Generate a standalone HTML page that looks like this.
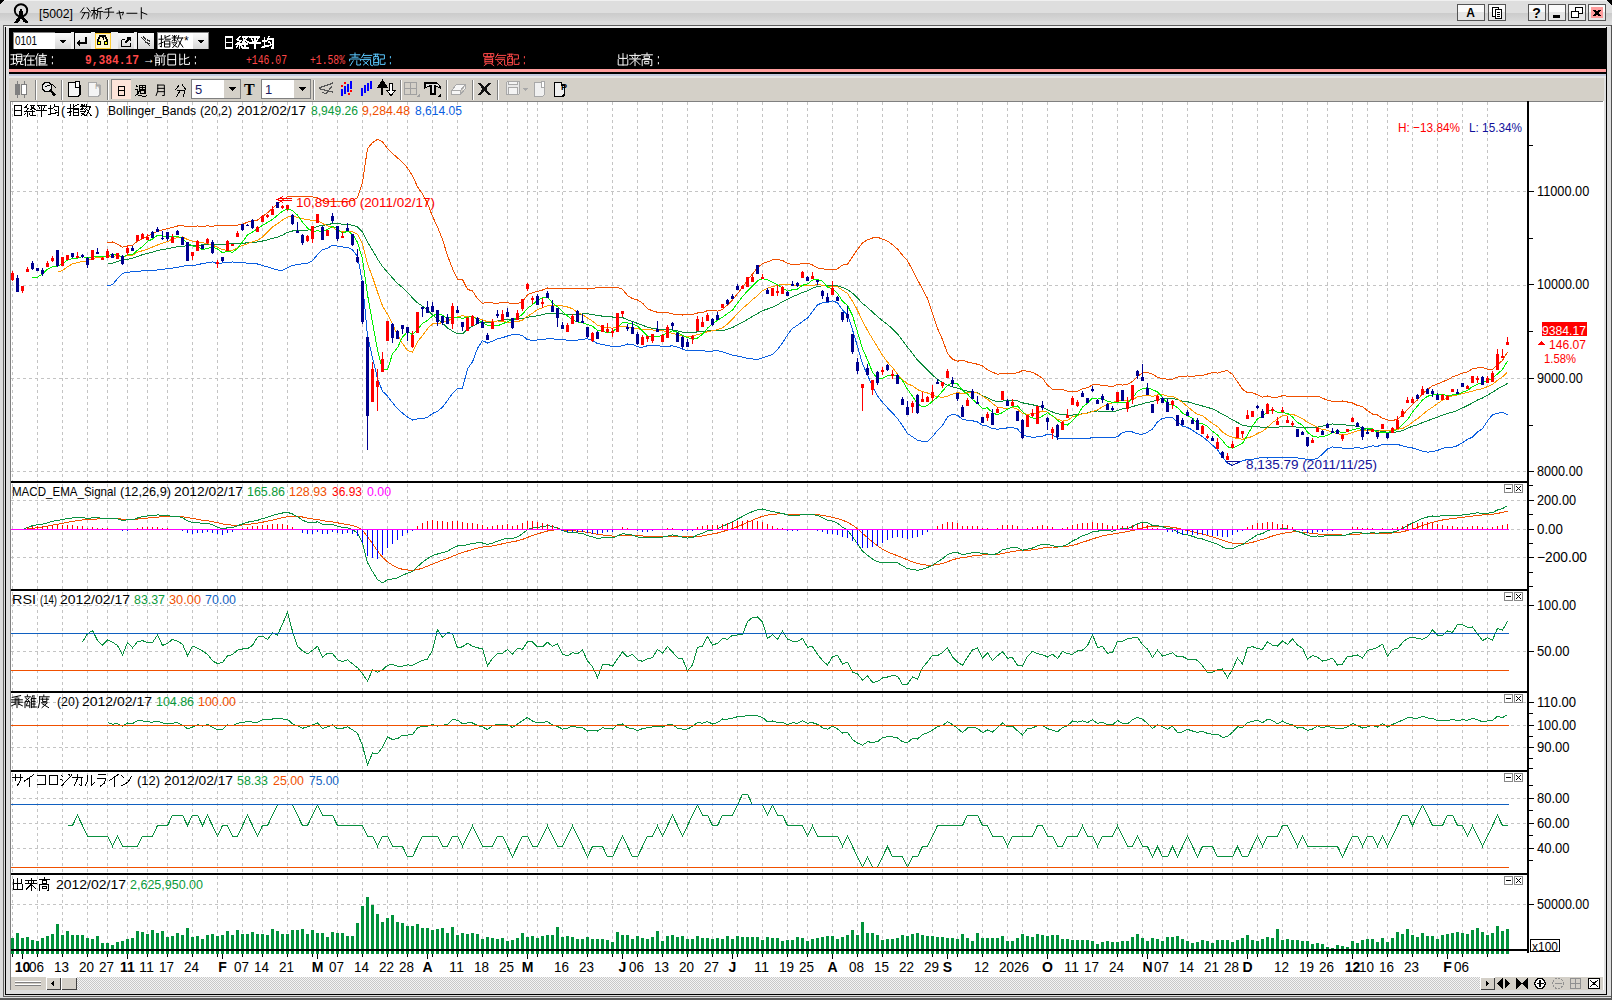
<!DOCTYPE html><html><head><meta charset="utf-8"><style>html,body{margin:0;padding:0;overflow:hidden}body{width:1612px;height:1000px;background:#dcdcdc}svg{display:block;font-family:"Liberation Sans",sans-serif}</style></head><body><svg width="1612" height="1000" viewBox="0 0 1612 1000" shape-rendering="crispEdges"><defs><linearGradient id="tb" x1="0" y1="0" x2="0" y2="1"><stop offset="0" stop-color="#cbcbcb"/><stop offset="1" stop-color="#d8d8d8"/></linearGradient><linearGradient id="btn" x1="0" y1="0" x2="0" y2="1"><stop offset="0" stop-color="#fbfbfb"/><stop offset="1" stop-color="#d6d6d6"/></linearGradient><pattern id="hatch" width="2" height="2" patternUnits="userSpaceOnUse"><rect width="2" height="2" fill="#f4f4f4"/><rect width="1" height="1" fill="#c8c8c8"/><rect x="1" y="1" width="1" height="1" fill="#c8c8c8"/></pattern></defs>
<rect x="0" y="0" width="1612" height="1000" fill="#dcdcdc" />
<rect x="0" y="0" width="1612" height="25" fill="#dedede" />
<rect x="0" y="0" width="1612" height="1" fill="#f0f0f0" />
<rect x="0" y="13" width="1612" height="8" fill="url(#tb)" />
<rect x="0" y="21" width="1612" height="4" fill="#dcdcdc" />
<path d="M0 0H4L0 4Z" fill="#000"/><path d="M1612 0H1606L1612 6Z" fill="#000"/>
<rect x="3" y="25" width="1609" height="1" fill="#606060" />
<rect x="3" y="25" width="1" height="972" fill="#606060" />
<rect x="3" y="996" width="1609" height="1" fill="#606060" />
<rect x="4" y="26" width="1606" height="1" fill="#f4f4f4" />
<rect x="5" y="27" width="1" height="968" fill="#000" />
<rect x="5" y="994" width="1602" height="1" fill="#000" />
<rect x="1606" y="27" width="1" height="968" fill="#000" />
<rect x="6" y="26" width="1600" height="2" fill="#f2f2f2" />
<rect x="1611" y="25" width="1" height="975" fill="#505050" />
<rect x="0" y="998" width="1612" height="1" fill="#585858" />
<rect x="0" y="999" width="1612" height="1" fill="#585858" />
<rect x="6" y="28" width="1600" height="966" fill="#dedede" />
<rect x="9" y="28" width="1597" height="46" fill="#000" />
<rect x="9" y="69" width="1597" height="3" fill="#ff9e9e" />
<rect x="9" y="74" width="1597" height="2" fill="#c3c9de" />
<rect x="9" y="76" width="1597" height="2" fill="#e6e6e6" />
<rect x="9" y="78" width="1595" height="23" fill="#d4d0c8" />
<rect x="10" y="101" width="1594" height="889" fill="#fff" />
<rect x="10" y="101" width="1593" height="1" fill="#808080" />
<rect x="10" y="101" width="1" height="889" fill="#808080" />
<rect x="11" y="977" width="1592" height="13" fill="#d4d0c8" />
<rect x="77" y="977" width="1403" height="13" fill="url(#hatch)" />
<circle cx="21" cy="10.4" r="6.2" fill="none" stroke="#000" stroke-width="1.9" shape-rendering="geometricPrecision"/>
<circle cx="21" cy="9.8" r="1.3" fill="#000"/><path d="M19.6 10.5h2.8l0.8 5.5l4.3 5.2l0.3 1.5l-4 -0.3l-2.8-4.6l-2.6 4.8l-4.3 0.4l0.6-1.5l4.2-4.9z" fill="#000"/>
<text x="39" y="17.5" font-size="13.5" fill="#000" textLength="34" lengthAdjust="spacingAndGlyphs" >[5002]</text>
<path transform="translate(80.00,7.20) scale(1.100)" d="M3.5 0.5L0.5 4.5 M6.5 0.5L9.5 4.5 M2 5H8V8L7 10.5 M4.5 5L1.5 10.5" fill="none" stroke="#000" stroke-width="0.909" stroke-linecap="square"/><path transform="translate(91.60,7.20) scale(1.100)" d="M0 3H4.5 M2.3 0.5V10.5 M2 4L0 8 M2.5 4L4.5 7 M9 0.5L5.5 1.5V6L4.5 10 M5.5 4H10 M7.8 4V10.5" fill="none" stroke="#000" stroke-width="0.909" stroke-linecap="square"/><path transform="translate(103.20,7.20) scale(1.100)" d="M7.5 0.5L2 2 M0.5 4.5H9.5 M5 2V8L3 10.5" fill="none" stroke="#000" stroke-width="0.909" stroke-linecap="square"/><path transform="translate(114.80,7.20) scale(1.100)" d="M2 5.5L8 4.5L7 7 M4 3.5L5.5 10.5" fill="none" stroke="#000" stroke-width="0.909" stroke-linecap="square"/><path transform="translate(126.40,7.20) scale(1.100)" d="M0.5 5.5H9.5" fill="none" stroke="#000" stroke-width="0.909" stroke-linecap="square"/><path transform="translate(138.00,7.20) scale(1.100)" d="M3 0.5V10.5 M3 4.5L8 6.5" fill="none" stroke="#000" stroke-width="0.909" stroke-linecap="square"/>
<rect x="1457.5" y="4.5" width="27" height="16" fill="#fafafa" stroke="#555" stroke-width="1"/><rect x="1458" y="12" width="26" height="8" fill="#e6e6e6"/>
<rect x="1488.5" y="4.5" width="17" height="16" fill="#fafafa" stroke="#555" stroke-width="1"/><rect x="1489" y="12" width="16" height="8" fill="#e6e6e6"/>
<rect x="1528.5" y="4.5" width="17" height="16" fill="#fafafa" stroke="#555" stroke-width="1"/><rect x="1529" y="12" width="16" height="8" fill="#e6e6e6"/>
<rect x="1548.5" y="4.5" width="17" height="16" fill="#fafafa" stroke="#555" stroke-width="1"/><rect x="1549" y="12" width="16" height="8" fill="#e6e6e6"/>
<rect x="1568.5" y="4.5" width="17" height="16" fill="#fafafa" stroke="#555" stroke-width="1"/><rect x="1569" y="12" width="16" height="8" fill="#e6e6e6"/>
<rect x="1588.5" y="4.5" width="17" height="16" fill="#fafafa" stroke="#555" stroke-width="1"/><rect x="1589" y="12" width="16" height="8" fill="#e6e6e6"/>
<text x="1470.5" y="17" font-size="12" font-weight="bold" text-anchor="middle" fill="#000">A</text>
<rect x="1492.5" y="7.5" width="6" height="9" fill="#fff" stroke="#000"/><rect x="1495.5" y="9.5" width="6" height="9" fill="#fff" stroke="#000"/><path d="M1497 12h3M1497 14h3M1497 16h3" stroke="#000"/>
<text x="1536.5" y="18" font-size="14" font-weight="bold" text-anchor="middle" fill="#000">?</text>
<rect x="1553" y="15" width="7" height="3" fill="#000" />
<rect x="1575.5" y="7.5" width="7" height="6" fill="#fff" stroke="#000" stroke-width="1.5"/><rect x="1571.5" y="11.5" width="7" height="6" fill="#fff" stroke="#000" stroke-width="1.5"/>
<rect x="1591" y="7" width="12" height="11" fill="#ff9c9c" />
<path d="M1593.5 10L1600.5 16M1600.5 10L1593.5 16" stroke="#000" stroke-width="2"/>
<rect x="13" y="32" width="42" height="17" fill="#808080" />
<rect x="14" y="33" width="41" height="16" fill="#fff" />
<text x="15" y="44.5" font-size="13" fill="#000" textLength="22" lengthAdjust="spacingAndGlyphs" >0101</text>
<rect x="55" y="33" width="16" height="16" fill="url(#btn)" />
<path d="M59 40h7l-3.5 3.5z" fill="#000"/>
<rect x="71" y="32" width="3" height="17" fill="#f0f0f0" />
<rect x="75" y="33" width="16" height="16" fill="url(#btn)" />
<rect x="91" y="32" width="4" height="17" fill="#f0f0f0" />
<rect x="95" y="33" width="16" height="16" fill="#fff7d0" />
<rect x="95.5" y="33.5" width="15" height="15" fill="none" stroke="#ffcc33"/>
<rect x="111" y="32" width="7" height="17" fill="#f0f0f0" />
<rect x="118" y="33" width="16" height="16" fill="url(#btn)" />
<rect x="134" y="32" width="3" height="17" fill="#f0f0f0" />
<rect x="138" y="33" width="16" height="16" fill="url(#btn)" />
<path d="M86 37v6h-8M80.5 40.5L77.5 43L80.5 45.5" fill="none" stroke="#000" stroke-width="1.5"/>
<path d="M98 45v-5l2-4h3l0.5 4M107 45v-5l-2-4h-3" fill="none" stroke="#000" stroke-width="1.6"/><rect x="97" y="41" width="4" height="4" fill="#000"/><rect x="104" y="41" width="4" height="4" fill="#000"/><rect x="98" y="42" width="2" height="2" fill="#ff0"/><rect x="105" y="42" width="2" height="2" fill="#ff0"/>
<path d="M121.5 39.5v7h9v-4M121.5 39.5h3" fill="none" stroke="#000" stroke-width="1.5"/><path d="M125 43l5-5M127 38h3.5v3" fill="none" stroke="#000" stroke-width="1.5"/>
<path d="M141 37l9 9M143 36l3 4M145 42l5 2M147 40l3 1" fill="none" stroke="#333" stroke-width="1.3"/>
<rect x="157" y="32" width="52" height="17" fill="#808080" />
<rect x="158" y="33" width="35" height="16" fill="#fff" />
<rect x="193" y="33" width="15" height="16" fill="url(#btn)" />
<path d="M197 40h7l-3.5 3.5z" fill="#000"/>
<path transform="translate(159.00,35.00) scale(1.200)" d="M0 3.5H3.5 M2 0.5V10L1 9.5 M0 7.5L3.5 6 M5 0.5V3.5H9.5 M9 0.5L5.5 2 M5 5H9V10H5Z M5 7.5H9" fill="none" stroke="#000" stroke-width="0.833" stroke-linecap="square"/><path transform="translate(171.50,35.00) scale(1.200)" d="M1 0.5L2 2 M4 0.5L3 2 M0.5 2.5H4.5 M2.5 0.5V5 M0.5 5L2.5 3.5L4.5 5.5 M0.5 6.5H4.5L1 10.5 M1.5 8L4.5 10 M6 0.5L5 4 M5.5 2.5H9.5 M9 2.5L5.5 10 M6 5L9.5 10" fill="none" stroke="#000" stroke-width="0.833" stroke-linecap="square"/>
<text x="184" y="45" font-size="12" fill="#000" >*</text>
<path transform="translate(223.00,36.00) scale(1.200)" d="M2 1H8V10H2Z M2 5.5H8" fill="none" stroke="#fff" stroke-width="1.333" stroke-linecap="square"/><path transform="translate(235.90,36.00) scale(1.200)" d="M3 0.5L1 3L4 4L1 6.5H5 M3 6.5V10.5 M1 8.5L0.5 9.5 M4.5 8L5 9 M5.5 1H9.5L6 5 M6.5 2.5L10 5 M6 6.5H9.5 M7.7 5.5V10 M5.5 10H10" fill="none" stroke="#fff" stroke-width="1.333" stroke-linecap="square"/><path transform="translate(248.80,36.00) scale(1.200)" d="M1 1H9 M2.5 2.5L3.5 4.5 M7.5 2.5L6.5 4.5 M0.5 6H9.5 M5 1V10.5" fill="none" stroke="#fff" stroke-width="1.333" stroke-linecap="square"/><path transform="translate(261.70,36.00) scale(1.200)" d="M0.5 4H4 M2.2 1.5V9 M0.5 9.5L4.5 8 M6 0.5L5 3.5 M5.5 2.5H9.5V10H8.5 M6 5L7.5 6 M5 8.5L8.5 7" fill="none" stroke="#fff" stroke-width="1.333" stroke-linecap="square"/>
<path transform="translate(11.00,53.00) scale(1.200)" d="M0 1.5H4 M0 5H4 M2 1.5V9 M0 9.5L4 8.5 M5 1H9V7H5Z M5 3H9 M5 5H9 M6 7L4.5 10 M8 7V9.5H10" fill="none" stroke="#fff" stroke-width="0.833" stroke-linecap="square"/><path transform="translate(23.00,53.00) scale(1.200)" d="M0.5 2.5H9.5 M4.5 0.5L1 6 M2 5V10.5 M4 6H9 M6.5 4V9.5 M3.5 10H9.5" fill="none" stroke="#fff" stroke-width="0.833" stroke-linecap="square"/><path transform="translate(35.00,53.00) scale(1.200)" d="M2.5 0.5L0.5 5 M1.5 3.5V10.5 M3.5 2H9.5 M6.5 0.5V3 M4.5 3.5H8.5V9H4.5Z M4.5 5.3H8.5 M4.5 7.2H8.5 M3.5 10H10 M3.5 3.5V10" fill="none" stroke="#fff" stroke-width="0.833" stroke-linecap="square"/><path transform="translate(47.00,53.00) scale(1.200)" d="M4.5 3V4 M4.5 8V9" fill="none" stroke="#fff" stroke-width="0.833" stroke-linecap="square"/>
<text x="85" y="63.5" font-size="12.5" fill="#ff4848" textLength="54" lengthAdjust="spacingAndGlyphs" font-family="Liberation Mono" font-weight="bold">9,384.17</text>
<text x="143" y="63" font-size="12" fill="#fff" >&#8594;</text>
<path transform="translate(154.00,53.00) scale(1.200)" d="M2 0.5L3 2 M8 0.5L7 2 M0.5 2.5H9.5 M1.5 4H4.5V10H4 M1.5 4V10.5 M1.5 6H4.5 M1.5 8H4.5 M6.5 4V8 M8.5 3.5V10L7.5 10" fill="none" stroke="#fff" stroke-width="0.833" stroke-linecap="square"/><path transform="translate(166.00,53.00) scale(1.200)" d="M2 1H8V10H2Z M2 5.5H8" fill="none" stroke="#fff" stroke-width="0.833" stroke-linecap="square"/><path transform="translate(178.00,53.00) scale(1.200)" d="M1.5 1V10L4 9 M1.5 5H4 M5.5 1V9.5H9.5V8 M5.5 5L9 3.5" fill="none" stroke="#fff" stroke-width="0.833" stroke-linecap="square"/><path transform="translate(190.00,53.00) scale(1.200)" d="M4.5 3V4 M4.5 8V9" fill="none" stroke="#fff" stroke-width="0.833" stroke-linecap="square"/>
<text x="246" y="63.5" font-size="12.5" fill="#ff4848" textLength="41" lengthAdjust="spacingAndGlyphs" font-family="Liberation Mono">+146.07</text>
<text x="310" y="63.5" font-size="12.5" fill="#ff4848" textLength="35" lengthAdjust="spacingAndGlyphs" font-family="Liberation Mono">+1.58%</text>
<path transform="translate(349.00,53.00) scale(1.200)" d="M5 0V3 M1 1.5H9 M2.5 3.5H7.5 M0.5 6.5V5H9.5V6.5 M3.5 6.5L1 10.5 M6.5 6.5V10H9.5V9" fill="none" stroke="#5ac8ff" stroke-width="0.833" stroke-linecap="square"/><path transform="translate(361.00,53.00) scale(1.200)" d="M2.5 0.5L0.5 4 M2 2H9 M2.5 4H8 M0.5 5.5H8V10L9.5 10.5 M2 6.5L6 10 M6 6.5L2 10" fill="none" stroke="#5ac8ff" stroke-width="0.833" stroke-linecap="square"/><path transform="translate(373.00,53.00) scale(1.200)" d="M0.5 1H5 M1 3H4.5V10H1Z M2 1V3 M3.5 1V3 M1 6L2 4.5 M3.5 4.5L4.5 6 M1 8H4.5 M6 1.5H9.5V5H6V9.5H10V8" fill="none" stroke="#5ac8ff" stroke-width="0.833" stroke-linecap="square"/><path transform="translate(385.00,53.00) scale(1.200)" d="M4.5 3V4 M4.5 8V9" fill="none" stroke="#5ac8ff" stroke-width="0.833" stroke-linecap="square"/>
<path transform="translate(483.00,53.00) scale(1.200)" d="M1 0.5H9V3H1Z M3.5 0.5V3 M6.5 0.5V3 M2 4H8V8.5H2Z M2 5.5H8 M2 7H8 M3 9L1 10.5 M7 9L9 10.5" fill="none" stroke="#ff4848" stroke-width="0.833" stroke-linecap="square"/><path transform="translate(495.00,53.00) scale(1.200)" d="M2.5 0.5L0.5 4 M2 2H9 M2.5 4H8 M0.5 5.5H8V10L9.5 10.5 M2 6.5L6 10 M6 6.5L2 10" fill="none" stroke="#ff4848" stroke-width="0.833" stroke-linecap="square"/><path transform="translate(507.00,53.00) scale(1.200)" d="M0.5 1H5 M1 3H4.5V10H1Z M2 1V3 M3.5 1V3 M1 6L2 4.5 M3.5 4.5L4.5 6 M1 8H4.5 M6 1.5H9.5V5H6V9.5H10V8" fill="none" stroke="#ff4848" stroke-width="0.833" stroke-linecap="square"/><path transform="translate(519.00,53.00) scale(1.200)" d="M4.5 3V4 M4.5 8V9" fill="none" stroke="#ff4848" stroke-width="0.833" stroke-linecap="square"/>
<path transform="translate(617.00,53.00) scale(1.200)" d="M5 0.5V10 M1.5 1.5V4.5H8.5V1.5 M1 5.5V10H9V5.5" fill="none" stroke="#fff" stroke-width="0.833" stroke-linecap="square"/><path transform="translate(629.00,53.00) scale(1.200)" d="M0.5 2H9.5 M2.5 3L3.5 4.5 M7.5 3L6.5 4.5 M0.5 5H9.5 M5 0.5V10.5 M4.5 6L1 9.5 M5.5 6L9 9.5" fill="none" stroke="#fff" stroke-width="0.833" stroke-linecap="square"/><path transform="translate(641.00,53.00) scale(1.200)" d="M5 0V1 M0.5 1.5H9.5 M3 2.5H7V4.5H3Z M1 10.5V5.5H9V10.5H8 M3.5 7H6.5V9H3.5Z" fill="none" stroke="#fff" stroke-width="0.833" stroke-linecap="square"/><path transform="translate(653.00,53.00) scale(1.200)" d="M4.5 3V4 M4.5 8V9" fill="none" stroke="#fff" stroke-width="0.833" stroke-linecap="square"/>
<rect x="35" y="80" width="1" height="20" fill="#808080" />
<rect x="36" y="80" width="1" height="20" fill="#ffffff" />
<rect x="61" y="80" width="1" height="20" fill="#808080" />
<rect x="62" y="80" width="1" height="20" fill="#ffffff" />
<rect x="107" y="80" width="1" height="20" fill="#808080" />
<rect x="108" y="80" width="1" height="20" fill="#ffffff" />
<rect x="313" y="80" width="1" height="20" fill="#808080" />
<rect x="314" y="80" width="1" height="20" fill="#ffffff" />
<rect x="400" y="80" width="1" height="20" fill="#808080" />
<rect x="401" y="80" width="1" height="20" fill="#ffffff" />
<rect x="446" y="80" width="1" height="20" fill="#808080" />
<rect x="447" y="80" width="1" height="20" fill="#ffffff" />
<rect x="472" y="80" width="1" height="20" fill="#808080" />
<rect x="473" y="80" width="1" height="20" fill="#ffffff" />
<rect x="497" y="80" width="1" height="20" fill="#808080" />
<rect x="498" y="80" width="1" height="20" fill="#ffffff" />
<rect x="15" y="84" width="5" height="11" fill="#808080" />
<rect x="17" y="81" width="1" height="17" fill="#808080" />
<rect x="21.5" y="84.5" width="5" height="10" fill="#fff" stroke="#808080"/>
<rect x="24" y="81" width="1" height="4" fill="#808080" />
<rect x="24" y="95" width="1" height="3" fill="#808080" />
<circle cx="47" cy="87" r="4.8" fill="#e8e8e8" stroke="#000" stroke-width="1.5"/><path d="M50.5 90.5L55 95.5" stroke="#000" stroke-width="2.5"/><path d="M45 87L52 84L56 88" fill="none" stroke="#000" stroke-width="1"/>
<path d="M68.5 82.5h8v3h3.5v9l-2 2h-9.5z" fill="#f4f4f4" stroke="#000" stroke-width="1.4"/><rect x="75.5" y="81.5" width="4" height="6" fill="#fff" stroke="#000"/>
<path d="M88.5 82.5h8v3h3.5v9l-2 2h-9.5z" fill="#f4f4f4" stroke="#a8a8a8" stroke-width="1.4"/><text x="95" y="89" font-size="8" fill="#a8a8a8">R</text>
<rect x="111" y="79" width="20" height="20" fill="#fde3d9" />
<rect x="111" y="79" width="20" height="1" fill="#808080" />
<rect x="111" y="79" width="1" height="20" fill="#808080" />
<path transform="translate(116.00,85.00) scale(1.000)" d="M2 1H8V10H2Z M2 5.5H8" fill="none" stroke="#000" stroke-width="1.000" stroke-linecap="square"/>
<path transform="translate(135.00,84.50) scale(1.150)" d="M1 1L2 2 M0.5 4H2V8L0.5 9.5 M2 9Q4 10.5 10 10 M3.5 1H9.5V8H8.5 M3.5 1V6L3 8 M5 3H8 M6.5 2V4.5 M5 4.5H8 M5 5.5H8V7.5H5Z" fill="none" stroke="#000" stroke-width="0.870" stroke-linecap="square"/>
<path transform="translate(155.00,84.50) scale(1.100)" d="M2.5 0.5H8.5V10L7 10 M2.5 0.5V6L1 10 M2.5 3.5H8.5 M2.5 6.5H8.5" fill="none" stroke="#000" stroke-width="0.909" stroke-linecap="square"/>
<path transform="translate(175.00,84.50) scale(1.150)" d="M3.5 0.5L0.5 4.5 M6.5 0.5L9.5 4.5 M2 5H8V8L7 10.5 M4.5 5L1.5 10.5" fill="none" stroke="#000" stroke-width="0.870" stroke-linecap="square"/>
<rect x="191.5" y="79.5" width="49" height="19" fill="#fff" stroke="#808080"/>
<rect x="224" y="80" width="16" height="18" fill="#d4d0c8" />
<path d="M229 87h7l-3.5 4z" fill="#000"/>
<text x="195" y="94" font-size="13" fill="#1a1a60" >5</text>
<text x="244" y="95" font-size="16" font-weight="bold" font-family="Liberation Serif" fill="#000">T</text>
<rect x="261.5" y="79.5" width="49" height="19" fill="#fff" stroke="#808080"/>
<rect x="294" y="80" width="16" height="18" fill="#d4d0c8" />
<path d="M299 87h7l-3.5 4z" fill="#000"/>
<text x="265" y="94" font-size="13" fill="#1a1a60" >1</text>
<path d="M319 88l14-5M320 89l13 3M322 92l4 2l6-8" fill="none" stroke="#555" stroke-width="1.3"/>
<rect x="341" y="89" width="2" height="7" fill="#0000ff" />
<rect x="344" y="86" width="2" height="8" fill="#0000ff" />
<rect x="347" y="84" width="2" height="8" fill="#0000ff" />
<rect x="350" y="81" width="2" height="8" fill="#0000ff" />
<rect x="341" y="85" width="2" height="2" fill="#ff0000" />
<rect x="344" y="82" width="2" height="2" fill="#ff0000" />
<rect x="348" y="93" width="2" height="2" fill="#ff0000" />
<rect x="350" y="90" width="2" height="2" fill="#ff0000" />
<rect x="361" y="88" width="2" height="8" fill="#0000ff" />
<rect x="364" y="85" width="2" height="8" fill="#0000ff" />
<rect x="367" y="83" width="2" height="8" fill="#0000ff" />
<rect x="370" y="81" width="2" height="8" fill="#0000ff" />
<path d="M382 95V84M379 86.5L382.5 81L386 86.5z" stroke="#000" stroke-width="2" fill="#000"/>
<path d="M389.5 83.5h3v7h2.5L391 96L387 90.5h2.5z" fill="#fff" stroke="#000"/>
<path d="M404.5 82.5h12v12h-12zM410.5 82.5v12M404.5 88.5h12" fill="none" stroke="#a0a0a0"/><path d="M416 97h4v-4z" fill="#a0a0a0"/>
<path d="M425 83h12l3 3v2l-4-2h-1v8h-4v-8h-2l-4 2z" fill="#e0e0e0" stroke="#000" stroke-width="1.2"/><path d="M437 97h4v-4z" fill="#000"/>
<path d="M451.5 90.5l5-6h9l-5 6zM451.5 90.5v4h9v-4M460.5 94.5l5-6v-4" fill="#f6f6f6" stroke="#a8a8a8"/>
<path d="M479 83L490 95M490 83L479 95" stroke="#111" stroke-width="2.4"/>
<rect x="506.5" y="81.5" width="13" height="13" rx="1.5" fill="#e8e8e8" stroke="#a8a8a8"/><rect x="508.5" y="81.5" width="9" height="3" fill="#f4f4f4" stroke="#a8a8a8"/><rect x="508.5" y="87.5" width="9" height="7" fill="#f4f4f4" stroke="#a8a8a8"/><path d="M522 88h6l-3 3z" fill="#a8a8a8"/>
<path d="M534.5 82.5h7v3h3v9l-2 2h-8z" fill="#f0f0f0" stroke="#a8a8a8" stroke-width="1.3"/><rect x="541.5" y="81.5" width="3" height="6" fill="#fff" stroke="#a8a8a8"/>
<path d="M554.5 82.5h7v3h3v9l-2 2h-8z" fill="#f0f0f0" stroke="#000" stroke-width="1.5"/><text x="561" y="90" font-size="9" font-weight="bold" fill="#000">P</text>
<path d="M12.5 102V481 M37.5 102V481 M62.5 102V481 M87.5 102V481 M107.5 102V481 M127.5 102V481 M147.5 102V481 M167.5 102V481 M192.5 102V481 M217.5 102V481 M242.5 102V481 M262.5 102V481 M287.5 102V481 M312.5 102V481 M337.5 102V481 M362.5 102V481 M387.5 102V481 M407.5 102V481 M432.5 102V481 M457.5 102V481 M482.5 102V481 M507.5 102V481 M527.5 102V481 M537.5 102V481 M562.5 102V481 M587.5 102V481 M612.5 102V481 M637.5 102V481 M662.5 102V481 M687.5 102V481 M712.5 102V481 M737.5 102V481 M762.5 102V481 M787.5 102V481 M807.5 102V481 M832.5 102V481 M857.5 102V481 M882.5 102V481 M907.5 102V481 M932.5 102V481 M957.5 102V481 M982.5 102V481 M1007.5 102V481 M1022.5 102V481 M1047.5 102V481 M1072.5 102V481 M1092.5 102V481 M1117.5 102V481 M1142.5 102V481 M1162.5 102V481 M1187.5 102V481 M1212.5 102V481 M1232.5 102V481 M1257.5 102V481 M1282.5 102V481 M1307.5 102V481 M1327.5 102V481 M1352.5 102V481 M1367.5 102V481 M1387.5 102V481 M1412.5 102V481 M1437.5 102V481 M1462.5 102V481 M1487.5 102V481 M12.5 484V589 M37.5 484V589 M62.5 484V589 M87.5 484V589 M107.5 484V589 M127.5 484V589 M147.5 484V589 M167.5 484V589 M192.5 484V589 M217.5 484V589 M242.5 484V589 M262.5 484V589 M287.5 484V589 M312.5 484V589 M337.5 484V589 M362.5 484V589 M387.5 484V589 M407.5 484V589 M432.5 484V589 M457.5 484V589 M482.5 484V589 M507.5 484V589 M527.5 484V589 M537.5 484V589 M562.5 484V589 M587.5 484V589 M612.5 484V589 M637.5 484V589 M662.5 484V589 M687.5 484V589 M712.5 484V589 M737.5 484V589 M762.5 484V589 M787.5 484V589 M807.5 484V589 M832.5 484V589 M857.5 484V589 M882.5 484V589 M907.5 484V589 M932.5 484V589 M957.5 484V589 M982.5 484V589 M1007.5 484V589 M1022.5 484V589 M1047.5 484V589 M1072.5 484V589 M1092.5 484V589 M1117.5 484V589 M1142.5 484V589 M1162.5 484V589 M1187.5 484V589 M1212.5 484V589 M1232.5 484V589 M1257.5 484V589 M1282.5 484V589 M1307.5 484V589 M1327.5 484V589 M1352.5 484V589 M1367.5 484V589 M1387.5 484V589 M1412.5 484V589 M1437.5 484V589 M1462.5 484V589 M1487.5 484V589 M12.5 592V691 M37.5 592V691 M62.5 592V691 M87.5 592V691 M107.5 592V691 M127.5 592V691 M147.5 592V691 M167.5 592V691 M192.5 592V691 M217.5 592V691 M242.5 592V691 M262.5 592V691 M287.5 592V691 M312.5 592V691 M337.5 592V691 M362.5 592V691 M387.5 592V691 M407.5 592V691 M432.5 592V691 M457.5 592V691 M482.5 592V691 M507.5 592V691 M527.5 592V691 M537.5 592V691 M562.5 592V691 M587.5 592V691 M612.5 592V691 M637.5 592V691 M662.5 592V691 M687.5 592V691 M712.5 592V691 M737.5 592V691 M762.5 592V691 M787.5 592V691 M807.5 592V691 M832.5 592V691 M857.5 592V691 M882.5 592V691 M907.5 592V691 M932.5 592V691 M957.5 592V691 M982.5 592V691 M1007.5 592V691 M1022.5 592V691 M1047.5 592V691 M1072.5 592V691 M1092.5 592V691 M1117.5 592V691 M1142.5 592V691 M1162.5 592V691 M1187.5 592V691 M1212.5 592V691 M1232.5 592V691 M1257.5 592V691 M1282.5 592V691 M1307.5 592V691 M1327.5 592V691 M1352.5 592V691 M1367.5 592V691 M1387.5 592V691 M1412.5 592V691 M1437.5 592V691 M1462.5 592V691 M1487.5 592V691 M12.5 694V770 M37.5 694V770 M62.5 694V770 M87.5 694V770 M107.5 694V770 M127.5 694V770 M147.5 694V770 M167.5 694V770 M192.5 694V770 M217.5 694V770 M242.5 694V770 M262.5 694V770 M287.5 694V770 M312.5 694V770 M337.5 694V770 M362.5 694V770 M387.5 694V770 M407.5 694V770 M432.5 694V770 M457.5 694V770 M482.5 694V770 M507.5 694V770 M527.5 694V770 M537.5 694V770 M562.5 694V770 M587.5 694V770 M612.5 694V770 M637.5 694V770 M662.5 694V770 M687.5 694V770 M712.5 694V770 M737.5 694V770 M762.5 694V770 M787.5 694V770 M807.5 694V770 M832.5 694V770 M857.5 694V770 M882.5 694V770 M907.5 694V770 M932.5 694V770 M957.5 694V770 M982.5 694V770 M1007.5 694V770 M1022.5 694V770 M1047.5 694V770 M1072.5 694V770 M1092.5 694V770 M1117.5 694V770 M1142.5 694V770 M1162.5 694V770 M1187.5 694V770 M1212.5 694V770 M1232.5 694V770 M1257.5 694V770 M1282.5 694V770 M1307.5 694V770 M1327.5 694V770 M1352.5 694V770 M1367.5 694V770 M1387.5 694V770 M1412.5 694V770 M1437.5 694V770 M1462.5 694V770 M1487.5 694V770 M12.5 773V873 M37.5 773V873 M62.5 773V873 M87.5 773V873 M107.5 773V873 M127.5 773V873 M147.5 773V873 M167.5 773V873 M192.5 773V873 M217.5 773V873 M242.5 773V873 M262.5 773V873 M287.5 773V873 M312.5 773V873 M337.5 773V873 M362.5 773V873 M387.5 773V873 M407.5 773V873 M432.5 773V873 M457.5 773V873 M482.5 773V873 M507.5 773V873 M527.5 773V873 M537.5 773V873 M562.5 773V873 M587.5 773V873 M612.5 773V873 M637.5 773V873 M662.5 773V873 M687.5 773V873 M712.5 773V873 M737.5 773V873 M762.5 773V873 M787.5 773V873 M807.5 773V873 M832.5 773V873 M857.5 773V873 M882.5 773V873 M907.5 773V873 M932.5 773V873 M957.5 773V873 M982.5 773V873 M1007.5 773V873 M1022.5 773V873 M1047.5 773V873 M1072.5 773V873 M1092.5 773V873 M1117.5 773V873 M1142.5 773V873 M1162.5 773V873 M1187.5 773V873 M1212.5 773V873 M1232.5 773V873 M1257.5 773V873 M1282.5 773V873 M1307.5 773V873 M1327.5 773V873 M1352.5 773V873 M1367.5 773V873 M1387.5 773V873 M1412.5 773V873 M1437.5 773V873 M1462.5 773V873 M1487.5 773V873 M12.5 876V949 M37.5 876V949 M62.5 876V949 M87.5 876V949 M107.5 876V949 M127.5 876V949 M147.5 876V949 M167.5 876V949 M192.5 876V949 M217.5 876V949 M242.5 876V949 M262.5 876V949 M287.5 876V949 M312.5 876V949 M337.5 876V949 M362.5 876V949 M387.5 876V949 M407.5 876V949 M432.5 876V949 M457.5 876V949 M482.5 876V949 M507.5 876V949 M527.5 876V949 M537.5 876V949 M562.5 876V949 M587.5 876V949 M612.5 876V949 M637.5 876V949 M662.5 876V949 M687.5 876V949 M712.5 876V949 M737.5 876V949 M762.5 876V949 M787.5 876V949 M807.5 876V949 M832.5 876V949 M857.5 876V949 M882.5 876V949 M907.5 876V949 M932.5 876V949 M957.5 876V949 M982.5 876V949 M1007.5 876V949 M1022.5 876V949 M1047.5 876V949 M1072.5 876V949 M1092.5 876V949 M1117.5 876V949 M1142.5 876V949 M1162.5 876V949 M1187.5 876V949 M1212.5 876V949 M1232.5 876V949 M1257.5 876V949 M1282.5 876V949 M1307.5 876V949 M1327.5 876V949 M1352.5 876V949 M1367.5 876V949 M1387.5 876V949 M1412.5 876V949 M1437.5 876V949 M1462.5 876V949 M1487.5 876V949" stroke="#c4c4c4" stroke-dasharray="3 3" fill="none"/>
<path d="M11 191.5H1526 M11 285.5H1526 M11 378.5H1526 M11 471.5H1526 M11 500.5H1526 M11 529.5H1526 M11 557.5H1526 M11 605.5H1526 M11 651.5H1526 M11 702.5H1526 M11 725.5H1526 M11 747.5H1526 M11 798.5H1526 M11 823.5H1526 M11 848.5H1526 M11 904.5H1526" stroke="#c4c4c4" stroke-dasharray="3 3" fill="none"/>
<rect x="11" y="481" width="1518" height="2" fill="#000" />
<rect x="11" y="589" width="1518" height="2" fill="#000" />
<rect x="11" y="691" width="1518" height="2" fill="#000" />
<rect x="11" y="770" width="1518" height="2" fill="#000" />
<rect x="11" y="873" width="1518" height="2" fill="#000" />
<rect x="1527" y="101" width="2" height="852" fill="#000" />
<rect x="1529" y="191" width="5" height="1" fill="#000" />
<text x="1537" y="196" font-size="14" fill="#000" textLength="52.3" lengthAdjust="spacingAndGlyphs" >11000.00</text>
<rect x="1529" y="284" width="5" height="1" fill="#000" />
<text x="1537" y="289" font-size="14" fill="#000" textLength="52.3" lengthAdjust="spacingAndGlyphs" >10000.00</text>
<rect x="1529" y="378" width="5" height="1" fill="#000" />
<text x="1537" y="383" font-size="14" fill="#000" textLength="45.699999999999996" lengthAdjust="spacingAndGlyphs" >9000.00</text>
<rect x="1529" y="471" width="5" height="1" fill="#000" />
<text x="1537" y="476" font-size="14" fill="#000" textLength="45.699999999999996" lengthAdjust="spacingAndGlyphs" >8000.00</text>
<rect x="1529" y="145" width="4" height="1" fill="#000" />
<rect x="1529" y="238" width="4" height="1" fill="#000" />
<rect x="1529" y="331" width="4" height="1" fill="#000" />
<rect x="1529" y="425" width="4" height="1" fill="#000" />
<rect x="1529" y="500" width="5" height="1" fill="#000" />
<text x="1537" y="505" font-size="14" fill="#000" textLength="39.099999999999994" lengthAdjust="spacingAndGlyphs" >200.00</text>
<rect x="1529" y="529" width="5" height="1" fill="#000" />
<text x="1537" y="534" font-size="14" fill="#000" textLength="25.9" lengthAdjust="spacingAndGlyphs" >0.00</text>
<rect x="1529" y="557" width="5" height="1" fill="#000" />
<text x="1537" y="562" font-size="14" fill="#000" textLength="50" lengthAdjust="spacingAndGlyphs" >&#8722;200.00</text>
<rect x="1529" y="485" width="4" height="1" fill="#000" />
<rect x="1529" y="514" width="4" height="1" fill="#000" />
<rect x="1529" y="543" width="4" height="1" fill="#000" />
<rect x="1529" y="572" width="4" height="1" fill="#000" />
<rect x="1529" y="586" width="4" height="1" fill="#000" />
<rect x="1529" y="605" width="5" height="1" fill="#000" />
<text x="1537" y="610" font-size="14" fill="#000" textLength="39.099999999999994" lengthAdjust="spacingAndGlyphs" >100.00</text>
<rect x="1529" y="651" width="5" height="1" fill="#000" />
<text x="1537" y="656" font-size="14" fill="#000" textLength="32.5" lengthAdjust="spacingAndGlyphs" >50.00</text>
<rect x="1529" y="702" width="5" height="1" fill="#000" />
<text x="1537" y="707" font-size="14" fill="#000" textLength="39.099999999999994" lengthAdjust="spacingAndGlyphs" >110.00</text>
<rect x="1529" y="725" width="5" height="1" fill="#000" />
<text x="1537" y="730" font-size="14" fill="#000" textLength="39.099999999999994" lengthAdjust="spacingAndGlyphs" >100.00</text>
<rect x="1529" y="747" width="5" height="1" fill="#000" />
<text x="1537" y="752" font-size="14" fill="#000" textLength="32.5" lengthAdjust="spacingAndGlyphs" >90.00</text>
<rect x="1529" y="713" width="4" height="1" fill="#000" />
<rect x="1529" y="736" width="4" height="1" fill="#000" />
<rect x="1529" y="758" width="4" height="1" fill="#000" />
<rect x="1529" y="768" width="4" height="1" fill="#000" />
<rect x="1529" y="798" width="5" height="1" fill="#000" />
<text x="1537" y="803" font-size="14" fill="#000" textLength="32.5" lengthAdjust="spacingAndGlyphs" >80.00</text>
<rect x="1529" y="823" width="5" height="1" fill="#000" />
<text x="1537" y="828" font-size="14" fill="#000" textLength="32.5" lengthAdjust="spacingAndGlyphs" >60.00</text>
<rect x="1529" y="848" width="5" height="1" fill="#000" />
<text x="1537" y="853" font-size="14" fill="#000" textLength="32.5" lengthAdjust="spacingAndGlyphs" >40.00</text>
<rect x="1529" y="785" width="4" height="1" fill="#000" />
<rect x="1529" y="810" width="4" height="1" fill="#000" />
<rect x="1529" y="835" width="4" height="1" fill="#000" />
<rect x="1529" y="860" width="4" height="1" fill="#000" />
<rect x="1529" y="904" width="5" height="1" fill="#000" />
<text x="1537" y="909" font-size="14" fill="#000" textLength="52.3" lengthAdjust="spacingAndGlyphs" >50000.00</text>
<rect x="1530.5" y="939.5" width="29" height="12" fill="#fff" stroke="#000"/>
<text x="1532" y="950.5" font-size="13" fill="#000" textLength="26" lengthAdjust="spacingAndGlyphs" >x100</text>
<rect x="1504.5" y="484.5" width="8" height="8" fill="#fff" stroke="#888"/><rect x="1506" y="488" width="5" height="1" fill="#000"/><rect x="1514.5" y="484.5" width="8" height="8" fill="#fff" stroke="#888"/><path d="M1516 486L1521 491M1521 486L1516 491" stroke="#000"/>
<rect x="1504.5" y="592.5" width="8" height="8" fill="#fff" stroke="#888"/><rect x="1506" y="596" width="5" height="1" fill="#000"/><rect x="1514.5" y="592.5" width="8" height="8" fill="#fff" stroke="#888"/><path d="M1516 594L1521 599M1521 594L1516 599" stroke="#000"/>
<rect x="1504.5" y="694.5" width="8" height="8" fill="#fff" stroke="#888"/><rect x="1506" y="698" width="5" height="1" fill="#000"/><rect x="1514.5" y="694.5" width="8" height="8" fill="#fff" stroke="#888"/><path d="M1516 696L1521 701M1521 696L1516 701" stroke="#000"/>
<rect x="1504.5" y="773.5" width="8" height="8" fill="#fff" stroke="#888"/><rect x="1506" y="777" width="5" height="1" fill="#000"/><rect x="1514.5" y="773.5" width="8" height="8" fill="#fff" stroke="#888"/><path d="M1516 775L1521 780M1521 775L1516 780" stroke="#000"/>
<rect x="1504.5" y="876.5" width="8" height="8" fill="#fff" stroke="#888"/><rect x="1506" y="880" width="5" height="1" fill="#000"/><rect x="1514.5" y="876.5" width="8" height="8" fill="#fff" stroke="#888"/><path d="M1516 878L1521 883M1521 878L1516 883" stroke="#000"/>
<rect x="12" y="954" width="1" height="3" fill="#000" />
<rect x="37" y="954" width="1" height="3" fill="#000" />
<text x="29" y="972" font-size="14" fill="#000" textLength="15" lengthAdjust="spacingAndGlyphs" >06</text>
<rect x="62" y="954" width="1" height="3" fill="#000" />
<text x="54" y="972" font-size="14" fill="#000" textLength="15" lengthAdjust="spacingAndGlyphs" >13</text>
<rect x="87" y="954" width="1" height="3" fill="#000" />
<text x="79" y="972" font-size="14" fill="#000" textLength="15" lengthAdjust="spacingAndGlyphs" >20</text>
<rect x="107" y="954" width="1" height="3" fill="#000" />
<text x="99" y="972" font-size="14" fill="#000" textLength="15" lengthAdjust="spacingAndGlyphs" >27</text>
<rect x="127" y="954" width="1" height="3" fill="#000" />
<rect x="147" y="954" width="1" height="3" fill="#000" />
<text x="139" y="972" font-size="14" fill="#000" textLength="15" lengthAdjust="spacingAndGlyphs" >11</text>
<rect x="167" y="954" width="1" height="3" fill="#000" />
<text x="159" y="972" font-size="14" fill="#000" textLength="15" lengthAdjust="spacingAndGlyphs" >17</text>
<rect x="192" y="954" width="1" height="3" fill="#000" />
<text x="184" y="972" font-size="14" fill="#000" textLength="15" lengthAdjust="spacingAndGlyphs" >24</text>
<rect x="217" y="954" width="1" height="3" fill="#000" />
<rect x="242" y="954" width="1" height="3" fill="#000" />
<text x="234" y="972" font-size="14" fill="#000" textLength="15" lengthAdjust="spacingAndGlyphs" >07</text>
<rect x="262" y="954" width="1" height="3" fill="#000" />
<text x="254" y="972" font-size="14" fill="#000" textLength="15" lengthAdjust="spacingAndGlyphs" >14</text>
<rect x="287" y="954" width="1" height="3" fill="#000" />
<text x="279" y="972" font-size="14" fill="#000" textLength="15" lengthAdjust="spacingAndGlyphs" >21</text>
<rect x="312" y="954" width="1" height="3" fill="#000" />
<rect x="337" y="954" width="1" height="3" fill="#000" />
<text x="329" y="972" font-size="14" fill="#000" textLength="15" lengthAdjust="spacingAndGlyphs" >07</text>
<rect x="362" y="954" width="1" height="3" fill="#000" />
<text x="354" y="972" font-size="14" fill="#000" textLength="15" lengthAdjust="spacingAndGlyphs" >14</text>
<rect x="387" y="954" width="1" height="3" fill="#000" />
<text x="379" y="972" font-size="14" fill="#000" textLength="15" lengthAdjust="spacingAndGlyphs" >22</text>
<rect x="407" y="954" width="1" height="3" fill="#000" />
<text x="399" y="972" font-size="14" fill="#000" textLength="15" lengthAdjust="spacingAndGlyphs" >28</text>
<rect x="432" y="954" width="1" height="3" fill="#000" />
<rect x="457" y="954" width="1" height="3" fill="#000" />
<text x="449" y="972" font-size="14" fill="#000" textLength="15" lengthAdjust="spacingAndGlyphs" >11</text>
<rect x="482" y="954" width="1" height="3" fill="#000" />
<text x="474" y="972" font-size="14" fill="#000" textLength="15" lengthAdjust="spacingAndGlyphs" >18</text>
<rect x="507" y="954" width="1" height="3" fill="#000" />
<text x="499" y="972" font-size="14" fill="#000" textLength="15" lengthAdjust="spacingAndGlyphs" >25</text>
<rect x="537" y="954" width="1" height="3" fill="#000" />
<rect x="562" y="954" width="1" height="3" fill="#000" />
<text x="554" y="972" font-size="14" fill="#000" textLength="15" lengthAdjust="spacingAndGlyphs" >16</text>
<rect x="587" y="954" width="1" height="3" fill="#000" />
<text x="579" y="972" font-size="14" fill="#000" textLength="15" lengthAdjust="spacingAndGlyphs" >23</text>
<rect x="612" y="954" width="1" height="3" fill="#000" />
<rect x="637" y="954" width="1" height="3" fill="#000" />
<text x="629" y="972" font-size="14" fill="#000" textLength="15" lengthAdjust="spacingAndGlyphs" >06</text>
<rect x="662" y="954" width="1" height="3" fill="#000" />
<text x="654" y="972" font-size="14" fill="#000" textLength="15" lengthAdjust="spacingAndGlyphs" >13</text>
<rect x="687" y="954" width="1" height="3" fill="#000" />
<text x="679" y="972" font-size="14" fill="#000" textLength="15" lengthAdjust="spacingAndGlyphs" >20</text>
<rect x="712" y="954" width="1" height="3" fill="#000" />
<text x="704" y="972" font-size="14" fill="#000" textLength="15" lengthAdjust="spacingAndGlyphs" >27</text>
<rect x="737" y="954" width="1" height="3" fill="#000" />
<rect x="762" y="954" width="1" height="3" fill="#000" />
<text x="754" y="972" font-size="14" fill="#000" textLength="15" lengthAdjust="spacingAndGlyphs" >11</text>
<rect x="787" y="954" width="1" height="3" fill="#000" />
<text x="779" y="972" font-size="14" fill="#000" textLength="15" lengthAdjust="spacingAndGlyphs" >19</text>
<rect x="807" y="954" width="1" height="3" fill="#000" />
<text x="799" y="972" font-size="14" fill="#000" textLength="15" lengthAdjust="spacingAndGlyphs" >25</text>
<rect x="857" y="954" width="1" height="3" fill="#000" />
<text x="849" y="972" font-size="14" fill="#000" textLength="15" lengthAdjust="spacingAndGlyphs" >08</text>
<rect x="882" y="954" width="1" height="3" fill="#000" />
<text x="874" y="972" font-size="14" fill="#000" textLength="15" lengthAdjust="spacingAndGlyphs" >15</text>
<rect x="907" y="954" width="1" height="3" fill="#000" />
<text x="899" y="972" font-size="14" fill="#000" textLength="15" lengthAdjust="spacingAndGlyphs" >22</text>
<rect x="932" y="954" width="1" height="3" fill="#000" />
<text x="924" y="972" font-size="14" fill="#000" textLength="15" lengthAdjust="spacingAndGlyphs" >29</text>
<rect x="957" y="954" width="1" height="3" fill="#000" />
<rect x="982" y="954" width="1" height="3" fill="#000" />
<text x="974" y="972" font-size="14" fill="#000" textLength="15" lengthAdjust="spacingAndGlyphs" >12</text>
<rect x="1007" y="954" width="1" height="3" fill="#000" />
<text x="999" y="972" font-size="14" fill="#000" textLength="15" lengthAdjust="spacingAndGlyphs" >20</text>
<rect x="1022" y="954" width="1" height="3" fill="#000" />
<text x="1014" y="972" font-size="14" fill="#000" textLength="15" lengthAdjust="spacingAndGlyphs" >26</text>
<rect x="1072" y="954" width="1" height="3" fill="#000" />
<text x="1064" y="972" font-size="14" fill="#000" textLength="15" lengthAdjust="spacingAndGlyphs" >11</text>
<rect x="1092" y="954" width="1" height="3" fill="#000" />
<text x="1084" y="972" font-size="14" fill="#000" textLength="15" lengthAdjust="spacingAndGlyphs" >17</text>
<rect x="1117" y="954" width="1" height="3" fill="#000" />
<text x="1109" y="972" font-size="14" fill="#000" textLength="15" lengthAdjust="spacingAndGlyphs" >24</text>
<rect x="1142" y="954" width="1" height="3" fill="#000" />
<rect x="1162" y="954" width="1" height="3" fill="#000" />
<text x="1154" y="972" font-size="14" fill="#000" textLength="15" lengthAdjust="spacingAndGlyphs" >07</text>
<rect x="1187" y="954" width="1" height="3" fill="#000" />
<text x="1179" y="972" font-size="14" fill="#000" textLength="15" lengthAdjust="spacingAndGlyphs" >14</text>
<rect x="1212" y="954" width="1" height="3" fill="#000" />
<text x="1204" y="972" font-size="14" fill="#000" textLength="15" lengthAdjust="spacingAndGlyphs" >21</text>
<rect x="1232" y="954" width="1" height="3" fill="#000" />
<text x="1224" y="972" font-size="14" fill="#000" textLength="15" lengthAdjust="spacingAndGlyphs" >28</text>
<rect x="1257" y="954" width="1" height="3" fill="#000" />
<rect x="1282" y="954" width="1" height="3" fill="#000" />
<text x="1274" y="972" font-size="14" fill="#000" textLength="15" lengthAdjust="spacingAndGlyphs" >12</text>
<rect x="1307" y="954" width="1" height="3" fill="#000" />
<text x="1299" y="972" font-size="14" fill="#000" textLength="15" lengthAdjust="spacingAndGlyphs" >19</text>
<rect x="1327" y="954" width="1" height="3" fill="#000" />
<text x="1319" y="972" font-size="14" fill="#000" textLength="15" lengthAdjust="spacingAndGlyphs" >26</text>
<rect x="1367" y="954" width="1" height="3" fill="#000" />
<text x="1359" y="972" font-size="14" fill="#000" textLength="15" lengthAdjust="spacingAndGlyphs" >10</text>
<rect x="1387" y="954" width="1" height="3" fill="#000" />
<text x="1379" y="972" font-size="14" fill="#000" textLength="15" lengthAdjust="spacingAndGlyphs" >16</text>
<rect x="1412" y="954" width="1" height="3" fill="#000" />
<text x="1404" y="972" font-size="14" fill="#000" textLength="15" lengthAdjust="spacingAndGlyphs" >23</text>
<rect x="1437" y="954" width="1" height="3" fill="#000" />
<rect x="1462" y="954" width="1" height="3" fill="#000" />
<text x="1454" y="972" font-size="14" fill="#000" textLength="15" lengthAdjust="spacingAndGlyphs" >06</text>
<rect x="1487" y="954" width="1" height="3" fill="#000" />
<rect x="22" y="954" width="1" height="5" fill="#000" />
<text x="22.5" y="972" font-size="14" font-weight="bold" text-anchor="middle" fill="#000">10</text>
<rect x="127" y="954" width="1" height="5" fill="#000" />
<text x="127.5" y="972" font-size="14" font-weight="bold" text-anchor="middle" fill="#000">11</text>
<rect x="222" y="954" width="1" height="5" fill="#000" />
<text x="222.5" y="972" font-size="14" font-weight="bold" text-anchor="middle" fill="#000">F</text>
<rect x="317" y="954" width="1" height="5" fill="#000" />
<text x="317.5" y="972" font-size="14" font-weight="bold" text-anchor="middle" fill="#000">M</text>
<rect x="427" y="954" width="1" height="5" fill="#000" />
<text x="427.5" y="972" font-size="14" font-weight="bold" text-anchor="middle" fill="#000">A</text>
<rect x="527" y="954" width="1" height="5" fill="#000" />
<text x="527.5" y="972" font-size="14" font-weight="bold" text-anchor="middle" fill="#000">M</text>
<rect x="622" y="954" width="1" height="5" fill="#000" />
<text x="622.5" y="972" font-size="14" font-weight="bold" text-anchor="middle" fill="#000">J</text>
<rect x="732" y="954" width="1" height="5" fill="#000" />
<text x="732.5" y="972" font-size="14" font-weight="bold" text-anchor="middle" fill="#000">J</text>
<rect x="832" y="954" width="1" height="5" fill="#000" />
<text x="832.5" y="972" font-size="14" font-weight="bold" text-anchor="middle" fill="#000">A</text>
<rect x="947" y="954" width="1" height="5" fill="#000" />
<text x="947.5" y="972" font-size="14" font-weight="bold" text-anchor="middle" fill="#000">S</text>
<rect x="1047" y="954" width="1" height="5" fill="#000" />
<text x="1047.5" y="972" font-size="14" font-weight="bold" text-anchor="middle" fill="#000">O</text>
<rect x="1147" y="954" width="1" height="5" fill="#000" />
<text x="1147.5" y="972" font-size="14" font-weight="bold" text-anchor="middle" fill="#000">N</text>
<rect x="1247" y="954" width="1" height="5" fill="#000" />
<text x="1247.5" y="972" font-size="14" font-weight="bold" text-anchor="middle" fill="#000">D</text>
<rect x="1352" y="954" width="1" height="5" fill="#000" />
<text x="1352.5" y="972" font-size="14" font-weight="bold" text-anchor="middle" fill="#000">12</text>
<rect x="1447" y="954" width="1" height="5" fill="#000" />
<text x="1447.5" y="972" font-size="14" font-weight="bold" text-anchor="middle" fill="#000">F</text>
<polyline fill="none" stroke="#f05000" stroke-width="1" points="107.5,242.5 112.5,242.0 117.5,244.1 122.5,247.2 127.5,245.9 132.5,245.2 137.5,241.3 142.5,238.6 147.5,236.2 152.5,234.0 157.5,231.2 162.5,229.9 167.5,228.7 172.5,227.5 177.5,226.0 182.5,225.9 187.5,226.4 192.5,226.3 197.5,226.0 202.5,226.3 207.5,225.9 212.5,226.2 217.5,225.3 222.5,225.7 227.5,225.4 232.5,225.4 237.5,225.1 242.5,224.2 247.5,222.2 252.5,220.8 257.5,220.1 262.5,216.4 267.5,212.8 272.5,208.4 277.5,204.1 282.5,199.9 287.5,196.9 292.5,196.5 297.5,196.4 302.5,196.6 307.5,196.6 312.5,196.9 317.5,198.0 322.5,200.8 327.5,201.2 332.5,201.8 337.5,201.5 342.5,201.3 347.5,201.4 352.5,200.6 357.5,197.7 362.5,182.1 367.5,148.5 372.5,142.7 377.5,139.2 382.5,141.8 387.5,148.7 392.5,153.4 397.5,157.9 402.5,162.2 407.5,167.9 412.5,175.8 417.5,186.8 422.5,193.9 427.5,203.5 432.5,216.3 437.5,226.9 442.5,239.4 447.5,255.6 452.5,268.6 457.5,279.1 462.5,279.5 467.5,289.3 472.5,291.0 477.5,298.7 482.5,303.2 487.5,302.6 492.5,303.0 497.5,303.2 502.5,302.7 507.5,302.8 512.5,303.6 517.5,303.7 522.5,301.6 527.5,294.7 532.5,292.7 537.5,291.4 542.5,290.0 547.5,288.0 552.5,288.4 557.5,288.6 562.5,288.5 567.5,288.4 572.5,288.4 577.5,288.4 582.5,288.6 587.5,289.0 592.5,288.4 597.5,287.5 602.5,287.7 607.5,287.8 612.5,287.6 617.5,287.6 622.5,289.2 627.5,295.5 632.5,298.6 637.5,300.0 642.5,303.1 647.5,308.6 652.5,310.9 657.5,312.3 662.5,312.4 667.5,312.6 672.5,314.0 677.5,314.7 682.5,315.0 687.5,314.5 692.5,314.6 697.5,313.0 702.5,312.6 707.5,310.6 712.5,310.1 717.5,311.2 722.5,309.3 727.5,305.0 732.5,299.9 737.5,293.6 742.5,287.5 747.5,280.2 752.5,274.0 757.5,267.8 762.5,263.5 767.5,261.9 772.5,259.8 777.5,259.6 782.5,260.5 787.5,263.4 792.5,264.8 797.5,264.6 802.5,263.4 807.5,263.2 812.5,265.0 817.5,267.9 822.5,268.9 827.5,269.2 832.5,269.7 837.5,268.9 842.5,265.1 847.5,264.1 852.5,256.7 857.5,249.5 862.5,243.0 867.5,239.8 872.5,238.0 877.5,237.2 882.5,239.2 887.5,241.1 892.5,244.8 897.5,249.0 902.5,255.2 907.5,260.7 912.5,270.1 917.5,279.8 922.5,289.0 927.5,298.5 932.5,313.8 937.5,328.3 942.5,339.5 947.5,353.6 952.5,359.2 957.5,361.2 962.5,360.2 967.5,362.0 972.5,363.2 977.5,364.2 982.5,366.0 987.5,369.7 992.5,372.1 997.5,374.3 1002.5,373.3 1007.5,373.4 1012.5,373.4 1017.5,372.9 1022.5,370.6 1027.5,371.2 1032.5,372.4 1037.5,375.0 1042.5,378.2 1047.5,385.2 1052.5,389.2 1057.5,389.6 1062.5,389.6 1067.5,391.2 1072.5,391.2 1077.5,391.1 1082.5,388.7 1087.5,387.7 1092.5,384.8 1097.5,384.3 1102.5,385.6 1107.5,385.9 1112.5,386.6 1117.5,384.2 1122.5,385.1 1127.5,384.5 1132.5,381.3 1137.5,376.4 1142.5,373.1 1147.5,372.6 1152.5,374.1 1157.5,377.2 1162.5,378.7 1167.5,379.1 1172.5,379.2 1177.5,377.1 1182.5,376.1 1187.5,376.0 1192.5,376.5 1197.5,375.5 1202.5,375.4 1207.5,374.0 1212.5,372.6 1217.5,373.1 1222.5,371.4 1227.5,370.7 1232.5,374.6 1237.5,381.9 1242.5,389.2 1247.5,392.8 1252.5,392.7 1257.5,394.9 1262.5,397.2 1267.5,396.0 1272.5,397.6 1277.5,397.3 1282.5,395.7 1287.5,396.2 1292.5,396.2 1297.5,396.3 1302.5,396.5 1307.5,396.2 1312.5,396.2 1317.5,396.2 1322.5,398.1 1327.5,400.3 1332.5,401.2 1337.5,401.1 1342.5,401.0 1347.5,402.0 1352.5,403.0 1357.5,405.5 1362.5,406.5 1367.5,410.7 1372.5,414.0 1377.5,415.0 1382.5,418.3 1387.5,419.9 1392.5,420.7 1397.5,419.0 1402.5,415.2 1407.5,409.5 1412.5,404.5 1417.5,399.9 1422.5,393.8 1427.5,389.5 1432.5,385.9 1437.5,383.9 1442.5,381.8 1447.5,379.9 1452.5,376.9 1457.5,375.1 1462.5,373.2 1467.5,371.8 1472.5,368.7 1477.5,368.0 1482.5,367.4 1487.5,369.2 1492.5,369.8 1497.5,364.7 1502.5,360.4 1507.5,352.1"/>
<polyline fill="none" stroke="#0a5ee0" stroke-width="1" points="107.5,285.7 112.5,284.6 117.5,278.7 122.5,273.3 127.5,272.5 132.5,271.4 137.5,271.8 142.5,270.6 147.5,270.4 152.5,270.5 157.5,269.9 162.5,269.3 167.5,268.8 172.5,268.1 177.5,267.4 182.5,266.3 187.5,265.4 192.5,265.7 197.5,264.8 202.5,263.5 207.5,262.7 212.5,261.9 217.5,263.7 222.5,263.0 227.5,262.6 232.5,262.0 237.5,262.1 242.5,262.5 247.5,263.3 252.5,263.7 257.5,264.0 262.5,265.5 267.5,266.8 272.5,268.4 277.5,270.0 282.5,270.4 287.5,267.9 292.5,265.4 297.5,264.6 302.5,263.8 307.5,263.5 312.5,260.6 317.5,254.7 322.5,249.8 327.5,248.3 332.5,245.3 337.5,246.1 342.5,247.0 347.5,247.4 352.5,249.9 357.5,256.2 362.5,282.3 367.5,335.9 372.5,357.7 377.5,378.6 382.5,391.3 387.5,396.0 392.5,402.7 397.5,408.8 402.5,413.1 407.5,417.0 412.5,420.0 417.5,418.8 422.5,418.6 427.5,417.2 432.5,413.5 437.5,411.2 442.5,407.3 447.5,400.4 452.5,393.6 457.5,388.2 462.5,388.3 467.5,368.8 472.5,361.8 477.5,348.3 482.5,340.6 487.5,343.0 492.5,341.1 497.5,338.6 502.5,337.7 507.5,336.0 512.5,334.4 517.5,334.4 522.5,335.6 527.5,339.7 532.5,340.4 537.5,340.0 542.5,339.4 547.5,338.8 552.5,338.9 557.5,339.2 562.5,339.5 567.5,340.3 572.5,340.3 577.5,340.1 582.5,339.4 587.5,338.7 592.5,340.4 597.5,343.6 602.5,344.5 607.5,345.7 612.5,346.3 617.5,346.3 622.5,345.9 627.5,344.0 632.5,344.4 637.5,346.9 642.5,347.3 647.5,345.7 652.5,345.7 657.5,345.7 662.5,346.3 667.5,346.3 672.5,345.8 677.5,347.1 682.5,349.2 687.5,350.7 692.5,350.9 697.5,350.6 702.5,350.7 707.5,351.3 712.5,351.1 717.5,350.6 722.5,351.8 727.5,353.6 732.5,355.2 737.5,356.1 742.5,357.1 747.5,358.5 752.5,359.0 757.5,359.4 762.5,357.9 767.5,356.1 772.5,354.5 777.5,349.7 782.5,342.9 787.5,334.9 792.5,328.4 797.5,325.2 802.5,321.4 807.5,318.1 812.5,311.5 817.5,304.8 822.5,302.9 827.5,302.4 832.5,300.9 837.5,302.8 842.5,309.9 847.5,314.9 852.5,329.7 857.5,346.6 862.5,363.8 867.5,375.1 872.5,386.1 877.5,396.0 882.5,402.3 887.5,407.8 892.5,413.0 897.5,418.6 902.5,425.6 907.5,433.5 912.5,436.8 917.5,440.2 922.5,441.4 927.5,441.5 932.5,436.6 937.5,430.4 942.5,425.5 947.5,416.8 952.5,414.4 957.5,415.2 962.5,419.4 967.5,420.2 972.5,420.8 977.5,421.9 982.5,425.3 987.5,426.1 992.5,428.7 997.5,429.1 1002.5,428.8 1007.5,427.8 1012.5,427.7 1017.5,429.0 1022.5,435.1 1027.5,436.3 1032.5,437.2 1037.5,436.9 1042.5,436.2 1047.5,434.2 1052.5,434.8 1057.5,438.2 1062.5,438.8 1067.5,438.7 1072.5,438.7 1077.5,438.7 1082.5,438.5 1087.5,438.3 1092.5,437.8 1097.5,437.7 1102.5,437.2 1107.5,437.3 1112.5,437.3 1117.5,436.9 1122.5,432.3 1127.5,431.6 1132.5,432.0 1137.5,433.8 1142.5,434.4 1147.5,432.2 1152.5,429.0 1157.5,421.9 1162.5,418.4 1167.5,417.6 1172.5,417.8 1177.5,422.2 1182.5,426.0 1187.5,427.4 1192.5,430.2 1197.5,433.8 1202.5,436.6 1207.5,440.7 1212.5,445.2 1217.5,449.7 1222.5,457.1 1227.5,463.2 1232.5,465.2 1237.5,463.1 1242.5,460.9 1247.5,459.4 1252.5,459.4 1257.5,458.3 1262.5,457.5 1267.5,458.0 1272.5,457.2 1277.5,457.1 1282.5,457.3 1287.5,457.3 1292.5,457.3 1297.5,457.9 1302.5,458.5 1307.5,459.7 1312.5,459.7 1317.5,458.3 1322.5,454.1 1327.5,449.0 1332.5,446.9 1337.5,447.6 1342.5,448.1 1347.5,448.5 1352.5,448.2 1357.5,447.6 1362.5,448.5 1367.5,447.2 1372.5,445.9 1377.5,446.4 1382.5,444.5 1387.5,444.6 1392.5,444.3 1397.5,444.4 1402.5,445.9 1407.5,447.1 1412.5,448.0 1417.5,449.6 1422.5,451.2 1427.5,452.1 1432.5,451.8 1437.5,450.4 1442.5,448.5 1447.5,447.1 1452.5,447.2 1457.5,445.7 1462.5,442.6 1467.5,439.3 1472.5,437.1 1477.5,432.0 1482.5,428.6 1487.5,420.9 1492.5,414.8 1497.5,413.3 1502.5,412.1 1507.5,414.6"/>
<polyline fill="none" stroke="#0a8a3a" stroke-width="1" points="107.5,264.1 112.5,263.3 117.5,261.4 122.5,260.3 127.5,259.2 132.5,258.3 137.5,256.6 142.5,254.6 147.5,253.3 152.5,252.3 157.5,250.6 162.5,249.6 167.5,248.7 172.5,247.8 177.5,246.7 182.5,246.1 187.5,245.9 192.5,246.0 197.5,245.4 202.5,244.9 207.5,244.3 212.5,244.1 217.5,244.5 222.5,244.4 227.5,244.0 232.5,243.7 237.5,243.6 242.5,243.3 247.5,242.8 252.5,242.3 257.5,242.0 262.5,241.0 267.5,239.8 272.5,238.4 277.5,237.1 282.5,235.1 287.5,232.4 292.5,231.0 297.5,230.5 302.5,230.2 307.5,230.1 312.5,228.8 317.5,226.4 322.5,225.3 327.5,224.8 332.5,223.5 337.5,223.8 342.5,224.1 347.5,224.4 352.5,225.2 357.5,226.9 362.5,232.2 367.5,242.2 372.5,250.2 377.5,258.9 382.5,266.5 387.5,272.3 392.5,278.0 397.5,283.4 402.5,287.6 407.5,292.4 412.5,297.9 417.5,302.8 422.5,306.2 427.5,310.3 432.5,314.9 437.5,319.1 442.5,323.3 447.5,328.0 452.5,331.1 457.5,333.6 462.5,333.9 467.5,329.0 472.5,326.4 477.5,323.5 482.5,321.9 487.5,322.8 492.5,322.0 497.5,320.9 502.5,320.2 507.5,319.4 512.5,319.0 517.5,319.1 522.5,318.6 527.5,317.2 532.5,316.5 537.5,315.7 542.5,314.7 547.5,313.4 552.5,313.7 557.5,313.9 562.5,314.0 567.5,314.4 572.5,314.4 577.5,314.2 582.5,314.0 587.5,313.9 592.5,314.4 597.5,315.6 602.5,316.1 607.5,316.8 612.5,317.0 617.5,317.0 622.5,317.6 627.5,319.7 632.5,321.5 637.5,323.4 642.5,325.2 647.5,327.2 652.5,328.3 657.5,329.0 662.5,329.4 667.5,329.5 672.5,329.9 677.5,330.9 682.5,332.1 687.5,332.6 692.5,332.8 697.5,331.8 702.5,331.6 707.5,330.9 712.5,330.6 717.5,330.9 722.5,330.6 727.5,329.3 732.5,327.5 737.5,324.9 742.5,322.3 747.5,319.4 752.5,316.5 757.5,313.6 762.5,310.7 767.5,309.0 772.5,307.1 777.5,304.7 782.5,301.7 787.5,299.1 792.5,296.6 797.5,294.9 802.5,292.4 807.5,290.7 812.5,288.3 817.5,286.3 822.5,285.9 827.5,285.8 832.5,285.3 837.5,285.9 842.5,287.5 847.5,289.5 852.5,293.2 857.5,298.0 862.5,303.4 867.5,307.4 872.5,312.1 877.5,316.6 882.5,320.8 887.5,324.5 892.5,328.9 897.5,333.8 902.5,340.4 907.5,347.1 912.5,353.5 917.5,360.0 922.5,365.2 927.5,370.0 932.5,375.2 937.5,379.3 942.5,382.5 947.5,385.2 952.5,386.8 957.5,388.2 962.5,389.8 967.5,391.1 972.5,392.0 977.5,393.0 982.5,395.6 987.5,397.9 992.5,400.4 997.5,401.7 1002.5,401.1 1007.5,400.6 1012.5,400.5 1017.5,400.9 1022.5,402.8 1027.5,403.8 1032.5,404.8 1037.5,405.9 1042.5,407.2 1047.5,409.7 1052.5,412.0 1057.5,413.9 1062.5,414.2 1067.5,415.0 1072.5,415.0 1077.5,414.9 1082.5,413.6 1087.5,413.0 1092.5,411.3 1097.5,411.0 1102.5,411.4 1107.5,411.6 1112.5,411.9 1117.5,410.6 1122.5,408.7 1127.5,408.0 1132.5,406.6 1137.5,405.1 1142.5,403.8 1147.5,402.4 1152.5,401.5 1157.5,399.6 1162.5,398.6 1167.5,398.3 1172.5,398.5 1177.5,399.6 1182.5,401.1 1187.5,401.7 1192.5,403.3 1197.5,404.6 1202.5,406.0 1207.5,407.4 1212.5,408.9 1217.5,411.4 1222.5,414.2 1227.5,416.9 1232.5,419.9 1237.5,422.5 1242.5,425.1 1247.5,426.1 1252.5,426.1 1257.5,426.6 1262.5,427.4 1267.5,427.0 1272.5,427.4 1277.5,427.2 1282.5,426.5 1287.5,426.7 1292.5,426.7 1297.5,427.1 1302.5,427.5 1307.5,427.9 1312.5,427.9 1317.5,427.2 1322.5,426.1 1327.5,424.6 1332.5,424.0 1337.5,424.4 1342.5,424.6 1347.5,425.2 1352.5,425.6 1357.5,426.5 1362.5,427.5 1367.5,428.9 1372.5,430.0 1377.5,430.7 1382.5,431.4 1387.5,432.2 1392.5,432.5 1397.5,431.7 1402.5,430.6 1407.5,428.3 1412.5,426.2 1417.5,424.8 1422.5,422.5 1427.5,420.8 1432.5,418.9 1437.5,417.1 1442.5,415.2 1447.5,413.5 1452.5,412.1 1457.5,410.4 1462.5,407.9 1467.5,405.6 1472.5,402.9 1477.5,400.0 1482.5,398.0 1487.5,395.1 1492.5,392.3 1497.5,389.0 1502.5,386.3 1507.5,383.4"/>
<polyline fill="none" stroke="#ff9a00" stroke-width="1" points="57.5,272.1 62.5,270.5 67.5,266.9 72.5,263.9 77.5,262.6 82.5,261.4 87.5,260.8 92.5,258.5 97.5,257.5 102.5,257.5 107.5,256.1 112.5,256.1 117.5,255.9 122.5,256.6 127.5,255.8 132.5,255.2 137.5,252.3 142.5,250.7 147.5,249.1 152.5,247.0 157.5,245.0 162.5,243.1 167.5,241.6 172.5,239.0 177.5,237.6 182.5,237.0 187.5,239.5 192.5,241.3 197.5,241.7 202.5,242.8 207.5,243.6 212.5,245.0 217.5,247.4 222.5,249.7 227.5,250.4 232.5,250.4 237.5,247.7 242.5,245.4 247.5,243.8 252.5,241.7 257.5,240.5 262.5,236.9 267.5,232.2 272.5,227.1 277.5,223.7 282.5,219.9 287.5,217.1 292.5,216.5 297.5,217.2 302.5,218.7 307.5,219.6 312.5,220.6 317.5,220.5 322.5,223.5 327.5,225.8 332.5,227.2 337.5,230.5 342.5,231.8 347.5,231.6 352.5,231.8 357.5,234.3 362.5,243.8 367.5,263.9 372.5,276.9 377.5,292.0 382.5,305.9 387.5,314.2 392.5,324.3 397.5,335.1 402.5,343.5 407.5,350.6 412.5,352.0 417.5,341.7 422.5,335.6 427.5,328.7 432.5,323.9 437.5,323.9 442.5,322.4 447.5,320.9 452.5,318.7 457.5,316.7 462.5,315.8 467.5,316.4 472.5,317.2 477.5,318.3 482.5,319.9 487.5,321.7 492.5,321.7 497.5,320.9 502.5,321.7 507.5,322.1 512.5,322.2 517.5,321.7 522.5,320.0 527.5,316.1 532.5,313.2 537.5,309.7 542.5,307.7 547.5,305.9 552.5,305.6 557.5,305.7 562.5,305.8 567.5,307.0 572.5,308.7 577.5,312.4 582.5,314.8 587.5,318.0 592.5,321.1 597.5,325.2 602.5,326.6 607.5,327.8 612.5,328.1 617.5,326.9 622.5,326.4 627.5,327.1 632.5,328.2 637.5,328.9 642.5,329.3 647.5,329.1 652.5,330.0 657.5,330.2 662.5,330.6 667.5,332.0 672.5,333.4 677.5,334.7 682.5,336.0 687.5,336.3 692.5,336.2 697.5,334.5 702.5,333.3 707.5,331.7 712.5,330.6 717.5,329.8 722.5,327.7 727.5,323.9 732.5,319.1 737.5,313.4 742.5,308.4 747.5,304.2 752.5,299.7 757.5,295.5 762.5,290.8 767.5,288.2 772.5,286.6 777.5,285.4 782.5,284.3 787.5,284.9 792.5,284.8 797.5,285.6 802.5,285.1 807.5,285.8 812.5,285.7 817.5,284.5 822.5,285.2 827.5,286.2 832.5,286.3 837.5,286.8 842.5,290.2 847.5,293.4 852.5,301.3 857.5,310.3 862.5,321.1 867.5,330.4 872.5,338.9 877.5,347.0 882.5,355.2 887.5,362.1 892.5,367.6 897.5,374.2 902.5,379.5 907.5,383.9 912.5,385.8 917.5,389.6 922.5,391.5 927.5,393.0 932.5,395.2 937.5,396.6 942.5,397.4 947.5,396.2 952.5,394.1 957.5,392.5 962.5,393.8 967.5,392.6 972.5,392.5 977.5,393.1 982.5,396.1 987.5,399.2 992.5,403.4 997.5,407.2 1002.5,408.0 1007.5,408.7 1012.5,407.3 1017.5,409.3 1022.5,413.2 1027.5,414.4 1032.5,413.5 1037.5,412.7 1042.5,411.0 1047.5,412.2 1052.5,416.0 1057.5,419.1 1062.5,421.1 1067.5,420.6 1072.5,416.7 1077.5,415.4 1082.5,413.7 1087.5,413.3 1092.5,411.6 1097.5,409.8 1102.5,406.8 1107.5,404.1 1112.5,402.8 1117.5,400.5 1122.5,400.7 1127.5,400.7 1132.5,399.6 1137.5,396.9 1142.5,395.9 1147.5,395.0 1152.5,396.3 1157.5,395.0 1162.5,394.3 1167.5,396.2 1172.5,396.3 1177.5,398.6 1182.5,402.5 1187.5,406.5 1192.5,410.8 1197.5,414.3 1202.5,415.7 1207.5,419.7 1212.5,423.5 1217.5,426.6 1222.5,432.2 1227.5,435.3 1232.5,437.3 1237.5,438.5 1242.5,439.3 1247.5,437.9 1252.5,436.4 1257.5,433.5 1262.5,431.2 1267.5,427.4 1272.5,422.6 1277.5,419.1 1282.5,415.7 1287.5,415.0 1292.5,414.2 1297.5,416.3 1302.5,418.6 1307.5,422.4 1312.5,424.7 1317.5,427.1 1322.5,429.6 1327.5,430.2 1332.5,432.4 1337.5,433.7 1342.5,434.9 1347.5,434.2 1352.5,432.6 1357.5,430.7 1362.5,430.3 1367.5,430.8 1372.5,430.3 1377.5,431.2 1382.5,430.4 1387.5,430.8 1392.5,430.1 1397.5,429.2 1402.5,428.5 1407.5,425.9 1412.5,422.2 1417.5,418.7 1422.5,414.7 1427.5,410.4 1432.5,407.3 1437.5,403.5 1442.5,400.2 1447.5,397.8 1452.5,395.6 1457.5,394.9 1462.5,393.6 1467.5,392.4 1472.5,391.1 1477.5,389.6 1482.5,388.7 1487.5,386.6 1492.5,384.4 1497.5,380.2 1502.5,376.9 1507.5,371.8"/>
<polyline fill="none" stroke="#00f000" stroke-width="1" points="32.5,277.9 37.5,277.3 42.5,273.7 47.5,269.1 52.5,266.9 57.5,266.3 62.5,263.7 67.5,260.1 72.5,258.7 77.5,258.3 82.5,256.5 87.5,257.9 92.5,256.9 97.5,256.3 102.5,256.7 107.5,255.7 112.5,254.3 117.5,254.9 122.5,256.9 127.5,254.9 132.5,254.7 137.5,250.3 142.5,246.5 147.5,241.3 152.5,239.1 157.5,235.3 162.5,235.9 167.5,236.7 172.5,236.7 177.5,236.1 182.5,238.7 187.5,243.1 192.5,245.9 197.5,246.7 202.5,249.5 207.5,248.5 212.5,246.9 217.5,248.9 222.5,252.7 227.5,251.3 232.5,252.3 237.5,248.5 242.5,241.9 247.5,234.9 252.5,232.1 257.5,228.7 262.5,225.3 267.5,222.5 272.5,219.3 277.5,215.3 282.5,211.1 287.5,208.9 292.5,210.5 297.5,215.1 302.5,222.1 307.5,228.1 312.5,232.3 317.5,230.5 322.5,231.9 327.5,229.5 332.5,226.3 337.5,228.7 342.5,233.1 347.5,231.3 352.5,234.1 357.5,242.3 362.5,258.9 367.5,294.7 372.5,322.5 377.5,349.9 382.5,369.5 387.5,369.5 392.5,353.9 397.5,347.7 402.5,337.1 407.5,331.7 412.5,334.5 417.5,329.5 422.5,323.5 427.5,320.3 432.5,316.1 437.5,313.3 442.5,315.3 447.5,318.3 452.5,317.1 457.5,317.3 462.5,318.3 467.5,317.5 472.5,316.1 477.5,319.5 482.5,322.5 487.5,325.1 492.5,325.9 497.5,325.7 502.5,323.9 507.5,321.7 512.5,319.3 517.5,317.5 522.5,314.3 527.5,308.3 532.5,304.7 537.5,300.1 542.5,297.9 547.5,297.5 552.5,302.9 557.5,306.7 562.5,311.5 567.5,316.1 572.5,319.9 577.5,321.9 582.5,322.9 587.5,324.5 592.5,326.1 597.5,330.5 602.5,331.3 607.5,332.7 612.5,331.7 617.5,327.7 622.5,322.3 627.5,322.9 632.5,323.7 637.5,326.1 642.5,330.9 647.5,335.9 652.5,337.1 657.5,336.7 662.5,335.1 667.5,333.1 672.5,330.9 677.5,332.3 682.5,335.3 687.5,337.5 692.5,339.3 697.5,338.1 702.5,334.3 707.5,328.1 712.5,323.7 717.5,320.3 722.5,317.3 727.5,313.5 732.5,310.1 737.5,303.1 742.5,296.5 747.5,291.1 752.5,285.9 757.5,280.9 762.5,278.5 767.5,279.9 772.5,282.1 777.5,284.9 782.5,287.7 787.5,291.3 792.5,289.7 797.5,289.1 802.5,285.3 807.5,283.9 812.5,280.1 817.5,279.3 822.5,281.3 827.5,287.1 832.5,288.7 837.5,293.5 842.5,301.1 847.5,305.5 852.5,315.5 857.5,331.9 862.5,348.7 867.5,359.7 872.5,372.3 877.5,378.5 882.5,378.5 887.5,375.5 892.5,375.5 897.5,376.1 902.5,380.5 907.5,389.3 912.5,396.1 917.5,403.7 922.5,406.9 927.5,405.5 932.5,401.1 937.5,397.1 942.5,391.1 947.5,385.5 952.5,382.7 957.5,383.9 962.5,390.5 967.5,394.1 972.5,399.5 977.5,403.5 982.5,408.3 987.5,407.9 992.5,412.7 997.5,414.9 1002.5,412.5 1007.5,409.1 1012.5,406.7 1017.5,405.9 1022.5,411.5 1027.5,416.3 1032.5,417.9 1037.5,418.7 1042.5,416.1 1047.5,412.9 1052.5,415.7 1057.5,420.3 1062.5,423.5 1067.5,425.1 1072.5,420.5 1077.5,415.1 1082.5,407.1 1087.5,403.1 1092.5,398.1 1097.5,399.1 1102.5,398.5 1107.5,401.1 1112.5,402.5 1117.5,402.9 1122.5,402.3 1127.5,402.9 1132.5,398.1 1137.5,391.3 1142.5,388.9 1147.5,387.7 1152.5,389.7 1157.5,391.9 1162.5,397.3 1167.5,403.5 1172.5,404.9 1177.5,407.5 1182.5,413.1 1187.5,415.7 1192.5,418.1 1197.5,423.7 1202.5,423.9 1207.5,426.3 1212.5,431.3 1217.5,435.1 1222.5,440.7 1227.5,446.7 1232.5,448.3 1237.5,445.7 1242.5,443.5 1247.5,435.1 1252.5,426.1 1257.5,418.7 1262.5,416.7 1267.5,411.3 1272.5,410.1 1277.5,412.1 1282.5,412.7 1287.5,413.3 1292.5,417.1 1297.5,422.5 1302.5,425.1 1307.5,432.1 1312.5,436.1 1317.5,437.1 1322.5,436.7 1327.5,435.3 1332.5,432.7 1337.5,431.3 1342.5,432.7 1347.5,431.7 1352.5,429.9 1357.5,428.7 1362.5,429.3 1367.5,428.9 1372.5,428.9 1377.5,432.5 1382.5,432.1 1387.5,432.3 1392.5,431.3 1397.5,429.5 1402.5,424.5 1407.5,419.7 1412.5,412.1 1417.5,406.1 1422.5,399.9 1427.5,396.3 1432.5,394.9 1437.5,394.9 1442.5,394.3 1447.5,395.7 1452.5,394.9 1457.5,394.9 1462.5,392.3 1467.5,390.5 1472.5,386.5 1477.5,384.3 1482.5,382.5 1487.5,380.9 1492.5,378.3 1497.5,373.9 1502.5,369.5 1507.5,361.1"/>
<rect x="12" y="271" width="1" height="10" fill="#ff0000"/><rect x="11" y="273" width="3" height="7" fill="#ff0000"/>
<rect x="17" y="275" width="1" height="17" fill="#000090"/><rect x="16" y="278" width="3" height="14" fill="#000090"/>
<rect x="22" y="286" width="1" height="7" fill="#ff0000"/><rect x="21" y="286" width="3" height="5" fill="#ff0000"/>
<rect x="27" y="267" width="1" height="5" fill="#ff0000"/><rect x="26" y="269" width="3" height="3" fill="#ff0000"/>
<rect x="32" y="261" width="1" height="9" fill="#000090"/><rect x="31" y="263" width="3" height="6" fill="#000090"/>
<rect x="37" y="268" width="1" height="3" fill="#000090"/><rect x="36" y="268" width="3" height="3" fill="#000090"/>
<rect x="42" y="268" width="1" height="8" fill="#000090"/><rect x="41" y="270" width="3" height="4" fill="#000090"/>
<rect x="47" y="261" width="1" height="6" fill="#ff0000"/><rect x="46" y="263" width="3" height="4" fill="#ff0000"/>
<rect x="52" y="256" width="1" height="6" fill="#ff0000"/><rect x="51" y="258" width="3" height="3" fill="#ff0000"/>
<rect x="57" y="250" width="1" height="17" fill="#000090"/><rect x="56" y="250" width="3" height="16" fill="#000090"/>
<rect x="62" y="257" width="1" height="9" fill="#ff0000"/><rect x="61" y="257" width="3" height="9" fill="#ff0000"/>
<rect x="67" y="255" width="1" height="5" fill="#ff0000"/><rect x="66" y="255" width="3" height="5" fill="#ff0000"/>
<rect x="72" y="253" width="1" height="5" fill="#000090"/><rect x="71" y="253" width="3" height="4" fill="#000090"/>
<rect x="77" y="252" width="1" height="6" fill="#ff0000"/><rect x="76" y="256" width="3" height="2" fill="#ff0000"/>
<rect x="82" y="254" width="1" height="4" fill="#000090"/><rect x="81" y="255" width="3" height="2" fill="#000090"/>
<rect x="87" y="257" width="1" height="11" fill="#000090"/><rect x="86" y="258" width="3" height="7" fill="#000090"/>
<rect x="92" y="250" width="1" height="10" fill="#ff0000"/><rect x="91" y="250" width="3" height="10" fill="#ff0000"/>
<rect x="97" y="248" width="1" height="6" fill="#000090"/><rect x="96" y="252" width="3" height="2" fill="#000090"/>
<rect x="102" y="257" width="1" height="3" fill="#ff0000"/><rect x="101" y="258" width="3" height="2" fill="#ff0000"/>
<rect x="107" y="249" width="1" height="9" fill="#ff0000"/><rect x="106" y="251" width="3" height="7" fill="#ff0000"/>
<rect x="112" y="253" width="1" height="5" fill="#000090"/><rect x="111" y="254" width="3" height="4" fill="#000090"/>
<rect x="117" y="253" width="1" height="6" fill="#ff0000"/><rect x="116" y="253" width="3" height="6" fill="#ff0000"/>
<rect x="122" y="255" width="1" height="10" fill="#000090"/><rect x="121" y="256" width="3" height="8" fill="#000090"/>
<rect x="127" y="246" width="1" height="9" fill="#ff0000"/><rect x="126" y="248" width="3" height="5" fill="#ff0000"/>
<rect x="132" y="246" width="1" height="5" fill="#000090"/><rect x="131" y="248" width="3" height="3" fill="#000090"/>
<rect x="137" y="235" width="1" height="6" fill="#ff0000"/><rect x="136" y="235" width="3" height="6" fill="#ff0000"/>
<rect x="142" y="233" width="1" height="6" fill="#ff0000"/><rect x="141" y="234" width="3" height="5" fill="#ff0000"/>
<rect x="147" y="234" width="1" height="6" fill="#ff0000"/><rect x="146" y="237" width="3" height="3" fill="#ff0000"/>
<rect x="152" y="231" width="1" height="7" fill="#000090"/><rect x="151" y="232" width="3" height="6" fill="#000090"/>
<rect x="157" y="227" width="1" height="5" fill="#000090"/><rect x="156" y="229" width="3" height="3" fill="#000090"/>
<rect x="162" y="231" width="1" height="9" fill="#000090"/><rect x="161" y="238" width="3" height="1" fill="#000090"/>
<rect x="167" y="232" width="1" height="9" fill="#000090"/><rect x="166" y="232" width="3" height="7" fill="#000090"/>
<rect x="172" y="234" width="1" height="9" fill="#ff0000"/><rect x="171" y="237" width="3" height="6" fill="#ff0000"/>
<rect x="177" y="230" width="1" height="5" fill="#000090"/><rect x="176" y="231" width="3" height="4" fill="#000090"/>
<rect x="182" y="237" width="1" height="8" fill="#000090"/><rect x="181" y="237" width="3" height="8" fill="#000090"/>
<rect x="187" y="242" width="1" height="19" fill="#000090"/><rect x="186" y="242" width="3" height="19" fill="#000090"/>
<rect x="192" y="252" width="1" height="8" fill="#ff0000"/><rect x="191" y="252" width="3" height="4" fill="#ff0000"/>
<rect x="197" y="240" width="1" height="11" fill="#ff0000"/><rect x="196" y="241" width="3" height="10" fill="#ff0000"/>
<rect x="202" y="245" width="1" height="4" fill="#000090"/><rect x="201" y="245" width="3" height="4" fill="#000090"/>
<rect x="207" y="238" width="1" height="6" fill="#ff0000"/><rect x="206" y="239" width="3" height="4" fill="#ff0000"/>
<rect x="212" y="240" width="1" height="14" fill="#000090"/><rect x="211" y="242" width="3" height="11" fill="#000090"/>
<rect x="217" y="260" width="1" height="8" fill="#ff0000"/><rect x="216" y="262" width="3" height="2" fill="#ff0000"/>
<rect x="222" y="257" width="1" height="5" fill="#000090"/><rect x="221" y="257" width="3" height="4" fill="#000090"/>
<rect x="227" y="240" width="1" height="11" fill="#ff0000"/><rect x="226" y="241" width="3" height="10" fill="#ff0000"/>
<rect x="232" y="244" width="1" height="2" fill="#ff0000"/><rect x="231" y="244" width="3" height="2" fill="#ff0000"/>
<rect x="237" y="231" width="1" height="6" fill="#ff0000"/><rect x="236" y="233" width="3" height="4" fill="#ff0000"/>
<rect x="242" y="224" width="1" height="7" fill="#000090"/><rect x="241" y="224" width="3" height="6" fill="#000090"/>
<rect x="247" y="224" width="1" height="2" fill="#000090"/><rect x="246" y="225" width="3" height="1" fill="#000090"/>
<rect x="252" y="219" width="1" height="10" fill="#000090"/><rect x="251" y="220" width="3" height="8" fill="#000090"/>
<rect x="257" y="226" width="1" height="6" fill="#ff0000"/><rect x="256" y="227" width="3" height="5" fill="#ff0000"/>
<rect x="262" y="215" width="1" height="7" fill="#ff0000"/><rect x="261" y="216" width="3" height="6" fill="#ff0000"/>
<rect x="267" y="214" width="1" height="4" fill="#ff0000"/><rect x="266" y="215" width="3" height="2" fill="#ff0000"/>
<rect x="272" y="206" width="1" height="9" fill="#ff0000"/><rect x="271" y="209" width="3" height="6" fill="#ff0000"/>
<rect x="277" y="202" width="1" height="6" fill="#000090"/><rect x="276" y="202" width="3" height="6" fill="#000090"/>
<rect x="282" y="205" width="1" height="4" fill="#ff0000"/><rect x="281" y="206" width="3" height="2" fill="#ff0000"/>
<rect x="287" y="205" width="1" height="6" fill="#ff0000"/><rect x="286" y="205" width="3" height="4" fill="#ff0000"/>
<rect x="292" y="214" width="1" height="11" fill="#000090"/><rect x="291" y="215" width="3" height="9" fill="#000090"/>
<rect x="297" y="222" width="1" height="11" fill="#000090"/><rect x="296" y="231" width="3" height="2" fill="#000090"/>
<rect x="302" y="234" width="1" height="11" fill="#000090"/><rect x="301" y="235" width="3" height="8" fill="#000090"/>
<rect x="307" y="235" width="1" height="7" fill="#ff0000"/><rect x="306" y="236" width="3" height="5" fill="#ff0000"/>
<rect x="312" y="226" width="1" height="17" fill="#ff0000"/><rect x="311" y="226" width="3" height="13" fill="#ff0000"/>
<rect x="317" y="214" width="1" height="9" fill="#ff0000"/><rect x="316" y="214" width="3" height="9" fill="#ff0000"/>
<rect x="322" y="226" width="1" height="14" fill="#000090"/><rect x="321" y="227" width="3" height="13" fill="#000090"/>
<rect x="327" y="230" width="1" height="6" fill="#ff0000"/><rect x="326" y="230" width="3" height="6" fill="#ff0000"/>
<rect x="332" y="213" width="1" height="10" fill="#000090"/><rect x="331" y="216" width="3" height="5" fill="#000090"/>
<rect x="337" y="226" width="1" height="15" fill="#000090"/><rect x="336" y="226" width="3" height="13" fill="#000090"/>
<rect x="342" y="232" width="1" height="6" fill="#ff0000"/><rect x="341" y="236" width="3" height="2" fill="#ff0000"/>
<rect x="347" y="223" width="1" height="8" fill="#000090"/><rect x="346" y="228" width="3" height="3" fill="#000090"/>
<rect x="352" y="234" width="1" height="12" fill="#000090"/><rect x="351" y="234" width="3" height="11" fill="#000090"/>
<rect x="357" y="249" width="1" height="14" fill="#000090"/><rect x="356" y="257" width="3" height="5" fill="#000090"/>
<rect x="362" y="281" width="1" height="43" fill="#000090"/><rect x="361" y="281" width="3" height="41" fill="#000090"/>
<rect x="367" y="337" width="1" height="113" fill="#000090"/><rect x="366" y="337" width="3" height="79" fill="#000090"/>
<rect x="372" y="362" width="1" height="40" fill="#ff0000"/><rect x="371" y="369" width="3" height="33" fill="#ff0000"/>
<rect x="377" y="369" width="1" height="42" fill="#ff0000"/><rect x="376" y="381" width="3" height="6" fill="#ff0000"/>
<rect x="382" y="352" width="1" height="20" fill="#ff0000"/><rect x="381" y="359" width="3" height="13" fill="#ff0000"/>
<rect x="387" y="321" width="1" height="20" fill="#ff0000"/><rect x="386" y="321" width="3" height="20" fill="#ff0000"/>
<rect x="392" y="323" width="1" height="20" fill="#000090"/><rect x="391" y="324" width="3" height="14" fill="#000090"/>
<rect x="397" y="330" width="1" height="9" fill="#000090"/><rect x="396" y="331" width="3" height="8" fill="#000090"/>
<rect x="402" y="325" width="1" height="9" fill="#000090"/><rect x="401" y="325" width="3" height="4" fill="#000090"/>
<rect x="407" y="327" width="1" height="14" fill="#000090"/><rect x="406" y="327" width="3" height="6" fill="#000090"/>
<rect x="412" y="331" width="1" height="17" fill="#ff0000"/><rect x="411" y="335" width="3" height="12" fill="#ff0000"/>
<rect x="417" y="312" width="1" height="21" fill="#ff0000"/><rect x="416" y="312" width="3" height="21" fill="#ff0000"/>
<rect x="422" y="307" width="1" height="10" fill="#000090"/><rect x="421" y="307" width="3" height="2" fill="#000090"/>
<rect x="427" y="301" width="1" height="12" fill="#000090"/><rect x="426" y="307" width="3" height="6" fill="#000090"/>
<rect x="432" y="302" width="1" height="10" fill="#000090"/><rect x="431" y="306" width="3" height="6" fill="#000090"/>
<rect x="437" y="310" width="1" height="16" fill="#000090"/><rect x="436" y="310" width="3" height="12" fill="#000090"/>
<rect x="442" y="316" width="1" height="9" fill="#000090"/><rect x="441" y="316" width="3" height="7" fill="#000090"/>
<rect x="447" y="314" width="1" height="10" fill="#000090"/><rect x="446" y="317" width="3" height="7" fill="#000090"/>
<rect x="452" y="303" width="1" height="26" fill="#ff0000"/><rect x="451" y="306" width="3" height="18" fill="#ff0000"/>
<rect x="457" y="306" width="1" height="7" fill="#000090"/><rect x="456" y="310" width="3" height="3" fill="#000090"/>
<rect x="462" y="322" width="1" height="9" fill="#000090"/><rect x="461" y="322" width="3" height="5" fill="#000090"/>
<rect x="467" y="317" width="1" height="14" fill="#ff0000"/><rect x="466" y="318" width="3" height="13" fill="#ff0000"/>
<rect x="472" y="315" width="1" height="11" fill="#ff0000"/><rect x="471" y="316" width="3" height="10" fill="#ff0000"/>
<rect x="477" y="317" width="1" height="7" fill="#000090"/><rect x="476" y="318" width="3" height="6" fill="#000090"/>
<rect x="482" y="320" width="1" height="8" fill="#000090"/><rect x="481" y="322" width="3" height="6" fill="#000090"/>
<rect x="487" y="333" width="1" height="7" fill="#000090"/><rect x="486" y="335" width="3" height="5" fill="#000090"/>
<rect x="492" y="319" width="1" height="10" fill="#ff0000"/><rect x="491" y="322" width="3" height="7" fill="#ff0000"/>
<rect x="497" y="310" width="1" height="8" fill="#000090"/><rect x="496" y="314" width="3" height="2" fill="#000090"/>
<rect x="502" y="310" width="1" height="11" fill="#ff0000"/><rect x="501" y="314" width="3" height="7" fill="#ff0000"/>
<rect x="507" y="308" width="1" height="9" fill="#000090"/><rect x="506" y="312" width="3" height="5" fill="#000090"/>
<rect x="512" y="318" width="1" height="11" fill="#000090"/><rect x="511" y="318" width="3" height="10" fill="#000090"/>
<rect x="517" y="310" width="1" height="10" fill="#ff0000"/><rect x="516" y="313" width="3" height="7" fill="#ff0000"/>
<rect x="522" y="299" width="1" height="12" fill="#ff0000"/><rect x="521" y="299" width="3" height="10" fill="#ff0000"/>
<rect x="527" y="283" width="1" height="8" fill="#ff0000"/><rect x="526" y="284" width="3" height="5" fill="#ff0000"/>
<rect x="532" y="296" width="1" height="8" fill="#ff0000"/><rect x="531" y="298" width="3" height="2" fill="#ff0000"/>
<rect x="537" y="294" width="1" height="11" fill="#000090"/><rect x="536" y="296" width="3" height="9" fill="#000090"/>
<rect x="542" y="298" width="1" height="10" fill="#ff0000"/><rect x="541" y="302" width="3" height="2" fill="#ff0000"/>
<rect x="547" y="291" width="1" height="7" fill="#000090"/><rect x="546" y="293" width="3" height="5" fill="#000090"/>
<rect x="552" y="300" width="1" height="12" fill="#000090"/><rect x="551" y="306" width="3" height="6" fill="#000090"/>
<rect x="557" y="308" width="1" height="19" fill="#000090"/><rect x="556" y="308" width="3" height="10" fill="#000090"/>
<rect x="562" y="322" width="1" height="7" fill="#000090"/><rect x="561" y="325" width="3" height="4" fill="#000090"/>
<rect x="567" y="323" width="1" height="9" fill="#ff0000"/><rect x="566" y="325" width="3" height="7" fill="#ff0000"/>
<rect x="572" y="314" width="1" height="10" fill="#ff0000"/><rect x="571" y="316" width="3" height="8" fill="#ff0000"/>
<rect x="577" y="310" width="1" height="12" fill="#000090"/><rect x="576" y="311" width="3" height="11" fill="#000090"/>
<rect x="582" y="314" width="1" height="9" fill="#000090"/><rect x="581" y="321" width="3" height="2" fill="#000090"/>
<rect x="587" y="327" width="1" height="11" fill="#000090"/><rect x="586" y="327" width="3" height="10" fill="#000090"/>
<rect x="592" y="332" width="1" height="10" fill="#ff0000"/><rect x="591" y="333" width="3" height="8" fill="#ff0000"/>
<rect x="597" y="331" width="1" height="8" fill="#000090"/><rect x="596" y="332" width="3" height="7" fill="#000090"/>
<rect x="602" y="325" width="1" height="7" fill="#ff0000"/><rect x="601" y="325" width="3" height="7" fill="#ff0000"/>
<rect x="607" y="323" width="1" height="10" fill="#ff0000"/><rect x="606" y="329" width="3" height="3" fill="#ff0000"/>
<rect x="612" y="328" width="1" height="9" fill="#ff0000"/><rect x="611" y="331" width="3" height="2" fill="#ff0000"/>
<rect x="617" y="313" width="1" height="19" fill="#ff0000"/><rect x="616" y="313" width="3" height="19" fill="#ff0000"/>
<rect x="622" y="311" width="1" height="6" fill="#ff0000"/><rect x="621" y="311" width="3" height="3" fill="#ff0000"/>
<rect x="627" y="324" width="1" height="7" fill="#000090"/><rect x="626" y="327" width="3" height="2" fill="#000090"/>
<rect x="632" y="322" width="1" height="12" fill="#000090"/><rect x="631" y="327" width="3" height="7" fill="#000090"/>
<rect x="637" y="332" width="1" height="13" fill="#000090"/><rect x="636" y="334" width="3" height="10" fill="#000090"/>
<rect x="642" y="335" width="1" height="10" fill="#ff0000"/><rect x="641" y="337" width="3" height="8" fill="#ff0000"/>
<rect x="647" y="336" width="1" height="6" fill="#ff0000"/><rect x="646" y="336" width="3" height="3" fill="#ff0000"/>
<rect x="652" y="334" width="1" height="9" fill="#ff0000"/><rect x="651" y="334" width="3" height="7" fill="#ff0000"/>
<rect x="657" y="321" width="1" height="11" fill="#000090"/><rect x="656" y="329" width="3" height="3" fill="#000090"/>
<rect x="662" y="334" width="1" height="8" fill="#ff0000"/><rect x="661" y="335" width="3" height="7" fill="#ff0000"/>
<rect x="667" y="325" width="1" height="13" fill="#ff0000"/><rect x="666" y="327" width="3" height="11" fill="#ff0000"/>
<rect x="672" y="322" width="1" height="8" fill="#000090"/><rect x="671" y="323" width="3" height="3" fill="#000090"/>
<rect x="677" y="332" width="1" height="10" fill="#000090"/><rect x="676" y="333" width="3" height="9" fill="#000090"/>
<rect x="682" y="336" width="1" height="13" fill="#000090"/><rect x="681" y="337" width="3" height="10" fill="#000090"/>
<rect x="687" y="339" width="1" height="8" fill="#000090"/><rect x="686" y="342" width="3" height="5" fill="#000090"/>
<rect x="692" y="335" width="1" height="9" fill="#ff0000"/><rect x="691" y="336" width="3" height="3" fill="#ff0000"/>
<rect x="697" y="316" width="1" height="15" fill="#ff0000"/><rect x="696" y="319" width="3" height="12" fill="#ff0000"/>
<rect x="702" y="317" width="1" height="10" fill="#ff0000"/><rect x="701" y="322" width="3" height="5" fill="#ff0000"/>
<rect x="707" y="313" width="1" height="8" fill="#ff0000"/><rect x="706" y="315" width="3" height="6" fill="#ff0000"/>
<rect x="712" y="318" width="1" height="8" fill="#000090"/><rect x="711" y="319" width="3" height="6" fill="#000090"/>
<rect x="717" y="312" width="1" height="8" fill="#000090"/><rect x="716" y="315" width="3" height="5" fill="#000090"/>
<rect x="722" y="304" width="1" height="4" fill="#ff0000"/><rect x="721" y="304" width="3" height="4" fill="#ff0000"/>
<rect x="727" y="299" width="1" height="6" fill="#000090"/><rect x="726" y="300" width="3" height="4" fill="#000090"/>
<rect x="732" y="294" width="1" height="5" fill="#000090"/><rect x="731" y="296" width="3" height="3" fill="#000090"/>
<rect x="737" y="284" width="1" height="6" fill="#000090"/><rect x="736" y="286" width="3" height="4" fill="#000090"/>
<rect x="742" y="285" width="1" height="4" fill="#ff0000"/><rect x="741" y="286" width="3" height="3" fill="#ff0000"/>
<rect x="747" y="277" width="1" height="10" fill="#ff0000"/><rect x="746" y="277" width="3" height="10" fill="#ff0000"/>
<rect x="752" y="275" width="1" height="7" fill="#ff0000"/><rect x="751" y="277" width="3" height="5" fill="#ff0000"/>
<rect x="757" y="265" width="1" height="9" fill="#000090"/><rect x="756" y="265" width="3" height="9" fill="#000090"/>
<rect x="762" y="274" width="1" height="5" fill="#ff0000"/><rect x="761" y="277" width="3" height="2" fill="#ff0000"/>
<rect x="767" y="288" width="1" height="6" fill="#000090"/><rect x="766" y="290" width="3" height="4" fill="#000090"/>
<rect x="772" y="288" width="1" height="8" fill="#ff0000"/><rect x="771" y="288" width="3" height="8" fill="#ff0000"/>
<rect x="777" y="285" width="1" height="11" fill="#ff0000"/><rect x="776" y="291" width="3" height="2" fill="#ff0000"/>
<rect x="782" y="286" width="1" height="8" fill="#ff0000"/><rect x="781" y="287" width="3" height="7" fill="#ff0000"/>
<rect x="787" y="291" width="1" height="5" fill="#000090"/><rect x="786" y="292" width="3" height="4" fill="#000090"/>
<rect x="792" y="281" width="1" height="5" fill="#000090"/><rect x="791" y="284" width="3" height="2" fill="#000090"/>
<rect x="797" y="282" width="1" height="5" fill="#000090"/><rect x="796" y="283" width="3" height="3" fill="#000090"/>
<rect x="802" y="271" width="1" height="7" fill="#ff0000"/><rect x="801" y="272" width="3" height="6" fill="#ff0000"/>
<rect x="807" y="276" width="1" height="5" fill="#000090"/><rect x="806" y="277" width="3" height="4" fill="#000090"/>
<rect x="812" y="272" width="1" height="7" fill="#ff0000"/><rect x="811" y="276" width="3" height="3" fill="#ff0000"/>
<rect x="817" y="280" width="1" height="5" fill="#000090"/><rect x="816" y="280" width="3" height="2" fill="#000090"/>
<rect x="822" y="290" width="1" height="9" fill="#000090"/><rect x="821" y="291" width="3" height="5" fill="#000090"/>
<rect x="827" y="293" width="1" height="9" fill="#000090"/><rect x="826" y="297" width="3" height="5" fill="#000090"/>
<rect x="832" y="281" width="1" height="14" fill="#ff0000"/><rect x="831" y="288" width="3" height="7" fill="#ff0000"/>
<rect x="837" y="296" width="1" height="5" fill="#000090"/><rect x="836" y="297" width="3" height="4" fill="#000090"/>
<rect x="842" y="312" width="1" height="10" fill="#000090"/><rect x="841" y="312" width="3" height="8" fill="#000090"/>
<rect x="847" y="306" width="1" height="16" fill="#000090"/><rect x="846" y="314" width="3" height="4" fill="#000090"/>
<rect x="852" y="334" width="1" height="20" fill="#000090"/><rect x="851" y="334" width="3" height="18" fill="#000090"/>
<rect x="857" y="358" width="1" height="16" fill="#000090"/><rect x="856" y="362" width="3" height="9" fill="#000090"/>
<rect x="862" y="384" width="1" height="27" fill="#ff0000"/><rect x="861" y="384" width="3" height="4" fill="#ff0000"/>
<rect x="867" y="364" width="1" height="11" fill="#000090"/><rect x="866" y="368" width="3" height="7" fill="#000090"/>
<rect x="872" y="380" width="1" height="15" fill="#ff0000"/><rect x="871" y="380" width="3" height="10" fill="#ff0000"/>
<rect x="877" y="371" width="1" height="14" fill="#000090"/><rect x="876" y="372" width="3" height="11" fill="#000090"/>
<rect x="882" y="367" width="1" height="8" fill="#ff0000"/><rect x="881" y="370" width="3" height="2" fill="#ff0000"/>
<rect x="887" y="364" width="1" height="7" fill="#000090"/><rect x="886" y="365" width="3" height="5" fill="#000090"/>
<rect x="892" y="370" width="1" height="9" fill="#ff0000"/><rect x="891" y="374" width="3" height="2" fill="#ff0000"/>
<rect x="897" y="374" width="1" height="10" fill="#000090"/><rect x="896" y="375" width="3" height="9" fill="#000090"/>
<rect x="902" y="397" width="1" height="8" fill="#000090"/><rect x="901" y="399" width="3" height="6" fill="#000090"/>
<rect x="907" y="401" width="1" height="14" fill="#000090"/><rect x="906" y="407" width="3" height="8" fill="#000090"/>
<rect x="912" y="401" width="1" height="12" fill="#ff0000"/><rect x="911" y="403" width="3" height="4" fill="#ff0000"/>
<rect x="917" y="394" width="1" height="20" fill="#000090"/><rect x="916" y="395" width="3" height="18" fill="#000090"/>
<rect x="922" y="392" width="1" height="10" fill="#ff0000"/><rect x="921" y="399" width="3" height="3" fill="#ff0000"/>
<rect x="927" y="396" width="1" height="6" fill="#ff0000"/><rect x="926" y="397" width="3" height="5" fill="#ff0000"/>
<rect x="932" y="385" width="1" height="16" fill="#ff0000"/><rect x="931" y="392" width="3" height="6" fill="#ff0000"/>
<rect x="937" y="379" width="1" height="5" fill="#000090"/><rect x="936" y="382" width="3" height="2" fill="#000090"/>
<rect x="942" y="382" width="1" height="6" fill="#ff0000"/><rect x="941" y="382" width="3" height="4" fill="#ff0000"/>
<rect x="947" y="369" width="1" height="9" fill="#ff0000"/><rect x="946" y="371" width="3" height="7" fill="#ff0000"/>
<rect x="952" y="377" width="1" height="10" fill="#000090"/><rect x="951" y="380" width="3" height="4" fill="#000090"/>
<rect x="957" y="393" width="1" height="8" fill="#000090"/><rect x="956" y="393" width="3" height="6" fill="#000090"/>
<rect x="962" y="405" width="1" height="12" fill="#000090"/><rect x="961" y="407" width="3" height="10" fill="#000090"/>
<rect x="967" y="398" width="1" height="8" fill="#ff0000"/><rect x="966" y="400" width="3" height="6" fill="#ff0000"/>
<rect x="972" y="389" width="1" height="10" fill="#000090"/><rect x="971" y="391" width="3" height="8" fill="#000090"/>
<rect x="977" y="396" width="1" height="8" fill="#000090"/><rect x="976" y="402" width="3" height="2" fill="#000090"/>
<rect x="982" y="417" width="1" height="6" fill="#000090"/><rect x="981" y="417" width="3" height="6" fill="#000090"/>
<rect x="987" y="412" width="1" height="9" fill="#ff0000"/><rect x="986" y="414" width="3" height="4" fill="#ff0000"/>
<rect x="992" y="409" width="1" height="16" fill="#000090"/><rect x="991" y="413" width="3" height="12" fill="#000090"/>
<rect x="997" y="407" width="1" height="6" fill="#ff0000"/><rect x="996" y="409" width="3" height="4" fill="#ff0000"/>
<rect x="1002" y="391" width="1" height="9" fill="#ff0000"/><rect x="1001" y="391" width="3" height="9" fill="#ff0000"/>
<rect x="1007" y="399" width="1" height="7" fill="#000090"/><rect x="1006" y="401" width="3" height="5" fill="#000090"/>
<rect x="1012" y="399" width="1" height="7" fill="#ff0000"/><rect x="1011" y="402" width="3" height="4" fill="#ff0000"/>
<rect x="1017" y="411" width="1" height="10" fill="#000090"/><rect x="1016" y="411" width="3" height="10" fill="#000090"/>
<rect x="1022" y="419" width="1" height="20" fill="#000090"/><rect x="1021" y="420" width="3" height="18" fill="#000090"/>
<rect x="1027" y="415" width="1" height="12" fill="#ff0000"/><rect x="1026" y="415" width="3" height="12" fill="#ff0000"/>
<rect x="1032" y="409" width="1" height="8" fill="#ff0000"/><rect x="1031" y="413" width="3" height="3" fill="#ff0000"/>
<rect x="1037" y="406" width="1" height="18" fill="#ff0000"/><rect x="1036" y="406" width="3" height="18" fill="#ff0000"/>
<rect x="1042" y="401" width="1" height="9" fill="#000090"/><rect x="1041" y="405" width="3" height="3" fill="#000090"/>
<rect x="1047" y="417" width="1" height="13" fill="#000090"/><rect x="1046" y="418" width="3" height="4" fill="#000090"/>
<rect x="1052" y="427" width="1" height="12" fill="#ff0000"/><rect x="1051" y="429" width="3" height="4" fill="#ff0000"/>
<rect x="1057" y="424" width="1" height="16" fill="#000090"/><rect x="1056" y="425" width="3" height="12" fill="#000090"/>
<rect x="1062" y="421" width="1" height="9" fill="#ff0000"/><rect x="1061" y="422" width="3" height="8" fill="#ff0000"/>
<rect x="1067" y="409" width="1" height="9" fill="#ff0000"/><rect x="1066" y="415" width="3" height="3" fill="#ff0000"/>
<rect x="1072" y="396" width="1" height="9" fill="#ff0000"/><rect x="1071" y="398" width="3" height="7" fill="#ff0000"/>
<rect x="1077" y="400" width="1" height="7" fill="#ff0000"/><rect x="1076" y="402" width="3" height="4" fill="#ff0000"/>
<rect x="1082" y="391" width="1" height="6" fill="#000090"/><rect x="1081" y="393" width="3" height="4" fill="#000090"/>
<rect x="1087" y="398" width="1" height="5" fill="#000090"/><rect x="1086" y="398" width="3" height="5" fill="#000090"/>
<rect x="1092" y="386" width="1" height="6" fill="#000090"/><rect x="1091" y="389" width="3" height="2" fill="#000090"/>
<rect x="1097" y="399" width="1" height="5" fill="#000090"/><rect x="1096" y="400" width="3" height="4" fill="#000090"/>
<rect x="1102" y="394" width="1" height="9" fill="#000090"/><rect x="1101" y="396" width="3" height="4" fill="#000090"/>
<rect x="1107" y="403" width="1" height="7" fill="#000090"/><rect x="1106" y="404" width="3" height="6" fill="#000090"/>
<rect x="1112" y="406" width="1" height="5" fill="#000090"/><rect x="1111" y="408" width="3" height="2" fill="#000090"/>
<rect x="1117" y="392" width="1" height="10" fill="#ff0000"/><rect x="1116" y="392" width="3" height="10" fill="#ff0000"/>
<rect x="1122" y="390" width="1" height="11" fill="#000090"/><rect x="1121" y="390" width="3" height="11" fill="#000090"/>
<rect x="1127" y="397" width="1" height="15" fill="#ff0000"/><rect x="1126" y="402" width="3" height="7" fill="#ff0000"/>
<rect x="1132" y="385" width="1" height="19" fill="#ff0000"/><rect x="1131" y="385" width="3" height="15" fill="#ff0000"/>
<rect x="1137" y="370" width="1" height="9" fill="#000090"/><rect x="1136" y="371" width="3" height="5" fill="#000090"/>
<rect x="1142" y="364" width="1" height="17" fill="#000090"/><rect x="1141" y="377" width="3" height="4" fill="#000090"/>
<rect x="1147" y="383" width="1" height="12" fill="#000090"/><rect x="1146" y="388" width="3" height="7" fill="#000090"/>
<rect x="1152" y="404" width="1" height="9" fill="#000090"/><rect x="1151" y="404" width="3" height="9" fill="#000090"/>
<rect x="1157" y="395" width="1" height="9" fill="#ff0000"/><rect x="1156" y="396" width="3" height="5" fill="#ff0000"/>
<rect x="1162" y="397" width="1" height="6" fill="#000090"/><rect x="1161" y="398" width="3" height="5" fill="#000090"/>
<rect x="1167" y="399" width="1" height="13" fill="#000090"/><rect x="1166" y="402" width="3" height="10" fill="#000090"/>
<rect x="1172" y="400" width="1" height="9" fill="#ff0000"/><rect x="1171" y="401" width="3" height="4" fill="#ff0000"/>
<rect x="1177" y="415" width="1" height="11" fill="#000090"/><rect x="1176" y="415" width="3" height="11" fill="#000090"/>
<rect x="1182" y="418" width="1" height="7" fill="#000090"/><rect x="1181" y="420" width="3" height="5" fill="#000090"/>
<rect x="1187" y="410" width="1" height="6" fill="#000090"/><rect x="1186" y="412" width="3" height="4" fill="#000090"/>
<rect x="1192" y="418" width="1" height="6" fill="#000090"/><rect x="1191" y="420" width="3" height="4" fill="#000090"/>
<rect x="1197" y="418" width="1" height="12" fill="#000090"/><rect x="1196" y="420" width="3" height="10" fill="#000090"/>
<rect x="1202" y="425" width="1" height="9" fill="#ff0000"/><rect x="1201" y="426" width="3" height="8" fill="#ff0000"/>
<rect x="1207" y="434" width="1" height="5" fill="#ff0000"/><rect x="1206" y="436" width="3" height="2" fill="#ff0000"/>
<rect x="1212" y="436" width="1" height="5" fill="#000090"/><rect x="1211" y="438" width="3" height="3" fill="#000090"/>
<rect x="1217" y="438" width="1" height="11" fill="#ff0000"/><rect x="1216" y="442" width="3" height="7" fill="#ff0000"/>
<rect x="1222" y="451" width="1" height="7" fill="#000090"/><rect x="1221" y="452" width="3" height="6" fill="#000090"/>
<rect x="1227" y="453" width="1" height="7" fill="#ff0000"/><rect x="1226" y="456" width="3" height="4" fill="#ff0000"/>
<rect x="1232" y="441" width="1" height="7" fill="#ff0000"/><rect x="1231" y="444" width="3" height="4" fill="#ff0000"/>
<rect x="1237" y="427" width="1" height="11" fill="#ff0000"/><rect x="1236" y="427" width="3" height="11" fill="#ff0000"/>
<rect x="1242" y="431" width="1" height="7" fill="#ff0000"/><rect x="1241" y="431" width="3" height="3" fill="#ff0000"/>
<rect x="1247" y="410" width="1" height="9" fill="#ff0000"/><rect x="1246" y="415" width="3" height="4" fill="#ff0000"/>
<rect x="1252" y="411" width="1" height="6" fill="#ff0000"/><rect x="1251" y="411" width="3" height="6" fill="#ff0000"/>
<rect x="1257" y="405" width="1" height="4" fill="#000090"/><rect x="1256" y="406" width="3" height="2" fill="#000090"/>
<rect x="1262" y="409" width="1" height="9" fill="#000090"/><rect x="1261" y="411" width="3" height="7" fill="#000090"/>
<rect x="1267" y="403" width="1" height="11" fill="#ff0000"/><rect x="1266" y="404" width="3" height="10" fill="#ff0000"/>
<rect x="1272" y="407" width="1" height="7" fill="#ff0000"/><rect x="1271" y="409" width="3" height="2" fill="#ff0000"/>
<rect x="1277" y="417" width="1" height="8" fill="#ff0000"/><rect x="1276" y="421" width="3" height="4" fill="#ff0000"/>
<rect x="1282" y="407" width="1" height="6" fill="#ff0000"/><rect x="1281" y="410" width="3" height="2" fill="#ff0000"/>
<rect x="1287" y="416" width="1" height="7" fill="#ff0000"/><rect x="1286" y="420" width="3" height="3" fill="#ff0000"/>
<rect x="1292" y="421" width="1" height="6" fill="#ff0000"/><rect x="1291" y="423" width="3" height="2" fill="#ff0000"/>
<rect x="1297" y="429" width="1" height="8" fill="#000090"/><rect x="1296" y="429" width="3" height="8" fill="#000090"/>
<rect x="1302" y="431" width="1" height="4" fill="#000090"/><rect x="1301" y="432" width="3" height="3" fill="#000090"/>
<rect x="1307" y="437" width="1" height="10" fill="#000090"/><rect x="1306" y="437" width="3" height="9" fill="#000090"/>
<rect x="1312" y="438" width="1" height="5" fill="#ff0000"/><rect x="1311" y="440" width="3" height="3" fill="#ff0000"/>
<rect x="1317" y="427" width="1" height="5" fill="#ff0000"/><rect x="1316" y="428" width="3" height="4" fill="#ff0000"/>
<rect x="1322" y="430" width="1" height="5" fill="#000090"/><rect x="1321" y="431" width="3" height="4" fill="#000090"/>
<rect x="1327" y="423" width="1" height="5" fill="#000090"/><rect x="1326" y="424" width="3" height="4" fill="#000090"/>
<rect x="1332" y="428" width="1" height="5" fill="#000090"/><rect x="1331" y="431" width="3" height="2" fill="#000090"/>
<rect x="1337" y="429" width="1" height="5" fill="#000090"/><rect x="1336" y="430" width="3" height="4" fill="#000090"/>
<rect x="1342" y="434" width="1" height="7" fill="#ff0000"/><rect x="1341" y="435" width="3" height="4" fill="#ff0000"/>
<rect x="1347" y="429" width="1" height="3" fill="#ff0000"/><rect x="1346" y="429" width="3" height="3" fill="#ff0000"/>
<rect x="1352" y="417" width="1" height="5" fill="#ff0000"/><rect x="1351" y="418" width="3" height="4" fill="#ff0000"/>
<rect x="1357" y="422" width="1" height="5" fill="#000090"/><rect x="1356" y="423" width="3" height="4" fill="#000090"/>
<rect x="1362" y="426" width="1" height="14" fill="#000090"/><rect x="1361" y="427" width="3" height="10" fill="#000090"/>
<rect x="1367" y="429" width="1" height="5" fill="#000090"/><rect x="1366" y="432" width="3" height="2" fill="#000090"/>
<rect x="1372" y="429" width="1" height="3" fill="#ff0000"/><rect x="1371" y="429" width="3" height="3" fill="#ff0000"/>
<rect x="1377" y="432" width="1" height="7" fill="#000090"/><rect x="1376" y="432" width="3" height="5" fill="#000090"/>
<rect x="1382" y="424" width="1" height="5" fill="#ff0000"/><rect x="1381" y="424" width="3" height="5" fill="#ff0000"/>
<rect x="1387" y="433" width="1" height="6" fill="#000090"/><rect x="1386" y="433" width="3" height="5" fill="#000090"/>
<rect x="1392" y="427" width="1" height="6" fill="#ff0000"/><rect x="1391" y="428" width="3" height="5" fill="#ff0000"/>
<rect x="1397" y="416" width="1" height="13" fill="#ff0000"/><rect x="1396" y="420" width="3" height="9" fill="#ff0000"/>
<rect x="1402" y="409" width="1" height="8" fill="#ff0000"/><rect x="1401" y="411" width="3" height="6" fill="#ff0000"/>
<rect x="1407" y="397" width="1" height="6" fill="#ff0000"/><rect x="1406" y="400" width="3" height="3" fill="#ff0000"/>
<rect x="1412" y="397" width="1" height="6" fill="#ff0000"/><rect x="1411" y="399" width="3" height="4" fill="#ff0000"/>
<rect x="1417" y="394" width="1" height="5" fill="#000090"/><rect x="1416" y="395" width="3" height="4" fill="#000090"/>
<rect x="1422" y="386" width="1" height="9" fill="#ff0000"/><rect x="1421" y="389" width="3" height="6" fill="#ff0000"/>
<rect x="1427" y="388" width="1" height="6" fill="#000090"/><rect x="1426" y="389" width="3" height="5" fill="#000090"/>
<rect x="1432" y="389" width="1" height="8" fill="#000090"/><rect x="1431" y="391" width="3" height="3" fill="#000090"/>
<rect x="1437" y="393" width="1" height="7" fill="#000090"/><rect x="1436" y="395" width="3" height="5" fill="#000090"/>
<rect x="1442" y="394" width="1" height="6" fill="#ff0000"/><rect x="1441" y="395" width="3" height="5" fill="#ff0000"/>
<rect x="1447" y="395" width="1" height="5" fill="#ff0000"/><rect x="1446" y="396" width="3" height="4" fill="#ff0000"/>
<rect x="1452" y="389" width="1" height="3" fill="#ff0000"/><rect x="1451" y="389" width="3" height="3" fill="#ff0000"/>
<rect x="1457" y="389" width="1" height="5" fill="#000090"/><rect x="1456" y="392" width="3" height="2" fill="#000090"/>
<rect x="1462" y="383" width="1" height="4" fill="#000090"/><rect x="1461" y="383" width="3" height="4" fill="#000090"/>
<rect x="1467" y="385" width="1" height="4" fill="#ff0000"/><rect x="1466" y="386" width="3" height="3" fill="#ff0000"/>
<rect x="1472" y="376" width="1" height="7" fill="#ff0000"/><rect x="1471" y="376" width="3" height="7" fill="#ff0000"/>
<rect x="1477" y="376" width="1" height="7" fill="#ff0000"/><rect x="1476" y="378" width="3" height="2" fill="#ff0000"/>
<rect x="1482" y="376" width="1" height="9" fill="#000090"/><rect x="1481" y="377" width="3" height="8" fill="#000090"/>
<rect x="1487" y="376" width="1" height="7" fill="#ff0000"/><rect x="1486" y="378" width="3" height="5" fill="#ff0000"/>
<rect x="1492" y="371" width="1" height="11" fill="#ff0000"/><rect x="1491" y="373" width="3" height="9" fill="#ff0000"/>
<rect x="1497" y="349" width="1" height="21" fill="#ff0000"/><rect x="1496" y="354" width="3" height="16" fill="#ff0000"/>
<rect x="1502" y="349" width="1" height="9" fill="#ff0000"/><rect x="1501" y="356" width="3" height="2" fill="#ff0000"/>
<rect x="1507" y="337" width="1" height="8" fill="#ff0000"/><rect x="1506" y="342" width="3" height="3" fill="#ff0000"/>
<polyline fill="none" stroke="#f05000" stroke-width="1" points="22.5,529.5 27.5,529.1 32.5,528.4 37.5,527.7 42.5,527.0 47.5,526.1 52.5,525.1 57.5,524.2 62.5,523.3 67.5,522.3 72.5,521.4 77.5,520.7 82.5,520.0 87.5,519.7 92.5,519.3 97.5,519.0 102.5,518.8 107.5,518.7 112.5,518.7 117.5,518.7 122.5,519.1 127.5,519.2 132.5,519.3 137.5,519.1 142.5,518.6 147.5,518.1 152.5,517.6 157.5,517.1 162.5,516.7 167.5,516.5 172.5,516.5 177.5,516.4 182.5,516.7 187.5,517.5 192.5,518.5 197.5,519.3 202.5,520.2 207.5,520.8 212.5,521.6 217.5,522.7 222.5,523.9 227.5,524.7 232.5,525.2 237.5,525.3 242.5,525.0 247.5,524.5 252.5,523.8 257.5,523.1 262.5,522.2 267.5,521.2 272.5,520.1 277.5,518.9 282.5,517.7 287.5,516.6 292.5,516.1 297.5,516.2 302.5,517.0 307.5,518.1 312.5,519.0 317.5,519.6 322.5,520.5 327.5,521.4 332.5,522.0 337.5,522.8 342.5,523.8 347.5,524.6 352.5,525.6 357.5,527.1 362.5,530.3 367.5,536.8 372.5,543.7 377.5,550.9 382.5,557.3 387.5,561.8 392.5,565.2 397.5,567.8 402.5,569.3 407.5,570.0 412.5,570.3 417.5,569.6 422.5,568.1 427.5,566.2 432.5,564.1 437.5,562.1 442.5,560.2 447.5,558.4 452.5,556.3 457.5,554.3 462.5,552.6 467.5,551.0 472.5,549.5 477.5,548.2 482.5,547.1 487.5,546.6 492.5,545.9 497.5,544.9 502.5,543.8 507.5,542.7 512.5,541.8 517.5,540.8 522.5,539.4 527.5,537.4 532.5,535.5 537.5,533.9 542.5,532.4 547.5,531.0 552.5,530.1 557.5,529.7 562.5,529.9 567.5,530.3 572.5,530.7 577.5,531.1 582.5,531.6 587.5,532.4 592.5,533.3 597.5,534.3 602.5,535.0 607.5,535.6 612.5,536.1 617.5,536.0 622.5,535.6 627.5,535.3 632.5,535.3 637.5,535.6 642.5,536.0 647.5,536.4 652.5,536.7 657.5,536.8 662.5,536.9 667.5,536.7 672.5,536.4 677.5,536.3 682.5,536.5 687.5,536.8 692.5,536.9 697.5,536.5 702.5,535.9 707.5,534.9 712.5,533.9 717.5,533.0 722.5,531.6 727.5,530.1 732.5,528.5 737.5,526.6 742.5,524.6 747.5,522.4 752.5,520.2 757.5,518.1 762.5,516.3 767.5,515.1 772.5,514.4 777.5,514.0 782.5,513.9 787.5,514.1 792.5,514.3 797.5,514.6 802.5,514.6 807.5,514.6 812.5,514.6 817.5,514.7 822.5,515.3 827.5,516.3 832.5,517.3 837.5,518.5 842.5,520.2 847.5,522.2 852.5,525.1 857.5,528.8 862.5,533.3 867.5,537.7 872.5,542.0 877.5,545.9 882.5,549.2 887.5,551.8 892.5,553.9 897.5,555.7 902.5,557.7 907.5,559.9 912.5,561.8 917.5,563.5 922.5,564.6 927.5,565.2 932.5,565.2 937.5,564.6 942.5,563.4 947.5,561.7 952.5,559.9 957.5,558.4 962.5,557.6 967.5,556.9 972.5,556.0 977.5,555.3 982.5,555.0 987.5,554.7 992.5,554.8 997.5,554.5 1002.5,553.6 1007.5,552.6 1012.5,551.5 1017.5,550.8 1022.5,550.7 1027.5,550.4 1032.5,549.9 1037.5,549.1 1042.5,548.1 1047.5,547.4 1052.5,547.0 1057.5,547.0 1062.5,546.8 1067.5,546.4 1072.5,545.3 1077.5,544.0 1082.5,542.3 1087.5,540.7 1092.5,538.9 1097.5,537.4 1102.5,535.9 1107.5,534.9 1112.5,534.1 1117.5,533.2 1122.5,532.3 1127.5,531.6 1132.5,530.6 1137.5,529.2 1142.5,527.8 1147.5,526.8 1152.5,526.5 1157.5,526.4 1162.5,526.4 1167.5,526.8 1172.5,527.2 1177.5,528.2 1182.5,529.4 1187.5,530.5 1192.5,531.6 1197.5,532.9 1202.5,534.1 1207.5,535.5 1212.5,536.9 1217.5,538.4 1222.5,540.1 1227.5,541.8 1232.5,543.2 1237.5,543.8 1242.5,544.0 1247.5,543.4 1252.5,542.3 1257.5,540.8 1262.5,539.4 1267.5,537.7 1272.5,536.0 1277.5,534.7 1282.5,533.5 1287.5,532.6 1292.5,532.0 1297.5,531.9 1302.5,532.1 1307.5,532.8 1312.5,533.6 1317.5,534.0 1322.5,534.5 1327.5,534.6 1332.5,534.8 1337.5,534.9 1342.5,535.0 1347.5,535.0 1352.5,534.5 1357.5,534.1 1362.5,533.9 1367.5,533.8 1372.5,533.6 1377.5,533.5 1382.5,533.3 1387.5,533.2 1392.5,533.0 1397.5,532.6 1402.5,531.8 1407.5,530.5 1412.5,529.0 1417.5,527.4 1422.5,525.6 1427.5,523.9 1432.5,522.3 1437.5,521.1 1442.5,520.0 1447.5,519.2 1452.5,518.5 1457.5,517.9 1462.5,517.3 1467.5,516.8 1472.5,516.1 1477.5,515.5 1482.5,515.0 1487.5,514.7 1492.5,514.2 1497.5,513.4 1502.5,512.4 1507.5,511.1"/>
<polyline fill="none" stroke="#0a9040" stroke-width="1" points="22.5,529.5 27.5,527.4 32.5,525.7 37.5,524.6 42.5,524.2 47.5,522.8 52.5,521.1 57.5,520.7 62.5,519.5 67.5,518.5 72.5,517.9 77.5,517.6 82.5,517.5 87.5,518.5 92.5,517.7 97.5,517.6 102.5,518.3 107.5,518.1 112.5,518.8 117.5,518.9 122.5,520.4 127.5,519.9 132.5,519.8 137.5,518.0 142.5,516.6 147.5,516.0 152.5,515.7 157.5,514.9 162.5,515.3 167.5,515.8 172.5,516.2 177.5,516.3 182.5,517.7 187.5,520.9 192.5,522.6 197.5,522.6 202.5,523.5 207.5,523.3 212.5,524.7 217.5,527.1 222.5,528.8 227.5,527.8 232.5,527.4 237.5,525.7 242.5,524.0 247.5,522.2 252.5,521.2 257.5,520.4 262.5,518.6 267.5,517.2 272.5,515.5 277.5,514.1 282.5,513.0 287.5,512.3 292.5,514.0 297.5,516.7 302.5,520.2 307.5,522.3 312.5,522.8 317.5,521.8 322.5,524.1 327.5,524.9 332.5,524.4 337.5,526.2 342.5,527.5 347.5,527.7 352.5,529.7 357.5,533.2 362.5,543.3 367.5,562.5 372.5,571.5 377.5,579.6 382.5,582.7 387.5,579.8 392.5,579.0 397.5,577.9 402.5,575.3 407.5,573.2 412.5,571.4 417.5,566.7 422.5,562.2 427.5,558.7 432.5,555.5 437.5,554.0 442.5,552.6 447.5,551.4 452.5,548.1 457.5,546.0 462.5,545.9 467.5,544.7 472.5,543.3 477.5,542.9 482.5,543.0 487.5,544.3 492.5,543.1 497.5,541.2 502.5,539.4 507.5,538.1 512.5,538.4 517.5,536.8 522.5,533.7 527.5,529.5 532.5,527.8 537.5,527.3 542.5,526.7 547.5,525.6 552.5,526.5 557.5,528.0 562.5,530.5 567.5,532.1 572.5,532.2 577.5,532.9 582.5,533.5 587.5,535.6 592.5,536.9 597.5,538.4 602.5,537.9 607.5,537.8 612.5,538.0 617.5,535.8 622.5,533.8 627.5,534.2 632.5,535.1 637.5,537.0 642.5,537.6 647.5,537.9 652.5,537.8 657.5,537.2 662.5,537.2 667.5,536.1 672.5,534.9 677.5,535.9 682.5,537.2 687.5,538.1 692.5,537.6 697.5,534.9 702.5,533.2 707.5,530.9 712.5,530.2 717.5,529.0 722.5,526.3 727.5,524.1 732.5,521.8 737.5,519.0 742.5,516.5 747.5,513.7 752.5,511.6 757.5,509.7 762.5,509.0 767.5,510.5 772.5,511.4 777.5,512.6 782.5,513.3 787.5,515.0 792.5,515.2 797.5,515.6 802.5,514.5 807.5,514.7 812.5,514.6 817.5,515.3 822.5,517.7 827.5,520.4 832.5,521.1 837.5,523.2 842.5,527.2 847.5,530.2 852.5,536.6 857.5,543.9 862.5,551.1 867.5,555.3 872.5,559.0 877.5,561.9 882.5,562.3 887.5,562.1 892.5,562.2 897.5,562.9 902.5,565.7 907.5,568.7 912.5,569.3 917.5,570.4 922.5,569.2 927.5,567.5 932.5,565.2 937.5,561.9 942.5,558.8 947.5,554.7 952.5,552.7 957.5,552.6 962.5,554.5 967.5,553.8 972.5,552.7 977.5,552.2 982.5,553.8 987.5,553.9 992.5,554.8 997.5,553.5 1002.5,549.9 1007.5,548.7 1012.5,547.1 1017.5,547.8 1022.5,550.2 1027.5,549.2 1032.5,548.0 1037.5,545.9 1042.5,544.3 1047.5,544.5 1052.5,545.5 1057.5,546.9 1062.5,546.2 1067.5,544.5 1072.5,541.0 1077.5,538.6 1082.5,535.8 1087.5,534.4 1092.5,531.7 1097.5,531.2 1102.5,530.2 1107.5,530.7 1112.5,531.1 1117.5,529.3 1122.5,528.8 1127.5,528.8 1132.5,526.6 1137.5,523.8 1142.5,522.2 1147.5,522.8 1152.5,525.5 1157.5,525.7 1162.5,526.6 1167.5,528.5 1172.5,528.8 1177.5,531.9 1182.5,534.2 1187.5,534.9 1192.5,536.3 1197.5,538.1 1202.5,539.0 1207.5,540.8 1212.5,542.6 1217.5,544.1 1222.5,547.0 1227.5,548.9 1232.5,548.7 1237.5,546.2 1242.5,544.6 1247.5,541.2 1252.5,538.0 1257.5,534.8 1262.5,533.5 1267.5,530.8 1272.5,529.4 1277.5,529.7 1282.5,528.5 1287.5,528.9 1292.5,529.6 1297.5,531.7 1302.5,533.0 1307.5,535.4 1312.5,536.6 1317.5,536.0 1322.5,536.2 1327.5,535.4 1332.5,535.3 1337.5,535.3 1342.5,535.5 1347.5,534.8 1352.5,532.9 1357.5,532.3 1362.5,533.1 1367.5,533.2 1372.5,532.8 1377.5,533.3 1382.5,532.2 1387.5,532.9 1392.5,532.3 1397.5,530.8 1402.5,528.6 1407.5,525.5 1412.5,523.0 1417.5,520.9 1422.5,518.4 1427.5,517.0 1432.5,516.0 1437.5,516.1 1442.5,515.9 1447.5,516.0 1452.5,515.4 1457.5,515.5 1462.5,515.0 1467.5,514.7 1472.5,513.4 1477.5,512.9 1482.5,513.3 1487.5,513.2 1492.5,512.6 1497.5,510.0 1502.5,508.5 1507.5,505.8"/>
<rect x="27" y="527" width="1" height="2" fill="#ff0000"/>
<rect x="32" y="526" width="1" height="3" fill="#ff0000"/>
<rect x="37" y="526" width="1" height="3" fill="#ff0000"/>
<rect x="42" y="526" width="1" height="3" fill="#ff0000"/>
<rect x="47" y="526" width="1" height="3" fill="#ff0000"/>
<rect x="52" y="525" width="1" height="4" fill="#ff0000"/>
<rect x="57" y="525" width="1" height="4" fill="#ff0000"/>
<rect x="62" y="525" width="1" height="4" fill="#ff0000"/>
<rect x="67" y="525" width="1" height="4" fill="#ff0000"/>
<rect x="72" y="525" width="1" height="4" fill="#ff0000"/>
<rect x="77" y="526" width="1" height="3" fill="#ff0000"/>
<rect x="82" y="526" width="1" height="3" fill="#ff0000"/>
<rect x="87" y="528" width="1" height="1" fill="#ff0000"/>
<rect x="92" y="527" width="1" height="2" fill="#ff0000"/>
<rect x="97" y="528" width="1" height="1" fill="#ff0000"/>
<rect x="102" y="528" width="1" height="1" fill="#ff0000"/>
<rect x="107" y="528" width="1" height="1" fill="#ff0000"/>
<rect x="122" y="530" width="1" height="1" fill="#0000ff"/>
<rect x="127" y="530" width="1" height="1" fill="#0000ff"/>
<rect x="137" y="528" width="1" height="1" fill="#ff0000"/>
<rect x="142" y="527" width="1" height="2" fill="#ff0000"/>
<rect x="147" y="527" width="1" height="2" fill="#ff0000"/>
<rect x="152" y="527" width="1" height="2" fill="#ff0000"/>
<rect x="157" y="527" width="1" height="2" fill="#ff0000"/>
<rect x="162" y="528" width="1" height="1" fill="#ff0000"/>
<rect x="167" y="528" width="1" height="1" fill="#ff0000"/>
<rect x="182" y="530" width="1" height="1" fill="#0000ff"/>
<rect x="187" y="530" width="1" height="3" fill="#0000ff"/>
<rect x="192" y="530" width="1" height="4" fill="#0000ff"/>
<rect x="197" y="530" width="1" height="3" fill="#0000ff"/>
<rect x="202" y="530" width="1" height="3" fill="#0000ff"/>
<rect x="207" y="530" width="1" height="2" fill="#0000ff"/>
<rect x="212" y="530" width="1" height="3" fill="#0000ff"/>
<rect x="217" y="530" width="1" height="4" fill="#0000ff"/>
<rect x="222" y="530" width="1" height="5" fill="#0000ff"/>
<rect x="227" y="530" width="1" height="3" fill="#0000ff"/>
<rect x="232" y="530" width="1" height="2" fill="#0000ff"/>
<rect x="242" y="528" width="1" height="1" fill="#ff0000"/>
<rect x="247" y="527" width="1" height="2" fill="#ff0000"/>
<rect x="252" y="526" width="1" height="3" fill="#ff0000"/>
<rect x="257" y="526" width="1" height="3" fill="#ff0000"/>
<rect x="262" y="525" width="1" height="4" fill="#ff0000"/>
<rect x="267" y="525" width="1" height="4" fill="#ff0000"/>
<rect x="272" y="524" width="1" height="5" fill="#ff0000"/>
<rect x="277" y="524" width="1" height="5" fill="#ff0000"/>
<rect x="282" y="524" width="1" height="5" fill="#ff0000"/>
<rect x="287" y="525" width="1" height="4" fill="#ff0000"/>
<rect x="292" y="527" width="1" height="2" fill="#ff0000"/>
<rect x="302" y="530" width="1" height="3" fill="#0000ff"/>
<rect x="307" y="530" width="1" height="4" fill="#0000ff"/>
<rect x="312" y="530" width="1" height="4" fill="#0000ff"/>
<rect x="317" y="530" width="1" height="2" fill="#0000ff"/>
<rect x="322" y="530" width="1" height="4" fill="#0000ff"/>
<rect x="327" y="530" width="1" height="4" fill="#0000ff"/>
<rect x="332" y="530" width="1" height="2" fill="#0000ff"/>
<rect x="337" y="530" width="1" height="3" fill="#0000ff"/>
<rect x="342" y="530" width="1" height="4" fill="#0000ff"/>
<rect x="347" y="530" width="1" height="3" fill="#0000ff"/>
<rect x="352" y="530" width="1" height="4" fill="#0000ff"/>
<rect x="357" y="530" width="1" height="6" fill="#0000ff"/>
<rect x="362" y="530" width="1" height="13" fill="#0000ff"/>
<rect x="367" y="530" width="1" height="26" fill="#0000ff"/>
<rect x="372" y="530" width="1" height="28" fill="#0000ff"/>
<rect x="377" y="530" width="1" height="29" fill="#0000ff"/>
<rect x="382" y="530" width="1" height="25" fill="#0000ff"/>
<rect x="387" y="530" width="1" height="18" fill="#0000ff"/>
<rect x="392" y="530" width="1" height="14" fill="#0000ff"/>
<rect x="397" y="530" width="1" height="10" fill="#0000ff"/>
<rect x="402" y="530" width="1" height="6" fill="#0000ff"/>
<rect x="407" y="530" width="1" height="3" fill="#0000ff"/>
<rect x="412" y="530" width="1" height="1" fill="#0000ff"/>
<rect x="417" y="526" width="1" height="3" fill="#ff0000"/>
<rect x="422" y="523" width="1" height="6" fill="#ff0000"/>
<rect x="427" y="521" width="1" height="8" fill="#ff0000"/>
<rect x="432" y="520" width="1" height="9" fill="#ff0000"/>
<rect x="437" y="521" width="1" height="8" fill="#ff0000"/>
<rect x="442" y="521" width="1" height="8" fill="#ff0000"/>
<rect x="447" y="522" width="1" height="7" fill="#ff0000"/>
<rect x="452" y="521" width="1" height="8" fill="#ff0000"/>
<rect x="457" y="521" width="1" height="8" fill="#ff0000"/>
<rect x="462" y="522" width="1" height="7" fill="#ff0000"/>
<rect x="467" y="523" width="1" height="6" fill="#ff0000"/>
<rect x="472" y="523" width="1" height="6" fill="#ff0000"/>
<rect x="477" y="524" width="1" height="5" fill="#ff0000"/>
<rect x="482" y="525" width="1" height="4" fill="#ff0000"/>
<rect x="487" y="527" width="1" height="2" fill="#ff0000"/>
<rect x="492" y="526" width="1" height="3" fill="#ff0000"/>
<rect x="497" y="525" width="1" height="4" fill="#ff0000"/>
<rect x="502" y="525" width="1" height="4" fill="#ff0000"/>
<rect x="507" y="524" width="1" height="5" fill="#ff0000"/>
<rect x="512" y="526" width="1" height="3" fill="#ff0000"/>
<rect x="517" y="525" width="1" height="4" fill="#ff0000"/>
<rect x="522" y="523" width="1" height="6" fill="#ff0000"/>
<rect x="527" y="521" width="1" height="8" fill="#ff0000"/>
<rect x="532" y="521" width="1" height="8" fill="#ff0000"/>
<rect x="537" y="522" width="1" height="7" fill="#ff0000"/>
<rect x="542" y="523" width="1" height="6" fill="#ff0000"/>
<rect x="547" y="524" width="1" height="5" fill="#ff0000"/>
<rect x="552" y="525" width="1" height="4" fill="#ff0000"/>
<rect x="557" y="527" width="1" height="2" fill="#ff0000"/>
<rect x="562" y="530" width="1" height="1" fill="#0000ff"/>
<rect x="567" y="530" width="1" height="2" fill="#0000ff"/>
<rect x="572" y="530" width="1" height="2" fill="#0000ff"/>
<rect x="577" y="530" width="1" height="2" fill="#0000ff"/>
<rect x="582" y="530" width="1" height="2" fill="#0000ff"/>
<rect x="587" y="530" width="1" height="3" fill="#0000ff"/>
<rect x="592" y="530" width="1" height="4" fill="#0000ff"/>
<rect x="597" y="530" width="1" height="4" fill="#0000ff"/>
<rect x="602" y="530" width="1" height="3" fill="#0000ff"/>
<rect x="607" y="530" width="1" height="2" fill="#0000ff"/>
<rect x="612" y="530" width="1" height="2" fill="#0000ff"/>
<rect x="622" y="527" width="1" height="2" fill="#ff0000"/>
<rect x="627" y="528" width="1" height="1" fill="#ff0000"/>
<rect x="637" y="530" width="1" height="1" fill="#0000ff"/>
<rect x="642" y="530" width="1" height="2" fill="#0000ff"/>
<rect x="647" y="530" width="1" height="2" fill="#0000ff"/>
<rect x="652" y="530" width="1" height="1" fill="#0000ff"/>
<rect x="667" y="528" width="1" height="1" fill="#ff0000"/>
<rect x="672" y="528" width="1" height="1" fill="#ff0000"/>
<rect x="682" y="530" width="1" height="1" fill="#0000ff"/>
<rect x="687" y="530" width="1" height="1" fill="#0000ff"/>
<rect x="692" y="530" width="1" height="1" fill="#0000ff"/>
<rect x="697" y="527" width="1" height="2" fill="#ff0000"/>
<rect x="702" y="526" width="1" height="3" fill="#ff0000"/>
<rect x="707" y="525" width="1" height="4" fill="#ff0000"/>
<rect x="712" y="525" width="1" height="4" fill="#ff0000"/>
<rect x="717" y="525" width="1" height="4" fill="#ff0000"/>
<rect x="722" y="524" width="1" height="5" fill="#ff0000"/>
<rect x="727" y="523" width="1" height="6" fill="#ff0000"/>
<rect x="732" y="522" width="1" height="7" fill="#ff0000"/>
<rect x="737" y="521" width="1" height="8" fill="#ff0000"/>
<rect x="742" y="521" width="1" height="8" fill="#ff0000"/>
<rect x="747" y="520" width="1" height="9" fill="#ff0000"/>
<rect x="752" y="520" width="1" height="9" fill="#ff0000"/>
<rect x="757" y="521" width="1" height="8" fill="#ff0000"/>
<rect x="762" y="522" width="1" height="7" fill="#ff0000"/>
<rect x="767" y="524" width="1" height="5" fill="#ff0000"/>
<rect x="772" y="526" width="1" height="3" fill="#ff0000"/>
<rect x="777" y="528" width="1" height="1" fill="#ff0000"/>
<rect x="782" y="528" width="1" height="1" fill="#ff0000"/>
<rect x="787" y="530" width="1" height="1" fill="#0000ff"/>
<rect x="792" y="530" width="1" height="1" fill="#0000ff"/>
<rect x="797" y="530" width="1" height="1" fill="#0000ff"/>
<rect x="817" y="530" width="1" height="1" fill="#0000ff"/>
<rect x="822" y="530" width="1" height="2" fill="#0000ff"/>
<rect x="827" y="530" width="1" height="4" fill="#0000ff"/>
<rect x="832" y="530" width="1" height="4" fill="#0000ff"/>
<rect x="837" y="530" width="1" height="5" fill="#0000ff"/>
<rect x="842" y="530" width="1" height="7" fill="#0000ff"/>
<rect x="847" y="530" width="1" height="8" fill="#0000ff"/>
<rect x="852" y="530" width="1" height="11" fill="#0000ff"/>
<rect x="857" y="530" width="1" height="15" fill="#0000ff"/>
<rect x="862" y="530" width="1" height="18" fill="#0000ff"/>
<rect x="867" y="530" width="1" height="18" fill="#0000ff"/>
<rect x="872" y="530" width="1" height="17" fill="#0000ff"/>
<rect x="877" y="530" width="1" height="16" fill="#0000ff"/>
<rect x="882" y="530" width="1" height="13" fill="#0000ff"/>
<rect x="887" y="530" width="1" height="10" fill="#0000ff"/>
<rect x="892" y="530" width="1" height="8" fill="#0000ff"/>
<rect x="897" y="530" width="1" height="7" fill="#0000ff"/>
<rect x="902" y="530" width="1" height="8" fill="#0000ff"/>
<rect x="907" y="530" width="1" height="9" fill="#0000ff"/>
<rect x="912" y="530" width="1" height="8" fill="#0000ff"/>
<rect x="917" y="530" width="1" height="7" fill="#0000ff"/>
<rect x="922" y="530" width="1" height="5" fill="#0000ff"/>
<rect x="927" y="530" width="1" height="2" fill="#0000ff"/>
<rect x="937" y="526" width="1" height="3" fill="#ff0000"/>
<rect x="942" y="524" width="1" height="5" fill="#ff0000"/>
<rect x="947" y="522" width="1" height="7" fill="#ff0000"/>
<rect x="952" y="522" width="1" height="7" fill="#ff0000"/>
<rect x="957" y="523" width="1" height="6" fill="#ff0000"/>
<rect x="962" y="526" width="1" height="3" fill="#ff0000"/>
<rect x="967" y="526" width="1" height="3" fill="#ff0000"/>
<rect x="972" y="526" width="1" height="3" fill="#ff0000"/>
<rect x="977" y="526" width="1" height="3" fill="#ff0000"/>
<rect x="982" y="528" width="1" height="1" fill="#ff0000"/>
<rect x="987" y="528" width="1" height="1" fill="#ff0000"/>
<rect x="997" y="528" width="1" height="1" fill="#ff0000"/>
<rect x="1002" y="525" width="1" height="4" fill="#ff0000"/>
<rect x="1007" y="525" width="1" height="4" fill="#ff0000"/>
<rect x="1012" y="525" width="1" height="4" fill="#ff0000"/>
<rect x="1017" y="526" width="1" height="3" fill="#ff0000"/>
<rect x="1027" y="528" width="1" height="1" fill="#ff0000"/>
<rect x="1032" y="527" width="1" height="2" fill="#ff0000"/>
<rect x="1037" y="526" width="1" height="3" fill="#ff0000"/>
<rect x="1042" y="525" width="1" height="4" fill="#ff0000"/>
<rect x="1047" y="526" width="1" height="3" fill="#ff0000"/>
<rect x="1052" y="527" width="1" height="2" fill="#ff0000"/>
<rect x="1062" y="528" width="1" height="1" fill="#ff0000"/>
<rect x="1067" y="527" width="1" height="2" fill="#ff0000"/>
<rect x="1072" y="525" width="1" height="4" fill="#ff0000"/>
<rect x="1077" y="524" width="1" height="5" fill="#ff0000"/>
<rect x="1082" y="523" width="1" height="6" fill="#ff0000"/>
<rect x="1087" y="523" width="1" height="6" fill="#ff0000"/>
<rect x="1092" y="522" width="1" height="7" fill="#ff0000"/>
<rect x="1097" y="523" width="1" height="6" fill="#ff0000"/>
<rect x="1102" y="523" width="1" height="6" fill="#ff0000"/>
<rect x="1107" y="525" width="1" height="4" fill="#ff0000"/>
<rect x="1112" y="526" width="1" height="3" fill="#ff0000"/>
<rect x="1117" y="525" width="1" height="4" fill="#ff0000"/>
<rect x="1122" y="526" width="1" height="3" fill="#ff0000"/>
<rect x="1127" y="526" width="1" height="3" fill="#ff0000"/>
<rect x="1132" y="525" width="1" height="4" fill="#ff0000"/>
<rect x="1137" y="524" width="1" height="5" fill="#ff0000"/>
<rect x="1142" y="523" width="1" height="6" fill="#ff0000"/>
<rect x="1147" y="525" width="1" height="4" fill="#ff0000"/>
<rect x="1152" y="528" width="1" height="1" fill="#ff0000"/>
<rect x="1157" y="528" width="1" height="1" fill="#ff0000"/>
<rect x="1167" y="530" width="1" height="2" fill="#0000ff"/>
<rect x="1172" y="530" width="1" height="2" fill="#0000ff"/>
<rect x="1177" y="530" width="1" height="4" fill="#0000ff"/>
<rect x="1182" y="530" width="1" height="5" fill="#0000ff"/>
<rect x="1187" y="530" width="1" height="4" fill="#0000ff"/>
<rect x="1192" y="530" width="1" height="5" fill="#0000ff"/>
<rect x="1197" y="530" width="1" height="5" fill="#0000ff"/>
<rect x="1202" y="530" width="1" height="5" fill="#0000ff"/>
<rect x="1207" y="530" width="1" height="5" fill="#0000ff"/>
<rect x="1212" y="530" width="1" height="6" fill="#0000ff"/>
<rect x="1217" y="530" width="1" height="6" fill="#0000ff"/>
<rect x="1222" y="530" width="1" height="7" fill="#0000ff"/>
<rect x="1227" y="530" width="1" height="7" fill="#0000ff"/>
<rect x="1232" y="530" width="1" height="5" fill="#0000ff"/>
<rect x="1237" y="530" width="1" height="2" fill="#0000ff"/>
<rect x="1242" y="530" width="1" height="1" fill="#0000ff"/>
<rect x="1247" y="527" width="1" height="2" fill="#ff0000"/>
<rect x="1252" y="525" width="1" height="4" fill="#ff0000"/>
<rect x="1257" y="523" width="1" height="6" fill="#ff0000"/>
<rect x="1262" y="523" width="1" height="6" fill="#ff0000"/>
<rect x="1267" y="522" width="1" height="7" fill="#ff0000"/>
<rect x="1272" y="522" width="1" height="7" fill="#ff0000"/>
<rect x="1277" y="524" width="1" height="5" fill="#ff0000"/>
<rect x="1282" y="524" width="1" height="5" fill="#ff0000"/>
<rect x="1287" y="525" width="1" height="4" fill="#ff0000"/>
<rect x="1292" y="527" width="1" height="2" fill="#ff0000"/>
<rect x="1302" y="530" width="1" height="1" fill="#0000ff"/>
<rect x="1307" y="530" width="1" height="3" fill="#0000ff"/>
<rect x="1312" y="530" width="1" height="3" fill="#0000ff"/>
<rect x="1317" y="530" width="1" height="2" fill="#0000ff"/>
<rect x="1322" y="530" width="1" height="2" fill="#0000ff"/>
<rect x="1327" y="530" width="1" height="1" fill="#0000ff"/>
<rect x="1332" y="530" width="1" height="1" fill="#0000ff"/>
<rect x="1352" y="527" width="1" height="2" fill="#ff0000"/>
<rect x="1357" y="527" width="1" height="2" fill="#ff0000"/>
<rect x="1362" y="528" width="1" height="1" fill="#ff0000"/>
<rect x="1367" y="528" width="1" height="1" fill="#ff0000"/>
<rect x="1372" y="528" width="1" height="1" fill="#ff0000"/>
<rect x="1382" y="528" width="1" height="1" fill="#ff0000"/>
<rect x="1392" y="528" width="1" height="1" fill="#ff0000"/>
<rect x="1397" y="527" width="1" height="2" fill="#ff0000"/>
<rect x="1402" y="526" width="1" height="3" fill="#ff0000"/>
<rect x="1407" y="524" width="1" height="5" fill="#ff0000"/>
<rect x="1412" y="523" width="1" height="6" fill="#ff0000"/>
<rect x="1417" y="523" width="1" height="6" fill="#ff0000"/>
<rect x="1422" y="522" width="1" height="7" fill="#ff0000"/>
<rect x="1427" y="522" width="1" height="7" fill="#ff0000"/>
<rect x="1432" y="523" width="1" height="6" fill="#ff0000"/>
<rect x="1437" y="524" width="1" height="5" fill="#ff0000"/>
<rect x="1442" y="525" width="1" height="4" fill="#ff0000"/>
<rect x="1447" y="526" width="1" height="3" fill="#ff0000"/>
<rect x="1452" y="526" width="1" height="3" fill="#ff0000"/>
<rect x="1457" y="527" width="1" height="2" fill="#ff0000"/>
<rect x="1462" y="527" width="1" height="2" fill="#ff0000"/>
<rect x="1467" y="527" width="1" height="2" fill="#ff0000"/>
<rect x="1472" y="526" width="1" height="3" fill="#ff0000"/>
<rect x="1477" y="526" width="1" height="3" fill="#ff0000"/>
<rect x="1482" y="527" width="1" height="2" fill="#ff0000"/>
<rect x="1487" y="528" width="1" height="1" fill="#ff0000"/>
<rect x="1492" y="527" width="1" height="2" fill="#ff0000"/>
<rect x="1497" y="526" width="1" height="3" fill="#ff0000"/>
<rect x="1502" y="525" width="1" height="4" fill="#ff0000"/>
<rect x="1507" y="524" width="1" height="5" fill="#ff0000"/>
<rect x="11" y="529" width="1498" height="1" fill="#ff00ff"/>
<polyline fill="none" stroke="#0a9040" stroke-width="1" points="82.5,642.0 87.5,633.8 92.5,630.5 97.5,640.4 102.5,645.2 107.5,639.9 112.5,642.2 117.5,645.4 122.5,655.1 127.5,642.5 132.5,647.8 137.5,641.7 142.5,640.6 147.5,642.5 152.5,642.5 157.5,635.1 162.5,645.4 167.5,643.4 172.5,639.3 177.5,641.2 182.5,644.1 187.5,655.7 192.5,646.1 197.5,648.1 202.5,650.9 207.5,654.3 212.5,660.9 217.5,663.5 222.5,662.4 227.5,656.0 232.5,654.5 237.5,650.1 242.5,649.0 247.5,648.7 252.5,645.4 257.5,637.1 262.5,636.2 267.5,639.4 272.5,632.9 277.5,635.1 282.5,623.9 287.5,612.4 292.5,631.3 297.5,646.3 302.5,650.8 307.5,653.9 312.5,650.3 317.5,646.3 322.5,657.0 327.5,653.2 332.5,653.5 337.5,659.8 342.5,661.4 347.5,659.8 352.5,663.8 357.5,667.7 362.5,673.9 367.5,681.0 372.5,669.9 377.5,672.1 382.5,669.8 387.5,665.3 392.5,664.5 397.5,666.1 402.5,666.1 407.5,664.8 412.5,665.4 417.5,662.6 422.5,660.5 427.5,659.0 432.5,650.3 437.5,629.5 442.5,637.3 447.5,632.5 452.5,633.5 457.5,647.9 462.5,646.8 467.5,643.2 472.5,646.3 477.5,647.9 482.5,648.4 487.5,665.8 492.5,658.3 497.5,653.3 502.5,653.3 507.5,649.7 512.5,654.1 517.5,648.2 522.5,649.3 527.5,641.8 532.5,641.8 537.5,646.8 542.5,646.8 547.5,642.2 552.5,646.4 557.5,644.0 562.5,654.3 567.5,655.9 572.5,652.7 577.5,653.8 582.5,650.0 587.5,661.0 592.5,666.6 597.5,677.6 602.5,664.9 607.5,664.2 612.5,666.2 617.5,658.9 622.5,652.0 627.5,656.8 632.5,654.3 637.5,659.8 642.5,661.3 647.5,658.9 652.5,657.5 657.5,649.4 662.5,653.0 667.5,646.6 672.5,652.0 677.5,657.8 682.5,659.0 687.5,670.9 692.5,665.1 697.5,647.3 702.5,646.1 707.5,636.5 712.5,645.1 717.5,643.3 722.5,638.6 727.5,639.2 732.5,635.3 737.5,635.0 742.5,634.7 747.5,621.6 752.5,617.5 757.5,617.0 762.5,621.9 767.5,638.6 772.5,634.8 777.5,639.3 782.5,631.3 787.5,639.0 792.5,641.1 797.5,641.5 802.5,638.3 807.5,647.2 812.5,646.7 817.5,654.2 822.5,660.5 827.5,665.0 832.5,656.7 837.5,655.1 842.5,664.1 847.5,662.2 852.5,672.1 857.5,673.9 862.5,680.2 867.5,675.9 872.5,682.3 877.5,681.6 882.5,678.0 887.5,677.0 892.5,675.7 897.5,676.1 902.5,684.5 907.5,684.3 912.5,677.0 917.5,679.1 922.5,667.7 927.5,662.0 932.5,655.2 937.5,655.6 942.5,652.8 947.5,647.7 952.5,657.1 957.5,662.1 962.5,665.4 967.5,657.2 972.5,649.9 977.5,648.0 982.5,658.4 987.5,652.7 992.5,660.7 997.5,655.8 1002.5,651.7 1007.5,658.2 1012.5,657.6 1017.5,665.2 1022.5,666.1 1027.5,656.3 1032.5,651.2 1037.5,653.7 1042.5,654.6 1047.5,657.0 1052.5,654.1 1057.5,658.6 1062.5,651.4 1067.5,653.8 1072.5,654.2 1077.5,651.0 1082.5,650.1 1087.5,645.7 1092.5,634.8 1097.5,647.3 1102.5,646.6 1107.5,653.1 1112.5,652.8 1117.5,641.2 1122.5,641.2 1127.5,638.8 1132.5,638.0 1137.5,637.2 1142.5,644.7 1147.5,649.0 1152.5,657.5 1157.5,650.1 1162.5,656.0 1167.5,654.7 1172.5,652.7 1177.5,656.8 1182.5,656.4 1187.5,659.2 1192.5,659.2 1197.5,660.2 1202.5,665.7 1207.5,672.4 1212.5,672.2 1217.5,669.7 1222.5,669.0 1227.5,677.8 1232.5,669.1 1237.5,658.1 1242.5,664.0 1247.5,647.7 1252.5,646.6 1257.5,648.5 1262.5,649.4 1267.5,641.9 1272.5,645.2 1277.5,646.1 1282.5,640.9 1287.5,644.4 1292.5,639.0 1297.5,645.1 1302.5,648.2 1307.5,659.1 1312.5,655.5 1317.5,657.3 1322.5,661.1 1327.5,659.8 1332.5,658.1 1337.5,665.1 1342.5,664.1 1347.5,656.0 1352.5,656.0 1357.5,655.0 1362.5,658.1 1367.5,650.4 1372.5,649.4 1377.5,647.2 1382.5,644.1 1387.5,656.4 1392.5,649.2 1397.5,648.7 1402.5,642.5 1407.5,638.4 1412.5,637.1 1417.5,638.5 1422.5,639.2 1427.5,636.8 1432.5,630.0 1437.5,635.2 1442.5,635.2 1447.5,630.9 1452.5,632.4 1457.5,624.4 1462.5,624.9 1467.5,627.3 1472.5,627.0 1477.5,633.7 1482.5,640.6 1487.5,637.9 1492.5,640.0 1497.5,628.4 1502.5,630.2 1507.5,621.5"/>
<rect x="11" y="633" width="1498" height="1" fill="#1060c0"/>
<rect x="11" y="670" width="1498" height="1" fill="#f05000"/>
<polyline fill="none" stroke="#0a9040" stroke-width="1" points="107.5,722.6 112.5,724.2 117.5,723.7 122.5,726.3 127.5,723.0 132.5,723.7 137.5,720.6 142.5,720.9 147.5,721.9 152.5,722.1 157.5,721.1 162.5,723.0 167.5,723.2 172.5,723.1 177.5,722.7 182.5,725.1 187.5,728.8 192.5,727.0 197.5,724.6 202.5,726.3 207.5,724.4 212.5,727.4 217.5,729.6 222.5,729.2 227.5,724.9 232.5,725.7 237.5,723.2 242.5,722.3 247.5,721.6 252.5,722.1 257.5,722.2 262.5,719.9 267.5,720.0 272.5,719.0 277.5,718.8 282.5,719.0 287.5,719.4 292.5,723.8 297.5,725.9 302.5,728.3 307.5,726.9 312.5,725.0 317.5,722.8 322.5,728.7 327.5,726.8 332.5,724.8 337.5,728.8 342.5,728.3 347.5,726.9 352.5,729.8 357.5,733.2 362.5,745.6 367.5,764.9 372.5,752.9 377.5,753.9 382.5,747.2 387.5,737.0 392.5,739.5 397.5,738.6 402.5,735.2 407.5,735.1 412.5,734.6 417.5,727.9 422.5,726.0 427.5,726.0 432.5,724.7 437.5,726.1 442.5,725.3 447.5,724.4 452.5,719.3 457.5,720.2 462.5,723.6 467.5,722.9 472.5,723.0 477.5,725.5 482.5,726.9 487.5,729.6 492.5,725.6 497.5,724.2 502.5,724.1 507.5,724.8 512.5,727.6 517.5,724.1 522.5,720.8 527.5,717.4 532.5,721.1 537.5,722.7 542.5,722.5 547.5,721.6 552.5,725.0 557.5,726.4 562.5,729.1 567.5,728.2 572.5,726.0 577.5,727.3 582.5,727.6 587.5,731.1 592.5,730.2 597.5,731.1 602.5,727.8 607.5,728.6 612.5,729.1 617.5,724.7 622.5,724.0 627.5,727.7 632.5,728.5 637.5,730.5 642.5,728.6 647.5,727.8 652.5,727.0 657.5,726.1 662.5,727.0 667.5,725.0 672.5,724.4 677.5,728.2 682.5,729.1 687.5,729.0 692.5,726.4 697.5,722.4 702.5,723.2 707.5,721.6 712.5,724.0 717.5,722.6 722.5,719.0 727.5,719.1 732.5,718.3 737.5,716.7 742.5,716.6 747.5,715.2 752.5,715.9 757.5,715.7 762.5,717.4 767.5,721.7 772.5,721.0 777.5,722.3 782.5,722.1 787.5,724.6 792.5,722.8 797.5,723.2 802.5,720.7 807.5,723.1 812.5,722.7 817.5,724.3 822.5,727.8 827.5,729.2 832.5,726.3 837.5,729.0 842.5,733.1 847.5,732.2 852.5,739.5 857.5,743.0 862.5,745.2 867.5,741.8 872.5,742.3 877.5,741.7 882.5,737.8 887.5,736.7 892.5,736.9 897.5,738.0 902.5,741.7 907.5,742.7 912.5,738.3 917.5,739.1 922.5,734.4 927.5,732.7 932.5,730.1 937.5,726.6 942.5,725.5 947.5,721.8 952.5,724.6 957.5,728.3 962.5,732.7 967.5,728.0 972.5,727.2 977.5,728.3 982.5,732.7 987.5,730.0 992.5,732.0 997.5,727.6 1002.5,722.9 1007.5,726.8 1012.5,726.0 1017.5,730.8 1022.5,734.9 1027.5,728.7 1032.5,727.9 1037.5,725.7 1042.5,725.6 1047.5,728.7 1052.5,730.3 1057.5,731.7 1062.5,727.8 1067.5,725.7 1072.5,721.0 1077.5,722.1 1082.5,720.8 1087.5,722.6 1092.5,719.8 1097.5,723.4 1102.5,722.2 1107.5,724.9 1112.5,724.8 1117.5,720.5 1122.5,723.3 1127.5,724.0 1132.5,719.7 1137.5,717.4 1142.5,719.2 1147.5,723.4 1152.5,728.5 1157.5,724.7 1162.5,726.6 1167.5,729.1 1172.5,726.3 1177.5,732.5 1182.5,731.9 1187.5,729.3 1192.5,731.0 1197.5,732.3 1202.5,731.1 1207.5,733.5 1212.5,734.2 1217.5,734.1 1222.5,737.4 1227.5,736.5 1232.5,732.3 1237.5,726.9 1242.5,727.3 1247.5,722.5 1252.5,721.4 1257.5,720.1 1262.5,722.7 1267.5,719.2 1272.5,720.5 1277.5,723.9 1282.5,721.0 1287.5,723.7 1292.5,724.6 1297.5,728.1 1302.5,727.5 1307.5,730.4 1312.5,729.0 1317.5,725.9 1322.5,727.9 1327.5,726.3 1332.5,727.9 1337.5,728.1 1342.5,728.6 1347.5,726.7 1352.5,723.5 1357.5,725.5 1362.5,728.0 1367.5,726.8 1372.5,725.4 1377.5,727.1 1382.5,723.6 1387.5,727.0 1392.5,724.4 1397.5,722.3 1402.5,720.1 1407.5,717.7 1412.5,718.0 1417.5,718.2 1422.5,716.3 1427.5,717.9 1432.5,718.5 1437.5,720.6 1442.5,720.1 1447.5,720.8 1452.5,719.3 1457.5,720.9 1462.5,719.6 1467.5,720.3 1472.5,718.3 1477.5,719.7 1482.5,721.8 1487.5,721.0 1492.5,720.4 1497.5,716.3 1502.5,717.6 1507.5,714.6"/>
<rect x="11" y="725" width="1498" height="1" fill="#f05000"/>
<polyline fill="none" stroke="#0a9040" stroke-width="1" points="67.5,825.6 72.5,825.6 77.5,815.2 82.5,825.6 87.5,836.0 92.5,836.0 97.5,836.0 102.5,836.0 107.5,836.0 112.5,846.4 117.5,836.0 122.5,846.4 127.5,846.4 132.5,846.4 137.5,846.4 142.5,836.0 147.5,836.0 152.5,836.0 157.5,825.6 162.5,825.6 167.5,825.6 172.5,815.2 177.5,815.2 182.5,815.2 187.5,825.6 192.5,815.2 197.5,815.2 202.5,825.6 207.5,815.2 212.5,825.6 217.5,836.0 222.5,825.6 227.5,825.6 232.5,836.0 237.5,836.0 242.5,825.6 247.5,815.2 252.5,825.6 257.5,836.0 262.5,825.6 267.5,825.6 272.5,815.2 277.5,804.8 282.5,804.8 287.5,804.8 292.5,804.8 297.5,815.2 302.5,825.6 307.5,825.6 312.5,815.2 317.5,804.8 322.5,815.2 327.5,815.2 332.5,815.2 337.5,825.6 342.5,825.6 347.5,825.6 352.5,825.6 357.5,825.6 362.5,825.6 367.5,836.0 372.5,836.0 377.5,846.4 382.5,836.0 387.5,836.0 392.5,846.4 397.5,846.4 402.5,846.4 407.5,856.8 412.5,856.8 417.5,846.4 422.5,836.0 427.5,836.0 432.5,836.0 437.5,836.0 442.5,846.4 447.5,846.4 452.5,836.0 457.5,836.0 462.5,846.4 467.5,836.0 472.5,825.6 477.5,836.0 482.5,846.4 487.5,846.4 492.5,846.4 497.5,836.0 502.5,836.0 507.5,846.4 512.5,856.8 517.5,846.4 522.5,836.0 527.5,836.0 532.5,846.4 537.5,846.4 542.5,836.0 547.5,825.6 552.5,836.0 557.5,846.4 562.5,846.4 567.5,836.0 572.5,825.6 577.5,836.0 582.5,846.4 587.5,856.8 592.5,846.4 597.5,846.4 602.5,846.4 607.5,856.8 612.5,856.8 617.5,846.4 622.5,836.0 627.5,846.4 632.5,856.8 637.5,856.8 642.5,846.4 647.5,836.0 652.5,836.0 657.5,825.6 662.5,836.0 667.5,825.6 672.5,815.2 677.5,825.6 682.5,836.0 687.5,825.6 692.5,815.2 697.5,804.8 702.5,815.2 707.5,815.2 712.5,825.6 717.5,825.6 722.5,815.2 727.5,815.2 732.5,815.2 737.5,804.8 742.5,794.3 747.5,794.3 752.5,804.8 757.5,804.8 762.5,804.8 767.5,815.2 772.5,804.8 777.5,815.2 782.5,815.2 787.5,825.6 792.5,825.6 797.5,825.6 802.5,825.6 807.5,836.0 812.5,825.6 817.5,836.0 822.5,836.0 827.5,836.0 832.5,836.0 837.5,836.0 842.5,846.4 847.5,836.0 852.5,846.4 857.5,856.8 862.5,867.2 867.5,856.8 872.5,867.2 877.5,867.2 882.5,856.8 887.5,846.4 892.5,856.8 897.5,856.8 902.5,856.8 907.5,867.2 912.5,856.8 917.5,856.8 922.5,846.4 927.5,846.4 932.5,836.0 937.5,825.6 942.5,825.6 947.5,825.6 952.5,825.6 957.5,825.6 962.5,825.6 967.5,815.2 972.5,815.2 977.5,815.2 982.5,825.6 987.5,825.6 992.5,836.0 997.5,836.0 1002.5,836.0 1007.5,846.4 1012.5,836.0 1017.5,836.0 1022.5,836.0 1027.5,836.0 1032.5,836.0 1037.5,825.6 1042.5,825.6 1047.5,836.0 1052.5,836.0 1057.5,846.4 1062.5,846.4 1067.5,836.0 1072.5,836.0 1077.5,836.0 1082.5,825.6 1087.5,836.0 1092.5,836.0 1097.5,846.4 1102.5,836.0 1107.5,836.0 1112.5,836.0 1117.5,825.6 1122.5,836.0 1127.5,846.4 1132.5,846.4 1137.5,836.0 1142.5,846.4 1147.5,846.4 1152.5,856.8 1157.5,846.4 1162.5,856.8 1167.5,856.8 1172.5,846.4 1177.5,856.8 1182.5,846.4 1187.5,836.0 1192.5,846.4 1197.5,856.8 1202.5,846.4 1207.5,846.4 1212.5,846.4 1217.5,856.8 1222.5,856.8 1227.5,856.8 1232.5,856.8 1237.5,846.4 1242.5,856.8 1247.5,856.8 1252.5,846.4 1257.5,836.0 1262.5,846.4 1267.5,836.0 1272.5,836.0 1277.5,836.0 1282.5,825.6 1287.5,825.6 1292.5,836.0 1297.5,846.4 1302.5,836.0 1307.5,846.4 1312.5,846.4 1317.5,846.4 1322.5,846.4 1327.5,846.4 1332.5,846.4 1337.5,846.4 1342.5,856.8 1347.5,846.4 1352.5,836.0 1357.5,836.0 1362.5,846.4 1367.5,836.0 1372.5,836.0 1377.5,846.4 1382.5,836.0 1387.5,846.4 1392.5,836.0 1397.5,825.6 1402.5,815.2 1407.5,815.2 1412.5,825.6 1417.5,815.2 1422.5,804.8 1427.5,815.2 1432.5,825.6 1437.5,825.6 1442.5,825.6 1447.5,815.2 1452.5,815.2 1457.5,825.6 1462.5,825.6 1467.5,836.0 1472.5,825.6 1477.5,836.0 1482.5,846.4 1487.5,836.0 1492.5,825.6 1497.5,815.2 1502.5,825.6 1507.5,825.6"/>
<rect x="11" y="804" width="1498" height="1" fill="#1060c0"/>
<rect x="11" y="867" width="1498" height="1" fill="#f05000"/>
<rect x="11" y="938" width="3" height="16" fill="#00923a"/>
<rect x="16" y="933" width="3" height="21" fill="#00923a"/>
<rect x="21" y="938" width="3" height="16" fill="#00923a"/>
<rect x="26" y="937" width="3" height="17" fill="#00923a"/>
<rect x="31" y="940" width="3" height="14" fill="#00923a"/>
<rect x="36" y="941" width="3" height="13" fill="#00923a"/>
<rect x="41" y="938" width="3" height="16" fill="#00923a"/>
<rect x="46" y="936" width="3" height="18" fill="#00923a"/>
<rect x="51" y="934" width="3" height="20" fill="#00923a"/>
<rect x="56" y="924" width="3" height="30" fill="#00923a"/>
<rect x="61" y="935" width="3" height="19" fill="#00923a"/>
<rect x="66" y="931" width="3" height="23" fill="#00923a"/>
<rect x="71" y="935" width="3" height="19" fill="#00923a"/>
<rect x="76" y="935" width="3" height="19" fill="#00923a"/>
<rect x="81" y="935" width="3" height="19" fill="#00923a"/>
<rect x="86" y="938" width="3" height="16" fill="#00923a"/>
<rect x="91" y="939" width="3" height="15" fill="#00923a"/>
<rect x="96" y="936" width="3" height="18" fill="#00923a"/>
<rect x="101" y="943" width="3" height="11" fill="#00923a"/>
<rect x="106" y="943" width="3" height="11" fill="#00923a"/>
<rect x="111" y="945" width="3" height="9" fill="#00923a"/>
<rect x="116" y="942" width="3" height="12" fill="#00923a"/>
<rect x="121" y="941" width="3" height="13" fill="#00923a"/>
<rect x="126" y="939" width="3" height="15" fill="#00923a"/>
<rect x="131" y="938" width="3" height="16" fill="#00923a"/>
<rect x="136" y="931" width="3" height="23" fill="#00923a"/>
<rect x="141" y="932" width="3" height="22" fill="#00923a"/>
<rect x="146" y="934" width="3" height="20" fill="#00923a"/>
<rect x="151" y="930" width="3" height="24" fill="#00923a"/>
<rect x="156" y="933" width="3" height="21" fill="#00923a"/>
<rect x="161" y="931" width="3" height="23" fill="#00923a"/>
<rect x="166" y="937" width="3" height="17" fill="#00923a"/>
<rect x="171" y="936" width="3" height="18" fill="#00923a"/>
<rect x="176" y="933" width="3" height="21" fill="#00923a"/>
<rect x="181" y="935" width="3" height="19" fill="#00923a"/>
<rect x="186" y="928" width="3" height="26" fill="#00923a"/>
<rect x="191" y="937" width="3" height="17" fill="#00923a"/>
<rect x="196" y="936" width="3" height="18" fill="#00923a"/>
<rect x="201" y="939" width="3" height="15" fill="#00923a"/>
<rect x="206" y="935" width="3" height="19" fill="#00923a"/>
<rect x="211" y="934" width="3" height="20" fill="#00923a"/>
<rect x="216" y="936" width="3" height="18" fill="#00923a"/>
<rect x="221" y="935" width="3" height="19" fill="#00923a"/>
<rect x="226" y="931" width="3" height="23" fill="#00923a"/>
<rect x="231" y="935" width="3" height="19" fill="#00923a"/>
<rect x="236" y="930" width="3" height="24" fill="#00923a"/>
<rect x="241" y="934" width="3" height="20" fill="#00923a"/>
<rect x="246" y="934" width="3" height="20" fill="#00923a"/>
<rect x="251" y="932" width="3" height="22" fill="#00923a"/>
<rect x="256" y="934" width="3" height="20" fill="#00923a"/>
<rect x="261" y="934" width="3" height="20" fill="#00923a"/>
<rect x="266" y="935" width="3" height="19" fill="#00923a"/>
<rect x="271" y="929" width="3" height="25" fill="#00923a"/>
<rect x="276" y="931" width="3" height="23" fill="#00923a"/>
<rect x="281" y="934" width="3" height="20" fill="#00923a"/>
<rect x="286" y="934" width="3" height="20" fill="#00923a"/>
<rect x="291" y="930" width="3" height="24" fill="#00923a"/>
<rect x="296" y="930" width="3" height="24" fill="#00923a"/>
<rect x="301" y="929" width="3" height="25" fill="#00923a"/>
<rect x="306" y="934" width="3" height="20" fill="#00923a"/>
<rect x="311" y="930" width="3" height="24" fill="#00923a"/>
<rect x="316" y="933" width="3" height="21" fill="#00923a"/>
<rect x="321" y="933" width="3" height="21" fill="#00923a"/>
<rect x="326" y="937" width="3" height="17" fill="#00923a"/>
<rect x="331" y="932" width="3" height="22" fill="#00923a"/>
<rect x="336" y="933" width="3" height="21" fill="#00923a"/>
<rect x="341" y="933" width="3" height="21" fill="#00923a"/>
<rect x="346" y="936" width="3" height="18" fill="#00923a"/>
<rect x="351" y="936" width="3" height="18" fill="#00923a"/>
<rect x="356" y="923" width="3" height="31" fill="#00923a"/>
<rect x="361" y="906" width="3" height="48" fill="#00923a"/>
<rect x="366" y="897" width="3" height="57" fill="#00923a"/>
<rect x="371" y="905" width="3" height="49" fill="#00923a"/>
<rect x="376" y="914" width="3" height="40" fill="#00923a"/>
<rect x="381" y="922" width="3" height="32" fill="#00923a"/>
<rect x="386" y="918" width="3" height="36" fill="#00923a"/>
<rect x="391" y="915" width="3" height="39" fill="#00923a"/>
<rect x="396" y="922" width="3" height="32" fill="#00923a"/>
<rect x="401" y="923" width="3" height="31" fill="#00923a"/>
<rect x="406" y="926" width="3" height="28" fill="#00923a"/>
<rect x="411" y="926" width="3" height="28" fill="#00923a"/>
<rect x="416" y="924" width="3" height="30" fill="#00923a"/>
<rect x="421" y="928" width="3" height="26" fill="#00923a"/>
<rect x="426" y="928" width="3" height="26" fill="#00923a"/>
<rect x="431" y="930" width="3" height="24" fill="#00923a"/>
<rect x="436" y="929" width="3" height="25" fill="#00923a"/>
<rect x="441" y="928" width="3" height="26" fill="#00923a"/>
<rect x="446" y="933" width="3" height="21" fill="#00923a"/>
<rect x="451" y="927" width="3" height="27" fill="#00923a"/>
<rect x="456" y="935" width="3" height="19" fill="#00923a"/>
<rect x="461" y="933" width="3" height="21" fill="#00923a"/>
<rect x="466" y="934" width="3" height="20" fill="#00923a"/>
<rect x="471" y="933" width="3" height="21" fill="#00923a"/>
<rect x="476" y="934" width="3" height="20" fill="#00923a"/>
<rect x="481" y="939" width="3" height="15" fill="#00923a"/>
<rect x="486" y="937" width="3" height="17" fill="#00923a"/>
<rect x="491" y="938" width="3" height="16" fill="#00923a"/>
<rect x="496" y="939" width="3" height="15" fill="#00923a"/>
<rect x="501" y="938" width="3" height="16" fill="#00923a"/>
<rect x="506" y="941" width="3" height="13" fill="#00923a"/>
<rect x="511" y="940" width="3" height="14" fill="#00923a"/>
<rect x="516" y="938" width="3" height="16" fill="#00923a"/>
<rect x="521" y="933" width="3" height="21" fill="#00923a"/>
<rect x="526" y="937" width="3" height="17" fill="#00923a"/>
<rect x="531" y="936" width="3" height="18" fill="#00923a"/>
<rect x="536" y="938" width="3" height="16" fill="#00923a"/>
<rect x="541" y="936" width="3" height="18" fill="#00923a"/>
<rect x="546" y="935" width="3" height="19" fill="#00923a"/>
<rect x="551" y="935" width="3" height="19" fill="#00923a"/>
<rect x="556" y="927" width="3" height="27" fill="#00923a"/>
<rect x="561" y="937" width="3" height="17" fill="#00923a"/>
<rect x="566" y="936" width="3" height="18" fill="#00923a"/>
<rect x="571" y="937" width="3" height="17" fill="#00923a"/>
<rect x="576" y="939" width="3" height="15" fill="#00923a"/>
<rect x="581" y="939" width="3" height="15" fill="#00923a"/>
<rect x="586" y="937" width="3" height="17" fill="#00923a"/>
<rect x="591" y="939" width="3" height="15" fill="#00923a"/>
<rect x="596" y="939" width="3" height="15" fill="#00923a"/>
<rect x="601" y="939" width="3" height="15" fill="#00923a"/>
<rect x="606" y="940" width="3" height="14" fill="#00923a"/>
<rect x="611" y="942" width="3" height="12" fill="#00923a"/>
<rect x="616" y="932" width="3" height="22" fill="#00923a"/>
<rect x="621" y="935" width="3" height="19" fill="#00923a"/>
<rect x="626" y="935" width="3" height="19" fill="#00923a"/>
<rect x="631" y="939" width="3" height="15" fill="#00923a"/>
<rect x="636" y="936" width="3" height="18" fill="#00923a"/>
<rect x="641" y="938" width="3" height="16" fill="#00923a"/>
<rect x="646" y="939" width="3" height="15" fill="#00923a"/>
<rect x="651" y="937" width="3" height="17" fill="#00923a"/>
<rect x="656" y="931" width="3" height="23" fill="#00923a"/>
<rect x="661" y="941" width="3" height="13" fill="#00923a"/>
<rect x="666" y="936" width="3" height="18" fill="#00923a"/>
<rect x="671" y="935" width="3" height="19" fill="#00923a"/>
<rect x="676" y="937" width="3" height="17" fill="#00923a"/>
<rect x="681" y="936" width="3" height="18" fill="#00923a"/>
<rect x="686" y="939" width="3" height="15" fill="#00923a"/>
<rect x="691" y="939" width="3" height="15" fill="#00923a"/>
<rect x="696" y="936" width="3" height="18" fill="#00923a"/>
<rect x="701" y="938" width="3" height="16" fill="#00923a"/>
<rect x="706" y="938" width="3" height="16" fill="#00923a"/>
<rect x="711" y="939" width="3" height="15" fill="#00923a"/>
<rect x="716" y="938" width="3" height="16" fill="#00923a"/>
<rect x="721" y="939" width="3" height="15" fill="#00923a"/>
<rect x="726" y="936" width="3" height="18" fill="#00923a"/>
<rect x="731" y="939" width="3" height="15" fill="#00923a"/>
<rect x="736" y="936" width="3" height="18" fill="#00923a"/>
<rect x="741" y="937" width="3" height="17" fill="#00923a"/>
<rect x="746" y="937" width="3" height="17" fill="#00923a"/>
<rect x="751" y="937" width="3" height="17" fill="#00923a"/>
<rect x="756" y="937" width="3" height="17" fill="#00923a"/>
<rect x="761" y="940" width="3" height="14" fill="#00923a"/>
<rect x="766" y="937" width="3" height="17" fill="#00923a"/>
<rect x="771" y="938" width="3" height="16" fill="#00923a"/>
<rect x="776" y="938" width="3" height="16" fill="#00923a"/>
<rect x="781" y="941" width="3" height="13" fill="#00923a"/>
<rect x="786" y="940" width="3" height="14" fill="#00923a"/>
<rect x="791" y="940" width="3" height="14" fill="#00923a"/>
<rect x="796" y="937" width="3" height="17" fill="#00923a"/>
<rect x="801" y="938" width="3" height="16" fill="#00923a"/>
<rect x="806" y="941" width="3" height="13" fill="#00923a"/>
<rect x="811" y="939" width="3" height="15" fill="#00923a"/>
<rect x="816" y="938" width="3" height="16" fill="#00923a"/>
<rect x="821" y="937" width="3" height="17" fill="#00923a"/>
<rect x="826" y="936" width="3" height="18" fill="#00923a"/>
<rect x="831" y="936" width="3" height="18" fill="#00923a"/>
<rect x="836" y="939" width="3" height="15" fill="#00923a"/>
<rect x="841" y="937" width="3" height="17" fill="#00923a"/>
<rect x="846" y="935" width="3" height="19" fill="#00923a"/>
<rect x="851" y="930" width="3" height="24" fill="#00923a"/>
<rect x="856" y="935" width="3" height="19" fill="#00923a"/>
<rect x="861" y="922" width="3" height="32" fill="#00923a"/>
<rect x="866" y="933" width="3" height="21" fill="#00923a"/>
<rect x="871" y="933" width="3" height="21" fill="#00923a"/>
<rect x="876" y="935" width="3" height="19" fill="#00923a"/>
<rect x="881" y="940" width="3" height="14" fill="#00923a"/>
<rect x="886" y="939" width="3" height="15" fill="#00923a"/>
<rect x="891" y="939" width="3" height="15" fill="#00923a"/>
<rect x="896" y="938" width="3" height="16" fill="#00923a"/>
<rect x="901" y="935" width="3" height="19" fill="#00923a"/>
<rect x="906" y="936" width="3" height="18" fill="#00923a"/>
<rect x="911" y="934" width="3" height="20" fill="#00923a"/>
<rect x="916" y="933" width="3" height="21" fill="#00923a"/>
<rect x="921" y="935" width="3" height="19" fill="#00923a"/>
<rect x="926" y="936" width="3" height="18" fill="#00923a"/>
<rect x="931" y="936" width="3" height="18" fill="#00923a"/>
<rect x="936" y="937" width="3" height="17" fill="#00923a"/>
<rect x="941" y="937" width="3" height="17" fill="#00923a"/>
<rect x="946" y="938" width="3" height="16" fill="#00923a"/>
<rect x="951" y="938" width="3" height="16" fill="#00923a"/>
<rect x="956" y="939" width="3" height="15" fill="#00923a"/>
<rect x="961" y="934" width="3" height="20" fill="#00923a"/>
<rect x="966" y="938" width="3" height="16" fill="#00923a"/>
<rect x="971" y="941" width="3" height="13" fill="#00923a"/>
<rect x="976" y="933" width="3" height="21" fill="#00923a"/>
<rect x="981" y="938" width="3" height="16" fill="#00923a"/>
<rect x="986" y="938" width="3" height="16" fill="#00923a"/>
<rect x="991" y="938" width="3" height="16" fill="#00923a"/>
<rect x="996" y="938" width="3" height="16" fill="#00923a"/>
<rect x="1001" y="936" width="3" height="18" fill="#00923a"/>
<rect x="1006" y="941" width="3" height="13" fill="#00923a"/>
<rect x="1011" y="941" width="3" height="13" fill="#00923a"/>
<rect x="1016" y="938" width="3" height="16" fill="#00923a"/>
<rect x="1021" y="934" width="3" height="20" fill="#00923a"/>
<rect x="1026" y="936" width="3" height="18" fill="#00923a"/>
<rect x="1031" y="937" width="3" height="17" fill="#00923a"/>
<rect x="1036" y="934" width="3" height="20" fill="#00923a"/>
<rect x="1041" y="935" width="3" height="19" fill="#00923a"/>
<rect x="1046" y="936" width="3" height="18" fill="#00923a"/>
<rect x="1051" y="935" width="3" height="19" fill="#00923a"/>
<rect x="1056" y="935" width="3" height="19" fill="#00923a"/>
<rect x="1061" y="939" width="3" height="15" fill="#00923a"/>
<rect x="1066" y="939" width="3" height="15" fill="#00923a"/>
<rect x="1071" y="940" width="3" height="14" fill="#00923a"/>
<rect x="1076" y="940" width="3" height="14" fill="#00923a"/>
<rect x="1081" y="940" width="3" height="14" fill="#00923a"/>
<rect x="1086" y="940" width="3" height="14" fill="#00923a"/>
<rect x="1091" y="941" width="3" height="13" fill="#00923a"/>
<rect x="1096" y="944" width="3" height="10" fill="#00923a"/>
<rect x="1101" y="942" width="3" height="12" fill="#00923a"/>
<rect x="1106" y="941" width="3" height="13" fill="#00923a"/>
<rect x="1111" y="942" width="3" height="12" fill="#00923a"/>
<rect x="1116" y="942" width="3" height="12" fill="#00923a"/>
<rect x="1121" y="941" width="3" height="13" fill="#00923a"/>
<rect x="1126" y="941" width="3" height="13" fill="#00923a"/>
<rect x="1131" y="937" width="3" height="17" fill="#00923a"/>
<rect x="1136" y="934" width="3" height="20" fill="#00923a"/>
<rect x="1141" y="938" width="3" height="16" fill="#00923a"/>
<rect x="1146" y="941" width="3" height="13" fill="#00923a"/>
<rect x="1151" y="938" width="3" height="16" fill="#00923a"/>
<rect x="1156" y="939" width="3" height="15" fill="#00923a"/>
<rect x="1161" y="941" width="3" height="13" fill="#00923a"/>
<rect x="1166" y="937" width="3" height="17" fill="#00923a"/>
<rect x="1171" y="937" width="3" height="17" fill="#00923a"/>
<rect x="1176" y="936" width="3" height="18" fill="#00923a"/>
<rect x="1181" y="939" width="3" height="15" fill="#00923a"/>
<rect x="1186" y="941" width="3" height="13" fill="#00923a"/>
<rect x="1191" y="943" width="3" height="11" fill="#00923a"/>
<rect x="1196" y="942" width="3" height="12" fill="#00923a"/>
<rect x="1201" y="940" width="3" height="14" fill="#00923a"/>
<rect x="1206" y="941" width="3" height="13" fill="#00923a"/>
<rect x="1211" y="943" width="3" height="11" fill="#00923a"/>
<rect x="1216" y="940" width="3" height="14" fill="#00923a"/>
<rect x="1221" y="940" width="3" height="14" fill="#00923a"/>
<rect x="1226" y="940" width="3" height="14" fill="#00923a"/>
<rect x="1231" y="942" width="3" height="12" fill="#00923a"/>
<rect x="1236" y="940" width="3" height="14" fill="#00923a"/>
<rect x="1241" y="938" width="3" height="16" fill="#00923a"/>
<rect x="1246" y="935" width="3" height="19" fill="#00923a"/>
<rect x="1251" y="940" width="3" height="14" fill="#00923a"/>
<rect x="1256" y="941" width="3" height="13" fill="#00923a"/>
<rect x="1261" y="939" width="3" height="15" fill="#00923a"/>
<rect x="1266" y="937" width="3" height="17" fill="#00923a"/>
<rect x="1271" y="938" width="3" height="16" fill="#00923a"/>
<rect x="1276" y="929" width="3" height="25" fill="#00923a"/>
<rect x="1281" y="940" width="3" height="14" fill="#00923a"/>
<rect x="1286" y="939" width="3" height="15" fill="#00923a"/>
<rect x="1291" y="940" width="3" height="14" fill="#00923a"/>
<rect x="1296" y="940" width="3" height="14" fill="#00923a"/>
<rect x="1301" y="941" width="3" height="13" fill="#00923a"/>
<rect x="1306" y="941" width="3" height="13" fill="#00923a"/>
<rect x="1311" y="944" width="3" height="10" fill="#00923a"/>
<rect x="1316" y="943" width="3" height="11" fill="#00923a"/>
<rect x="1321" y="944" width="3" height="10" fill="#00923a"/>
<rect x="1326" y="947" width="3" height="7" fill="#00923a"/>
<rect x="1331" y="948" width="3" height="6" fill="#00923a"/>
<rect x="1336" y="945" width="3" height="9" fill="#00923a"/>
<rect x="1341" y="946" width="3" height="8" fill="#00923a"/>
<rect x="1346" y="947" width="3" height="7" fill="#00923a"/>
<rect x="1351" y="941" width="3" height="13" fill="#00923a"/>
<rect x="1356" y="943" width="3" height="11" fill="#00923a"/>
<rect x="1361" y="940" width="3" height="14" fill="#00923a"/>
<rect x="1366" y="939" width="3" height="15" fill="#00923a"/>
<rect x="1371" y="939" width="3" height="15" fill="#00923a"/>
<rect x="1376" y="942" width="3" height="12" fill="#00923a"/>
<rect x="1381" y="938" width="3" height="16" fill="#00923a"/>
<rect x="1386" y="942" width="3" height="12" fill="#00923a"/>
<rect x="1391" y="938" width="3" height="16" fill="#00923a"/>
<rect x="1396" y="932" width="3" height="22" fill="#00923a"/>
<rect x="1401" y="934" width="3" height="20" fill="#00923a"/>
<rect x="1406" y="929" width="3" height="25" fill="#00923a"/>
<rect x="1411" y="935" width="3" height="19" fill="#00923a"/>
<rect x="1416" y="937" width="3" height="17" fill="#00923a"/>
<rect x="1421" y="933" width="3" height="21" fill="#00923a"/>
<rect x="1426" y="936" width="3" height="18" fill="#00923a"/>
<rect x="1431" y="936" width="3" height="18" fill="#00923a"/>
<rect x="1436" y="939" width="3" height="15" fill="#00923a"/>
<rect x="1441" y="935" width="3" height="19" fill="#00923a"/>
<rect x="1446" y="934" width="3" height="20" fill="#00923a"/>
<rect x="1451" y="933" width="3" height="21" fill="#00923a"/>
<rect x="1456" y="932" width="3" height="22" fill="#00923a"/>
<rect x="1461" y="933" width="3" height="21" fill="#00923a"/>
<rect x="1466" y="934" width="3" height="20" fill="#00923a"/>
<rect x="1471" y="930" width="3" height="24" fill="#00923a"/>
<rect x="1476" y="928" width="3" height="26" fill="#00923a"/>
<rect x="1481" y="932" width="3" height="22" fill="#00923a"/>
<rect x="1486" y="935" width="3" height="19" fill="#00923a"/>
<rect x="1491" y="933" width="3" height="21" fill="#00923a"/>
<rect x="1496" y="926" width="3" height="28" fill="#00923a"/>
<rect x="1501" y="931" width="3" height="23" fill="#00923a"/>
<rect x="1506" y="929" width="3" height="25" fill="#00923a"/>
<rect x="11" y="949" width="1518" height="2" fill="#000"/>
<path transform="translate(12.00,104.00) scale(1.150)" d="M2 1H8V10H2Z M2 5.5H8" fill="none" stroke="#000" stroke-width="0.870" stroke-linecap="square"/><path transform="translate(24.00,104.00) scale(1.150)" d="M3 0.5L1 3L4 4L1 6.5H5 M3 6.5V10.5 M1 8.5L0.5 9.5 M4.5 8L5 9 M5.5 1H9.5L6 5 M6.5 2.5L10 5 M6 6.5H9.5 M7.7 5.5V10 M5.5 10H10" fill="none" stroke="#000" stroke-width="0.870" stroke-linecap="square"/><path transform="translate(36.00,104.00) scale(1.150)" d="M1 1H9 M2.5 2.5L3.5 4.5 M7.5 2.5L6.5 4.5 M0.5 6H9.5 M5 1V10.5" fill="none" stroke="#000" stroke-width="0.870" stroke-linecap="square"/><path transform="translate(48.00,104.00) scale(1.150)" d="M0.5 4H4 M2.2 1.5V9 M0.5 9.5L4.5 8 M6 0.5L5 3.5 M5.5 2.5H9.5V10H8.5 M6 5L7.5 6 M5 8.5L8.5 7" fill="none" stroke="#000" stroke-width="0.870" stroke-linecap="square"/>
<text x="61" y="114.5" font-size="12.5" fill="#000" >(</text>
<path transform="translate(68.00,104.00) scale(1.150)" d="M0 3.5H3.5 M2 0.5V10L1 9.5 M0 7.5L3.5 6 M5 0.5V3.5H9.5 M9 0.5L5.5 2 M5 5H9V10H5Z M5 7.5H9" fill="none" stroke="#000" stroke-width="0.870" stroke-linecap="square"/><path transform="translate(80.00,104.00) scale(1.150)" d="M1 0.5L2 2 M4 0.5L3 2 M0.5 2.5H4.5 M2.5 0.5V5 M0.5 5L2.5 3.5L4.5 5.5 M0.5 6.5H4.5L1 10.5 M1.5 8L4.5 10 M6 0.5L5 4 M5.5 2.5H9.5 M9 2.5L5.5 10 M6 5L9.5 10" fill="none" stroke="#000" stroke-width="0.870" stroke-linecap="square"/>
<text x="95" y="114.5" font-size="12.5" fill="#000" >)</text>
<text x="108" y="114.5" font-size="13" fill="#000" textLength="88" lengthAdjust="spacingAndGlyphs" >Bollinger_Bands</text>
<text x="200" y="114.5" font-size="13" fill="#000" textLength="32" lengthAdjust="spacingAndGlyphs" >(20,2)</text>
<text x="237" y="114.5" font-size="13" fill="#000" textLength="69" lengthAdjust="spacingAndGlyphs" >2012/02/17</text>
<text x="311" y="114.5" font-size="13" fill="#0a9a3a" textLength="47" lengthAdjust="spacingAndGlyphs" >8,949.26</text>
<text x="362" y="114.5" font-size="13" fill="#f05000" textLength="48" lengthAdjust="spacingAndGlyphs" >9,284.48</text>
<text x="415" y="114.5" font-size="13" fill="#0a5ee0" textLength="47" lengthAdjust="spacingAndGlyphs" >8,614.05</text>
<text x="12" y="495.5" font-size="13" fill="#000" textLength="104" lengthAdjust="spacingAndGlyphs" >MACD_EMA_Signal</text>
<text x="120" y="495.5" font-size="13" fill="#000" textLength="51" lengthAdjust="spacingAndGlyphs" >(12,26,9)</text>
<text x="174" y="495.5" font-size="13" fill="#000" textLength="69" lengthAdjust="spacingAndGlyphs" >2012/02/17</text>
<text x="247" y="495.5" font-size="13" fill="#0a9a3a" textLength="38" lengthAdjust="spacingAndGlyphs" >165.86</text>
<text x="289" y="495.5" font-size="13" fill="#f05000" textLength="38" lengthAdjust="spacingAndGlyphs" >128.93</text>
<text x="332" y="495.5" font-size="13" fill="#ff0000" textLength="30" lengthAdjust="spacingAndGlyphs" >36.93</text>
<text x="367" y="495.5" font-size="13" fill="#ff00ff" textLength="24" lengthAdjust="spacingAndGlyphs" >0.00</text>
<text x="12" y="603.5" font-size="13" fill="#000" textLength="24" lengthAdjust="spacingAndGlyphs" >RSI</text>
<text x="40" y="603.5" font-size="13" fill="#000" textLength="17" lengthAdjust="spacingAndGlyphs" >(14)</text>
<text x="60" y="603.5" font-size="13" fill="#000" textLength="70" lengthAdjust="spacingAndGlyphs" >2012/02/17</text>
<text x="134" y="603.5" font-size="13" fill="#0a9a3a" textLength="31" lengthAdjust="spacingAndGlyphs" >83.37</text>
<text x="169" y="603.5" font-size="13" fill="#f05000" textLength="32" lengthAdjust="spacingAndGlyphs" >30.00</text>
<text x="205" y="603.5" font-size="13" fill="#1060c0" textLength="31" lengthAdjust="spacingAndGlyphs" >70.00</text>
<path transform="translate(11.00,695.00) scale(1.200)" d="M8 0.5L1 2 M0.5 4H9.5 M5 1.5V10.5 M3.5 2.5V8 M6.5 2.5V8 M0.5 6H3.5 M6.5 6H9.5 M0.5 9L3.5 7.5 M6.5 7.5L9.5 9" fill="none" stroke="#000" stroke-width="0.833" stroke-linecap="square"/><path transform="translate(24.40,695.00) scale(1.200)" d="M2.5 0V1 M0.5 1.5H5 M1 2.5L4 5 M4 2.5L1 5 M0.5 10.5V5.5H4.5V10.5 M2.5 6.5L1.5 9H4 M7 0.5L5.5 4 M6 3V10.5 M6 3H9.5 M8 0.5V10 M6 5.3H9 M6 7.5H9 M6 10H10" fill="none" stroke="#000" stroke-width="0.833" stroke-linecap="square"/><path transform="translate(37.80,695.00) scale(1.200)" d="M5 0V1 M1.5 1.5H9.5 M1.5 1.5V6L0.5 10.5 M2.5 3.5H9 M4 2.5V5.5H7.5V2.5 M3 6.5H8L3.5 10.5 M4 7.5L9 10.5" fill="none" stroke="#000" stroke-width="0.833" stroke-linecap="square"/>
<text x="57" y="705.5" font-size="13" fill="#000" textLength="22" lengthAdjust="spacingAndGlyphs" >(20)</text>
<text x="82" y="705.5" font-size="13" fill="#000" textLength="70" lengthAdjust="spacingAndGlyphs" >2012/02/17</text>
<text x="156" y="705.5" font-size="13" fill="#0a9a3a" textLength="38" lengthAdjust="spacingAndGlyphs" >104.86</text>
<text x="198" y="705.5" font-size="13" fill="#f05000" textLength="38" lengthAdjust="spacingAndGlyphs" >100.00</text>
<path transform="translate(12.00,774.00) scale(1.150)" d="M0.5 3H9.5 M3 0.5V5.5 M7 0.5V6L4.5 10.5" fill="none" stroke="#000" stroke-width="0.870" stroke-linecap="square"/><path transform="translate(24.05,774.00) scale(1.150)" d="M8.5 0.5L0.5 6 M5 3.5V10.5" fill="none" stroke="#000" stroke-width="0.870" stroke-linecap="square"/><path transform="translate(36.10,774.00) scale(1.150)" d="M1.5 1.5H8.5V9H1.5" fill="none" stroke="#000" stroke-width="0.870" stroke-linecap="square"/><path transform="translate(48.15,774.00) scale(1.150)" d="M1.5 1.5H8.5V9.5H1.5Z" fill="none" stroke="#000" stroke-width="0.870" stroke-linecap="square"/><path transform="translate(60.20,774.00) scale(1.150)" d="M1 1.5L2.5 2.5 M0.5 4.5L2 5.5 M1.5 10L9 2 M7.5 0L8 1.5 M9.5 0L10 1" fill="none" stroke="#000" stroke-width="0.870" stroke-linecap="square"/><path transform="translate(72.25,774.00) scale(1.150)" d="M0.5 3H8.5L8 10L6.5 9.5 M4.5 0.5V4L1.5 10.5" fill="none" stroke="#000" stroke-width="0.870" stroke-linecap="square"/><path transform="translate(84.30,774.00) scale(1.150)" d="M3 1V6L0.5 10.5 M6 1V10L9.5 7" fill="none" stroke="#000" stroke-width="0.870" stroke-linecap="square"/><path transform="translate(96.35,774.00) scale(1.150)" d="M2 0.5H8 M1 3.5H8.5L7 8L3.5 10.5" fill="none" stroke="#000" stroke-width="0.870" stroke-linecap="square"/><path transform="translate(108.40,774.00) scale(1.150)" d="M8.5 0.5L0.5 6 M5 3.5V10.5" fill="none" stroke="#000" stroke-width="0.870" stroke-linecap="square"/><path transform="translate(120.45,774.00) scale(1.150)" d="M1 1.5L3 3 M1 10Q7 8.5 9.5 2" fill="none" stroke="#000" stroke-width="0.870" stroke-linecap="square"/>
<text x="137" y="784.5" font-size="13" fill="#000" textLength="23" lengthAdjust="spacingAndGlyphs" >(12)</text>
<text x="164" y="784.5" font-size="13" fill="#000" textLength="69" lengthAdjust="spacingAndGlyphs" >2012/02/17</text>
<text x="237" y="784.5" font-size="13" fill="#0a9a3a" textLength="31" lengthAdjust="spacingAndGlyphs" >58.33</text>
<text x="273" y="784.5" font-size="13" fill="#f05000" textLength="31" lengthAdjust="spacingAndGlyphs" >25.00</text>
<text x="309" y="784.5" font-size="13" fill="#1060c0" textLength="30" lengthAdjust="spacingAndGlyphs" >75.00</text>
<path transform="translate(12.00,878.00) scale(1.150)" d="M5 0.5V10 M1.5 1.5V4.5H8.5V1.5 M1 5.5V10H9V5.5" fill="none" stroke="#000" stroke-width="0.870" stroke-linecap="square"/><path transform="translate(25.30,878.00) scale(1.150)" d="M0.5 2H9.5 M2.5 3L3.5 4.5 M7.5 3L6.5 4.5 M0.5 5H9.5 M5 0.5V10.5 M4.5 6L1 9.5 M5.5 6L9 9.5" fill="none" stroke="#000" stroke-width="0.870" stroke-linecap="square"/><path transform="translate(38.60,878.00) scale(1.150)" d="M5 0V1 M0.5 1.5H9.5 M3 2.5H7V4.5H3Z M1 10.5V5.5H9V10.5H8 M3.5 7H6.5V9H3.5Z" fill="none" stroke="#000" stroke-width="0.870" stroke-linecap="square"/>
<text x="56" y="888.5" font-size="13" fill="#000" textLength="70" lengthAdjust="spacingAndGlyphs" >2012/02/17</text>
<text x="130" y="888.5" font-size="13" fill="#0a9a3a" textLength="73" lengthAdjust="spacingAndGlyphs" >2,625,950.00</text>
<path d="M283 196.5L277.5 199.5L283 202.5M279 198.5H292M279 200.5H292" fill="none" stroke="#ff0000"/>
<text x="296" y="206.5" font-size="13" fill="#ff0000" textLength="139" lengthAdjust="spacingAndGlyphs" >10,891.60 (2011/02/17)</text>
<path d="M1226 461.5H1240M1226 461.5L1232 465.5L1240 461.5" fill="none" stroke="#10109a"/>
<text x="1246" y="468.5" font-size="13" fill="#10109a" textLength="131" lengthAdjust="spacingAndGlyphs" >8,135.79 (2011/11/25)</text>
<text x="1398" y="131.5" font-size="13" fill="#ff0000" textLength="62" lengthAdjust="spacingAndGlyphs" >H: &#8722;13.84%</text>
<text x="1469" y="131.5" font-size="13" fill="#10109a" textLength="53" lengthAdjust="spacingAndGlyphs" >L: 15.34%</text>
<rect x="1542" y="322" width="45" height="14" fill="#ff0000" />
<text x="1542" y="334.5" font-size="13" fill="#fff" textLength="44" lengthAdjust="spacingAndGlyphs" >9384.17</text>
<path d="M1538 344.5h7l-3.5-4z" fill="#ff0000"/>
<text x="1549" y="348.5" font-size="13" fill="#ff0000" textLength="37" lengthAdjust="spacingAndGlyphs" >146.07</text>
<text x="1544" y="362.5" font-size="13" fill="#ff0000" textLength="32" lengthAdjust="spacingAndGlyphs" >1.58%</text>
<path d="M15 981.5H41M15 984.5H41" stroke="#fff"/><path d="M15 982.5H41M15 985.5H41" stroke="#808080"/>
<rect x="46.5" y="977.5" width="14" height="12" fill="#d4d0c8" stroke="#404040"/><path d="M46.5 989.5V977.5H60.5" fill="none" stroke="#fff"/>
<path d="M51 983.5L54 980.5V986.5z" fill="#000"/>
<rect x="61.5" y="977.5" width="15" height="12" fill="#d4d0c8" stroke="#404040"/><path d="M61.5 989.5V977.5H76.5" fill="none" stroke="#fff"/>
<rect x="1480.5" y="977.5" width="14" height="12" fill="#d4d0c8" stroke="#404040"/><path d="M1480.5 989.5V977.5H1494.5" fill="none" stroke="#fff"/><path d="M1486 980.5L1489 983.5L1486 986.5z" fill="#000"/>
<path d="M1497 983.5L1502.5 978V989zM1510 983.5L1504.5 978V989z" fill="#000"/>
<path d="M1516 978L1522 983.5L1516 989zM1528 978L1522 983.5L1528 989z" fill="#000"/>
<circle cx="1540" cy="983.5" r="5.2" fill="#fff" stroke="#000" stroke-width="1.3"/><path d="M1536.5 983.5h7M1540 980v7" stroke="#000" stroke-width="1.6"/>
<circle cx="1558" cy="983.5" r="5.2" fill="none" stroke="#909090" stroke-width="1.1" stroke-dasharray="2 1"/><path d="M1554.5 983.5h7" stroke="#909090" stroke-width="1.3"/>
<rect x="1570.5" y="978.5" width="10" height="10" fill="none" stroke="#909090"/><path d="M1575.5 979v9M1571 983.5h9" stroke="#909090"/>
<rect x="1588.5" y="978.5" width="11" height="10" fill="#fff" stroke="#000" stroke-width="1.4"/><path d="M1590 980L1598 987M1598 980L1590 987" stroke="#000"/></svg></body></html>
